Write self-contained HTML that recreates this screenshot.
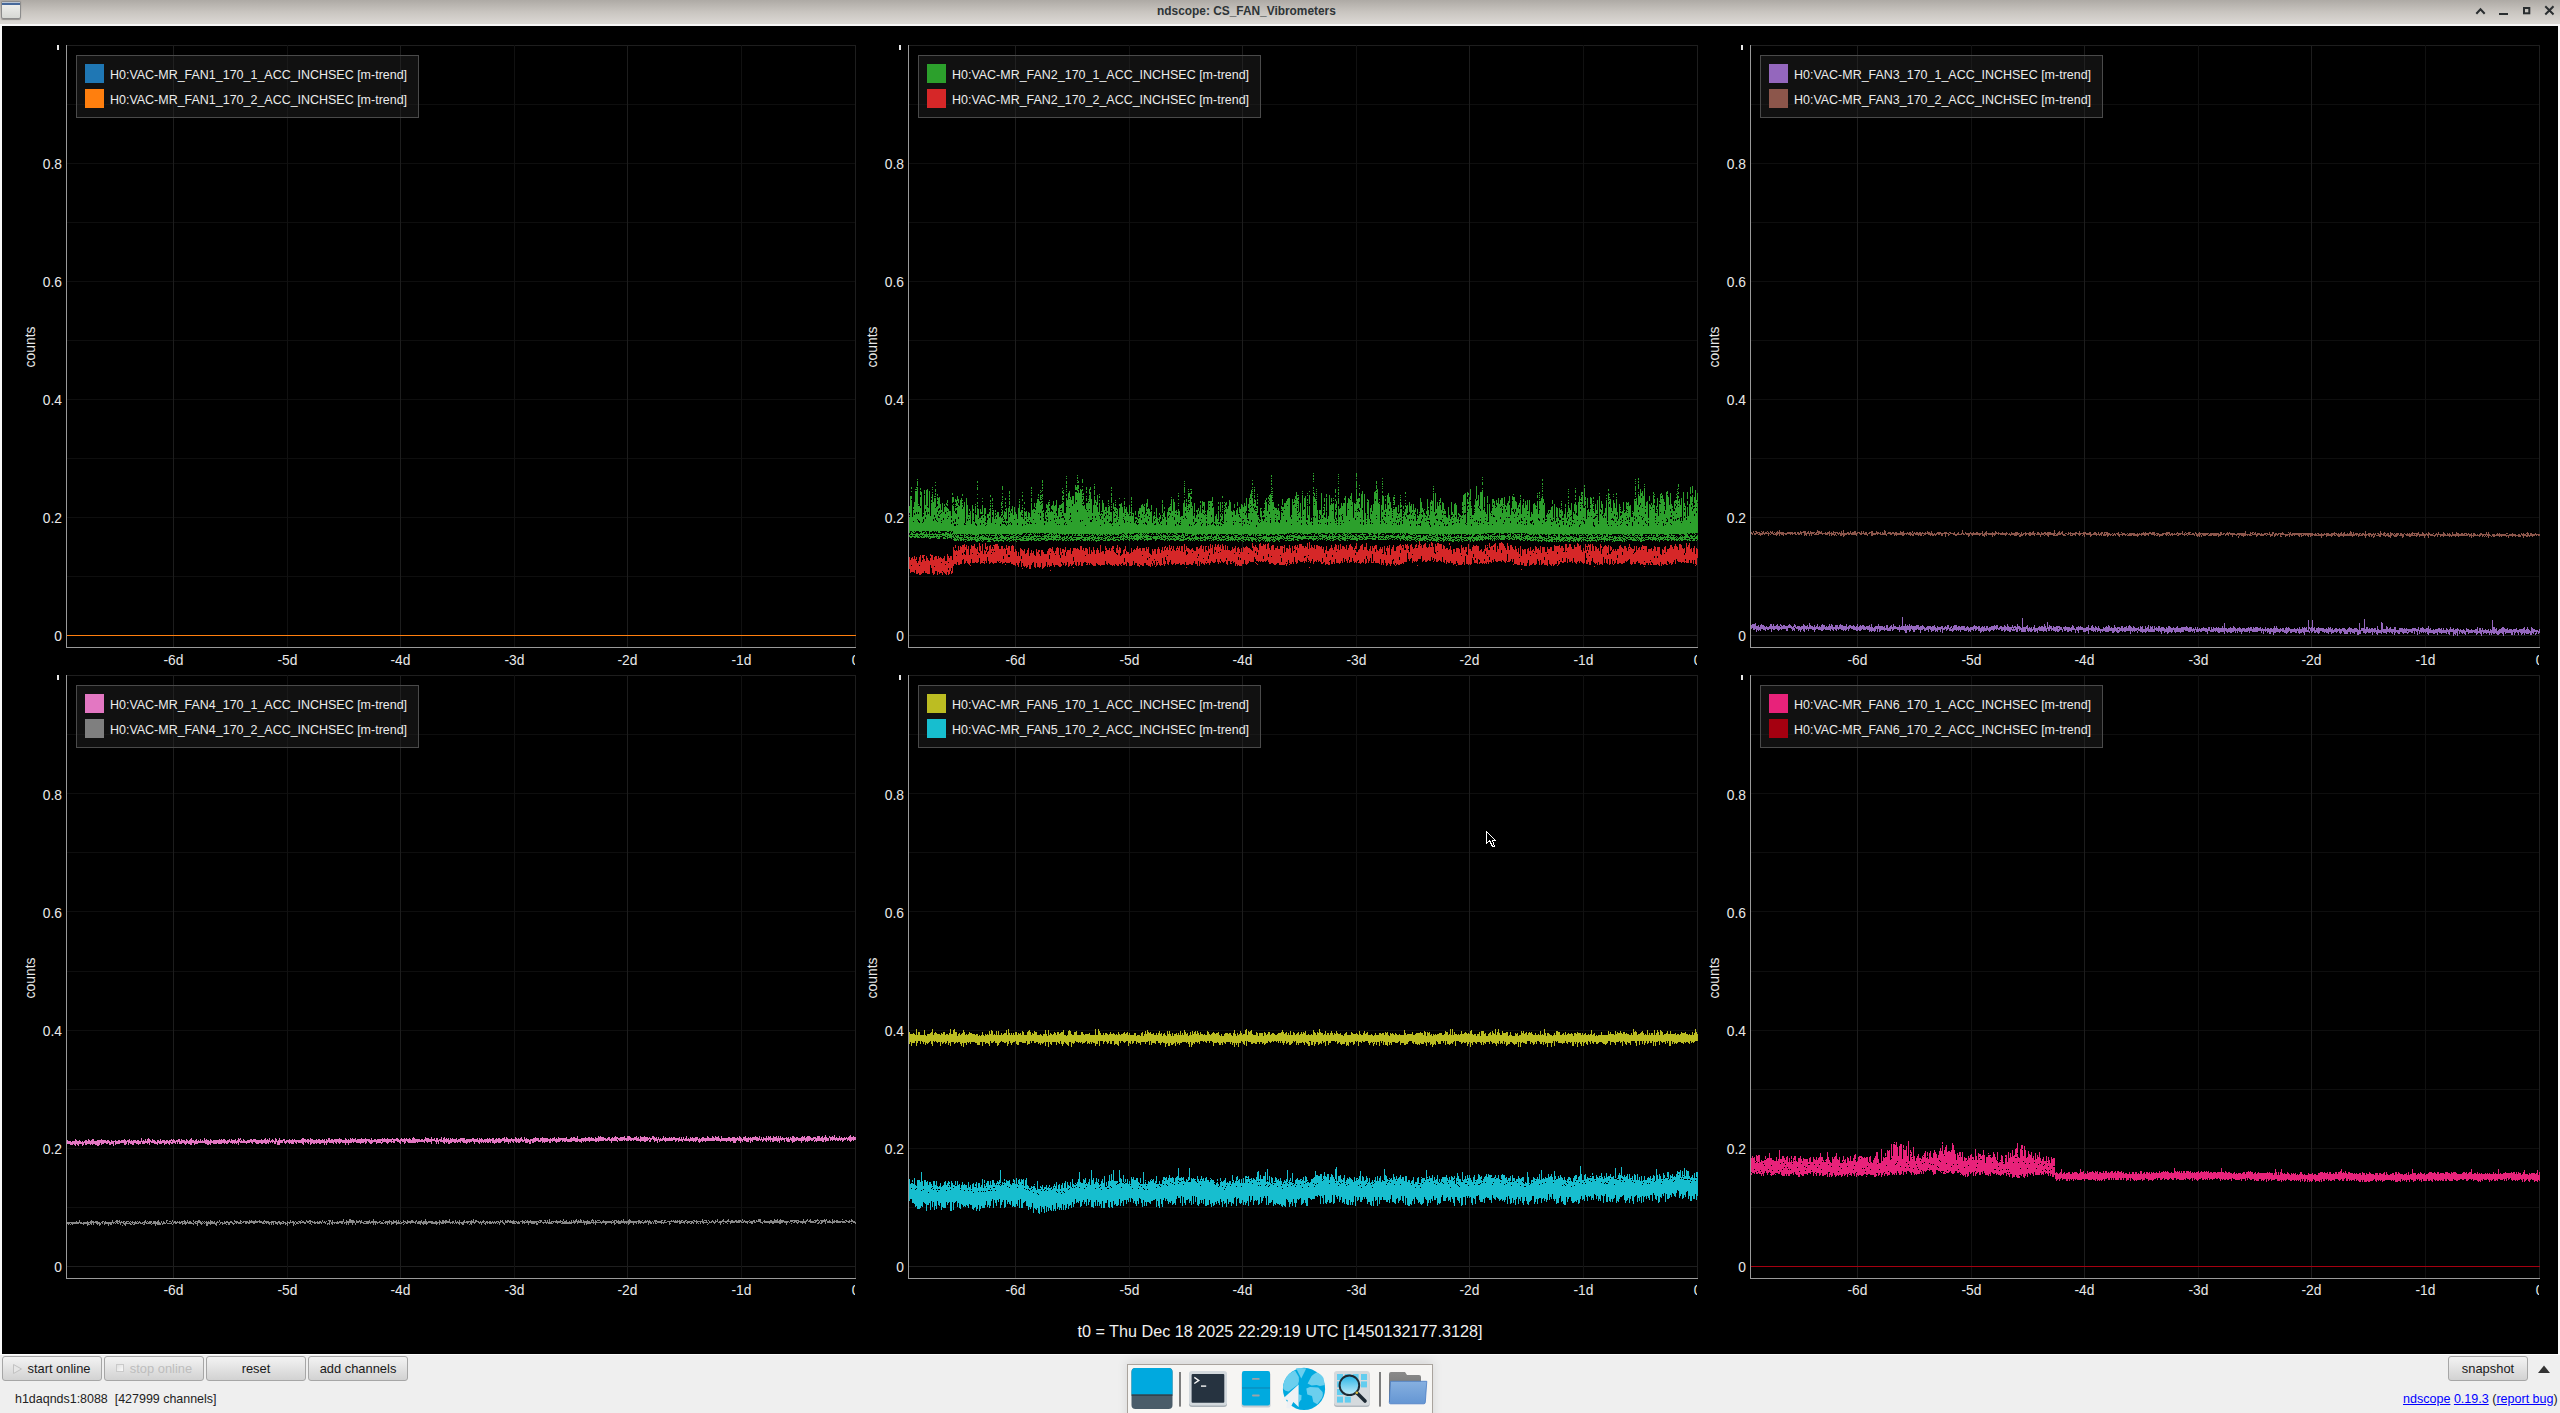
<!DOCTYPE html><html><head><meta charset="utf-8"><title>ndscope</title><style>
*{box-sizing:border-box}
html,body{margin:0;padding:0;width:2560px;height:1413px;overflow:hidden;background:#efefef;font-family:"Liberation Sans", sans-serif}
.abs{position:absolute}
#title{position:absolute;left:0;top:0;width:2560px;height:24px;background:linear-gradient(#aeaaa5,#c9c5c0 50%,#dcd9d5)}
#title .t{position:absolute;left:1157px;top:4px;font-weight:bold;font-size:11.9px;color:#2e3436;line-height:14px}
#wline{position:absolute;left:0;top:24px;width:2560px;height:2px;background:#f7f7f7}
#main{position:absolute;left:2px;top:26px;width:2556px;height:1328px;background:#000}
.lbl{position:absolute;color:#e8e8e8;font-size:13.8px;line-height:14px;white-space:nowrap}
.legend{position:absolute;background:rgba(39,39,39,0.43);border:1px solid #4a4a4a}
.sw{position:absolute;width:19px;height:19px}
.lt{position:absolute;color:#ececec;font-size:12.47px;line-height:14px;white-space:nowrap}
.btn{position:absolute;height:25px;border:1px solid #a6a6a6;border-radius:3px;background:linear-gradient(#f3f3f3,#d2d2d2);font-size:12.9px;color:#1a1a1a;text-align:center;line-height:23px;white-space:nowrap}
</style></head><body><div id="title"><div class="t">ndscope: CS_FAN_Vibrometers</div></div><div id="wline"></div><div class="abs" style="left:1px;top:1px;width:20px;height:18px;border:1px solid #8c8c8c;border-radius:2px;background:linear-gradient(#f2f2f0,#d6d8d4);box-shadow:0 0.5px 1px rgba(0,0,0,0.3)"><div style="position:absolute;left:0;top:0;right:0;height:1px;background:#b8c4d4"></div><div style="position:absolute;left:0;top:1px;right:0;height:2px;background:#46689a"></div></div><svg class="abs" style="left:2460px;top:0" width="100" height="24" viewBox="0 0 100 24">
<g stroke="#2a2e30" stroke-width="2" fill="none" stroke-linecap="square">
<path d="M17 13 L20.5 9.3 L24 13"/>
<path d="M40 14 H47"/>
<rect x="64" y="8" width="5.3" height="5.3"/>
<path d="M86 7 L92.8 13.8 M92.8 7 L86 13.8"/>
</g></svg><div class="abs" style="left:0;top:24px;width:2px;height:1331px;background:#f8f8f8"></div><div class="abs" style="left:2558px;top:24px;width:2px;height:1331px;background:#f8f8f8"></div><div id="main"></div><div class="abs" style="left:0;top:1354px;width:2560px;height:1px;background:#fdfdfd"></div><svg class="abs" style="left:0;top:0;overflow:visible" width="2560" height="1413" shape-rendering="crispEdges"><path d="M67 576.5H855M67 517.5H855M67 458.5H855M67 399.5H855M67 340.5H855M67 281.5H855M67 222.5H855M67 163.5H855M67 104.5H855" stroke="#0e0e0e" stroke-width="1"/><path d="M67 635.5H855 M66 45.5H855 M855.5 45V647" stroke="#1e1e1e" stroke-width="1"/><path d="M173.5 45V647M400.5 45V647M627.5 45V647" stroke="#1d1d1d" stroke-width="1"/><path d="M287.5 45V647M514.5 45V647M741.5 45V647" stroke="#111111" stroke-width="1"/><path d="M67.5 635v1m1 -1v1m1 -1v1m1 -1v1m1 -1v1m1 -1v1m1 -1v1m1 -1v1m1 -1v1m1 -1v1m1 -1v1m1 -1v1m1 -1v1m1 -1v1m1 -1v1m1 -1v1m1 -1v1m1 -1v1m1 -1v1m1 -1v1m1 -1v1m1 -1v1m1 -1v1m1 -1v1m1 -1v1m1 -1v1m1 -1v1m1 -1v1m1 -1v1m1 -1v1m1 -1v1m1 -1v1m1 -1v1m1 -1v1m1 -1v1m1 -1v1m1 -1v1m1 -1v1m1 -1v1m1 -1v1m1 -1v1m1 -1v1m1 -1v1m1 -1v1m1 -1v1m1 -1v1m1 -1v1m1 -1v1m1 -1v1m1 -1v1m1 -1v1m1 -1v1m1 -1v1m1 -1v1m1 -1v1m1 -1v1m1 -1v1m1 -1v1m1 -1v1m1 -1v1m1 -1v1m1 -1v1m1 -1v1m1 -1v1m1 -1v1m1 -1v1m1 -1v1m1 -1v1m1 -1v1m1 -1v1m1 -1v1m1 -1v1m1 -1v1m1 -1v1m1 -1v1m1 -1v1m1 -1v1m1 -1v1m1 -1v1m1 -1v1m1 -1v1m1 -1v1m1 -1v1m1 -1v1m1 -1v1m1 -1v1m1 -1v1m1 -1v1m1 -1v1m1 -1v1m1 -1v1m1 -1v1m1 -1v1m1 -1v1m1 -1v1m1 -1v1m1 -1v1m1 -1v1m1 -1v1m1 -1v1m1 -1v1m1 -1v1m1 -1v1m1 -1v1m1 -1v1m1 -1v1m1 -1v1m1 -1v1m1 -1v1m1 -1v1m1 -1v1m1 -1v1m1 -1v1m1 -1v1m1 -1v1m1 -1v1m1 -1v1m1 -1v1m1 -1v1m1 -1v1m1 -1v1m1 -1v1m1 -1v1m1 -1v1m1 -1v1m1 -1v1m1 -1v1m1 -1v1m1 -1v1m1 -1v1m1 -1v1m1 -1v1m1 -1v1m1 -1v1m1 -1v1m1 -1v1m1 -1v1m1 -1v1m1 -1v1m1 -1v1m1 -1v1m1 -1v1m1 -1v1m1 -1v1m1 -1v1m1 -1v1m1 -1v1m1 -1v1m1 -1v1m1 -1v1m1 -1v1m1 -1v1m1 -1v1m1 -1v1m1 -1v1m1 -1v1m1 -1v1m1 -1v1m1 -1v1m1 -1v1m1 -1v1m1 -1v1m1 -1v1m1 -1v1m1 -1v1m1 -1v1m1 -1v1m1 -1v1m1 -1v1m1 -1v1m1 -1v1m1 -1v1m1 -1v1m1 -1v1m1 -1v1m1 -1v1m1 -1v1m1 -1v1m1 -1v1m1 -1v1m1 -1v1m1 -1v1m1 -1v1m1 -1v1m1 -1v1m1 -1v1m1 -1v1m1 -1v1m1 -1v1m1 -1v1m1 -1v1m1 -1v1m1 -1v1m1 -1v1m1 -1v1m1 -1v1m1 -1v1m1 -1v1m1 -1v1m1 -1v1m1 -1v1m1 -1v1m1 -1v1m1 -1v1m1 -1v1m1 -1v1m1 -1v1m1 -1v1m1 -1v1m1 -1v1m1 -1v1m1 -1v1m1 -1v1m1 -1v1m1 -1v1m1 -1v1m1 -1v1m1 -1v1m1 -1v1m1 -1v1m1 -1v1m1 -1v1m1 -1v1m1 -1v1m1 -1v1m1 -1v1m1 -1v1m1 -1v1m1 -1v1m1 -1v1m1 -1v1m1 -1v1m1 -1v1m1 -1v1m1 -1v1m1 -1v1m1 -1v1m1 -1v1m1 -1v1m1 -1v1m1 -1v1m1 -1v1m1 -1v1m1 -1v1m1 -1v1m1 -1v1m1 -1v1m1 -1v1m1 -1v1m1 -1v1m1 -1v1m1 -1v1m1 -1v1m1 -1v1m1 -1v1m1 -1v1m1 -1v1m1 -1v1m1 -1v1m1 -1v1m1 -1v1m1 -1v1m1 -1v1m1 -1v1m1 -1v1m1 -1v1m1 -1v1m1 -1v1m1 -1v1m1 -1v1m1 -1v1m1 -1v1m1 -1v1m1 -1v1m1 -1v1m1 -1v1m1 -1v1m1 -1v1m1 -1v1m1 -1v1m1 -1v1m1 -1v1m1 -1v1m1 -1v1m1 -1v1m1 -1v1m1 -1v1m1 -1v1m1 -1v1m1 -1v1m1 -1v1m1 -1v1m1 -1v1m1 -1v1m1 -1v1m1 -1v1m1 -1v1m1 -1v1m1 -1v1m1 -1v1m1 -1v1m1 -1v1m1 -1v1m1 -1v1m1 -1v1m1 -1v1m1 -1v1m1 -1v1m1 -1v1m1 -1v1m1 -1v1m1 -1v1m1 -1v1m1 -1v1m1 -1v1m1 -1v1m1 -1v1m1 -1v1m1 -1v1m1 -1v1m1 -1v1m1 -1v1m1 -1v1m1 -1v1m1 -1v1m1 -1v1m1 -1v1m1 -1v1m1 -1v1m1 -1v1m1 -1v1m1 -1v1m1 -1v1m1 -1v1m1 -1v1m1 -1v1m1 -1v1m1 -1v1m1 -1v1m1 -1v1m1 -1v1m1 -1v1m1 -1v1m1 -1v1m1 -1v1m1 -1v1m1 -1v1m1 -1v1m1 -1v1m1 -1v1m1 -1v1m1 -1v1m1 -1v1m1 -1v1m1 -1v1m1 -1v1m1 -1v1m1 -1v1m1 -1v1m1 -1v1m1 -1v1m1 -1v1m1 -1v1m1 -1v1m1 -1v1m1 -1v1m1 -1v1m1 -1v1m1 -1v1m1 -1v1m1 -1v1m1 -1v1m1 -1v1m1 -1v1m1 -1v1m1 -1v1m1 -1v1m1 -1v1m1 -1v1m1 -1v1m1 -1v1m1 -1v1m1 -1v1m1 -1v1m1 -1v1m1 -1v1m1 -1v1m1 -1v1m1 -1v1m1 -1v1m1 -1v1m1 -1v1m1 -1v1m1 -1v1m1 -1v1m1 -1v1m1 -1v1m1 -1v1m1 -1v1m1 -1v1m1 -1v1m1 -1v1m1 -1v1m1 -1v1m1 -1v1m1 -1v1m1 -1v1m1 -1v1m1 -1v1m1 -1v1m1 -1v1m1 -1v1m1 -1v1m1 -1v1m1 -1v1m1 -1v1m1 -1v1m1 -1v1m1 -1v1m1 -1v1m1 -1v1m1 -1v1m1 -1v1m1 -1v1m1 -1v1m1 -1v1m1 -1v1m1 -1v1m1 -1v1m1 -1v1m1 -1v1m1 -1v1m1 -1v1m1 -1v1m1 -1v1m1 -1v1m1 -1v1m1 -1v1m1 -1v1m1 -1v1m1 -1v1m1 -1v1m1 -1v1m1 -1v1m1 -1v1m1 -1v1m1 -1v1m1 -1v1m1 -1v1m1 -1v1m1 -1v1m1 -1v1m1 -1v1m1 -1v1m1 -1v1m1 -1v1m1 -1v1m1 -1v1m1 -1v1m1 -1v1m1 -1v1m1 -1v1m1 -1v1m1 -1v1m1 -1v1m1 -1v1m1 -1v1m1 -1v1m1 -1v1m1 -1v1m1 -1v1m1 -1v1m1 -1v1m1 -1v1m1 -1v1m1 -1v1m1 -1v1m1 -1v1m1 -1v1m1 -1v1m1 -1v1m1 -1v1m1 -1v1m1 -1v1m1 -1v1m1 -1v1m1 -1v1m1 -1v1m1 -1v1m1 -1v1m1 -1v1m1 -1v1m1 -1v1m1 -1v1m1 -1v1m1 -1v1m1 -1v1m1 -1v1m1 -1v1m1 -1v1m1 -1v1m1 -1v1m1 -1v1m1 -1v1m1 -1v1m1 -1v1m1 -1v1m1 -1v1m1 -1v1m1 -1v1m1 -1v1m1 -1v1m1 -1v1m1 -1v1m1 -1v1m1 -1v1m1 -1v1m1 -1v1m1 -1v1m1 -1v1m1 -1v1m1 -1v1m1 -1v1m1 -1v1m1 -1v1m1 -1v1m1 -1v1m1 -1v1m1 -1v1m1 -1v1m1 -1v1m1 -1v1m1 -1v1m1 -1v1m1 -1v1m1 -1v1m1 -1v1m1 -1v1m1 -1v1m1 -1v1m1 -1v1m1 -1v1m1 -1v1m1 -1v1m1 -1v1m1 -1v1m1 -1v1m1 -1v1m1 -1v1m1 -1v1m1 -1v1m1 -1v1m1 -1v1m1 -1v1m1 -1v1m1 -1v1m1 -1v1m1 -1v1m1 -1v1m1 -1v1m1 -1v1m1 -1v1m1 -1v1m1 -1v1m1 -1v1m1 -1v1m1 -1v1m1 -1v1m1 -1v1m1 -1v1m1 -1v1m1 -1v1m1 -1v1m1 -1v1m1 -1v1m1 -1v1m1 -1v1m1 -1v1m1 -1v1m1 -1v1m1 -1v1m1 -1v1m1 -1v1m1 -1v1m1 -1v1m1 -1v1m1 -1v1m1 -1v1m1 -1v1m1 -1v1m1 -1v1m1 -1v1m1 -1v1m1 -1v1m1 -1v1m1 -1v1m1 -1v1m1 -1v1m1 -1v1m1 -1v1m1 -1v1m1 -1v1m1 -1v1m1 -1v1m1 -1v1m1 -1v1m1 -1v1m1 -1v1m1 -1v1m1 -1v1m1 -1v1m1 -1v1m1 -1v1m1 -1v1m1 -1v1m1 -1v1m1 -1v1m1 -1v1m1 -1v1m1 -1v1m1 -1v1m1 -1v1m1 -1v1m1 -1v1m1 -1v1m1 -1v1m1 -1v1m1 -1v1m1 -1v1m1 -1v1m1 -1v1m1 -1v1m1 -1v1m1 -1v1m1 -1v1m1 -1v1m1 -1v1m1 -1v1m1 -1v1m1 -1v1m1 -1v1m1 -1v1m1 -1v1m1 -1v1m1 -1v1m1 -1v1m1 -1v1m1 -1v1m1 -1v1m1 -1v1m1 -1v1m1 -1v1m1 -1v1m1 -1v1m1 -1v1m1 -1v1m1 -1v1m1 -1v1m1 -1v1m1 -1v1m1 -1v1m1 -1v1m1 -1v1m1 -1v1m1 -1v1m1 -1v1m1 -1v1m1 -1v1m1 -1v1m1 -1v1m1 -1v1m1 -1v1m1 -1v1m1 -1v1m1 -1v1m1 -1v1m1 -1v1m1 -1v1m1 -1v1m1 -1v1m1 -1v1m1 -1v1m1 -1v1m1 -1v1m1 -1v1m1 -1v1m1 -1v1m1 -1v1m1 -1v1m1 -1v1m1 -1v1m1 -1v1m1 -1v1m1 -1v1m1 -1v1m1 -1v1m1 -1v1m1 -1v1m1 -1v1m1 -1v1m1 -1v1m1 -1v1m1 -1v1m1 -1v1m1 -1v1m1 -1v1m1 -1v1m1 -1v1m1 -1v1m1 -1v1m1 -1v1m1 -1v1m1 -1v1m1 -1v1m1 -1v1m1 -1v1m1 -1v1m1 -1v1m1 -1v1m1 -1v1m1 -1v1m1 -1v1m1 -1v1m1 -1v1m1 -1v1m1 -1v1m1 -1v1m1 -1v1m1 -1v1m1 -1v1m1 -1v1m1 -1v1m1 -1v1m1 -1v1m1 -1v1m1 -1v1m1 -1v1m1 -1v1m1 -1v1m1 -1v1m1 -1v1m1 -1v1m1 -1v1m1 -1v1m1 -1v1m1 -1v1m1 -1v1m1 -1v1m1 -1v1m1 -1v1m1 -1v1m1 -1v1m1 -1v1m1 -1v1m1 -1v1m1 -1v1m1 -1v1m1 -1v1m1 -1v1m1 -1v1m1 -1v1m1 -1v1m1 -1v1m1 -1v1m1 -1v1m1 -1v1m1 -1v1m1 -1v1m1 -1v1m1 -1v1m1 -1v1m1 -1v1m1 -1v1m1 -1v1m1 -1v1m1 -1v1m1 -1v1m1 -1v1m1 -1v1m1 -1v1m1 -1v1m1 -1v1m1 -1v1m1 -1v1m1 -1v1m1 -1v1m1 -1v1m1 -1v1m1 -1v1" stroke="#ff7f0e" stroke-width="1" fill="none"/><path d="M66.5 45V648 M66 647.5H856" stroke="#9a9a9a" stroke-width="1"/><rect x="57" y="45" width="2" height="5" fill="#e8e8e8"/></svg><div class="lbl" style="left:-38px;width:100px;text-align:right;top:629.5px">0</div><div class="lbl" style="left:-38px;width:100px;text-align:right;top:511.5px">0.2</div><div class="lbl" style="left:-38px;width:100px;text-align:right;top:393.5px">0.4</div><div class="lbl" style="left:-38px;width:100px;text-align:right;top:275.5px">0.6</div><div class="lbl" style="left:-38px;width:100px;text-align:right;top:157.5px">0.8</div><div class="lbl" style="left:-20px;width:100px;top:340.0px;text-align:center;font-size:13.9px;transform:rotate(-90deg)">counts</div><div class="abs" style="left:66px;top:648px;width:789px;height:24px;overflow:hidden"><div class="lbl" style="left:77.5px;width:60px;text-align:center;top:6px">-6d</div><div class="lbl" style="left:191.5px;width:60px;text-align:center;top:6px">-5d</div><div class="lbl" style="left:304.5px;width:60px;text-align:center;top:6px">-4d</div><div class="lbl" style="left:418.5px;width:60px;text-align:center;top:6px">-3d</div><div class="lbl" style="left:531.5px;width:60px;text-align:center;top:6px">-2d</div><div class="lbl" style="left:645.5px;width:60px;text-align:center;top:6px">-1d</div><div class="lbl" style="left:759.5px;width:60px;text-align:center;top:6px">0</div></div><div class="legend" style="left:76px;top:55px;width:343px;height:63px"></div><div class="sw" style="left:85px;top:64px;background:#1f77b4"></div><div class="lt" style="left:110px;top:67.8px">H0:VAC-MR_FAN1_170_1_ACC_INCHSEC [m-trend]</div><div class="sw" style="left:85px;top:89px;background:#ff7f0e"></div><div class="lt" style="left:110px;top:92.8px">H0:VAC-MR_FAN1_170_2_ACC_INCHSEC [m-trend]</div><svg class="abs" style="left:0;top:0;overflow:visible" width="2560" height="1413" shape-rendering="crispEdges"><path d="M909 576.5H1697M909 517.5H1697M909 458.5H1697M909 399.5H1697M909 340.5H1697M909 281.5H1697M909 222.5H1697M909 163.5H1697M909 104.5H1697" stroke="#0e0e0e" stroke-width="1"/><path d="M909 635.5H1697 M908 45.5H1697 M1697.5 45V647" stroke="#1e1e1e" stroke-width="1"/><path d="M1015.5 45V647M1242.5 45V647M1469.5 45V647" stroke="#1d1d1d" stroke-width="1"/><path d="M1129.5 45V647M1356.5 45V647M1583.5 45V647" stroke="#111111" stroke-width="1"/><path d="M909.5 506v7m0 2v1m0 1v16m0 2v2m1 -41v35m0 3v1m0 1v2m1 -51v2m0 2v1m0 4v3m0 1v31m0 1v3m0 1v2m1 -21v15m0 1v4m1 -30v2m0 1v11m0 1v11m0 1v1m0 1v1m1 -35v11m0 2v16m0 1v1m0 1v1m0 1v2m1 -49v1m0 1v41m0 2v4m1 -51v1m0 1v1m0 1v21m0 2v17m0 2v4m1 -58v1m0 1v5m0 1v32m0 1v11m0 2v5m1 -34v1m0 1v6m0 2v6m0 2v9m0 3v1m0 1v2m1 -32v15m0 2v9m0 2v2m0 1v1m1 -50v2m0 1v4m0 2v9m0 2v24m0 1v2m0 1v1m1 -45v43m0 1v2m1 -21v5m0 1v8m0 2v3m0 1v1m1 -25v1m0 2v3m0 3v9m0 1v3m0 1v2m1 -48v4m0 1v36m0 1v1m0 1v4m1 -33v4m0 2v6m0 2v13m0 2v3m1 -47v22m0 3v16m0 1v6m1 -49v17m0 1v24m0 3v3m1 -29v4m0 2v17m0 3v1m0 1v2m1 -47v46m0 1v1m1 -23v16m0 2v1m0 1v3m1 -42v1m0 2v2m0 1v29m0 2v1m0 1v2m1 -51v1m0 1v1m0 2v1m0 1v37m0 2v2m0 1v2m1 -36v17m0 2v10m0 3v4m1 -42v1m0 1v17m0 2v15m0 2v1m0 1v2m1 -56v1m0 2v1m0 3v3m0 1v2m0 1v1m0 1v9m0 1v10m0 2v11m0 2v2m0 1v1m1 -30v13m0 1v11m0 2v4m1 -44v2m0 1v3m0 1v3m0 2v6m0 2v7m0 1v9m0 3v3m0 1v1m1 -41v11m0 2v5m0 2v15m0 1v1m0 1v3m1 -42v11m0 2v4m0 1v2m0 1v15m0 1v5m1 -35v9m0 1v17m0 1v1m0 1v1m0 1v1m1 -27v2m0 1v7m0 1v1m0 1v8m0 3v1m0 1v1m1 -34v28m0 2v3m1 -24v6m0 2v11m0 2v3m0 1v2m1 -35v2m0 1v24m0 3v2m0 1v2m1 -33v6m0 2v17m0 1v5m0 1v1m1 -36v2m0 2v24m0 1v3m0 1v1m1 -37v3m0 1v2m0 2v3m0 1v6m0 1v13m0 1v6m1 -30v7m0 1v15m0 1v3m0 1v1m1 -27v20m0 3v4m1 -27v20m0 1v6m1 -22v2m0 2v2m0 2v8m0 2v5m1 -46v2m0 2v6m0 2v26m0 2v2m0 1v1m1 -40v5m0 2v1m0 1v15m0 2v11m0 1v3m0 1v1m1 -29v13m0 2v9m0 2v4m1 -42v3m0 2v1m0 1v1m0 1v3m0 2v6m0 3v2m0 2v8m0 1v2m0 1v3m1 -41v6m0 2v2m0 4v21m0 1v2m0 1v2m1 -45v5m0 2v3m0 1v17m0 1v9m0 1v5m1 -41v4m0 2v12m0 2v15m0 1v3m0 1v2m1 -35v28m0 3v2m1 -39v36m0 1v4m1 -43v36m0 1v1m0 1v4m1 -47v2m0 4v1m0 2v1m0 1v2m0 2v25m0 1v1m0 1v1m0 1v1m1 -33v27m0 4v3m1 -39v21m0 2v13m0 1v1m1 -17v1m0 1v9m0 1v1m0 1v1m0 1v1m0 1v1m1 -44v37m0 1v2m0 1v1m1 -35v14m0 2v14m0 1v3m0 1v1m1 -26v2m0 1v16m0 1v1m0 1v4m1 -32v2m0 2v1m0 1v4m0 1v14m0 3v1m0 1v2m1 -30v24m0 1v4m1 -16v10m0 1v1m0 1v4m1 -36v30m0 2v3m1 -31v2m0 2v7m0 1v14m0 2v1m0 1v1m1 -18v13m0 2v3m1 -36v1m0 1v7m0 1v9m0 2v16m1 -26v9m0 2v10m0 1v1m0 1v3m1 -61v2m0 2v1m0 1v3m0 4v1m0 3v1m0 3v2m0 1v2m0 1v27m0 1v6m1 -33v9m0 1v18m0 1v3m1 -23v16m0 3v2m0 1v1m1 -32v5m0 4v5m0 2v9m0 2v4m1 -28v2m0 2v3m0 1v15m0 1v3m0 1v1m1 -43v1m0 2v1m0 3v9m0 1v19m0 1v5m0 1v1m1 -27v1m0 2v5m0 1v10m0 1v1m0 1v4m1 -33v26m0 2v4m1 -32v6m0 2v5m0 1v3m0 1v9m0 2v3m1 -17v1m0 1v9m0 1v1m0 1v3m1 -26v4m0 2v14m0 1v1m0 2v2m0 1v1m1 -28v20m0 2v6m1 -33v1m0 2v4m0 2v18m0 2v4m1 -47v2m0 3v2m0 1v1m0 1v2m0 1v26m0 3v3m0 1v1m1 -19v11m0 1v1m0 1v1m0 1v1m1 -42v3m0 2v1m0 1v2m0 1v1m0 1v1m0 1v3m0 2v17m0 1v1m0 2v2m1 -30v24m0 1v1m0 2v3m1 -22v15m0 1v1m0 1v2m0 1v2m1 -32v2m0 1v2m0 1v7m0 1v15m0 1v1m1 -26v2m0 2v17m0 1v4m1 -29v22m0 2v5m1 -29v23m0 3v1m0 1v2m1 -25v17m0 1v1m0 1v2m0 1v1m1 -25v8m0 2v9m0 1v2m0 1v2m1 -39v4m0 1v1m0 1v1m0 2v1m0 1v2m0 2v23m1 -55v4m0 3v1m0 2v2m0 1v1m0 1v1m0 1v1m0 2v2m0 2v5m0 2v5m0 2v10m0 1v4m0 1v1m1 -26v2m0 2v1m0 1v2m0 1v10m0 2v3m0 1v2m1 -31v8m0 2v1m0 2v10m0 3v3m1 -42v2m0 2v2m0 1v2m0 2v1m0 2v11m0 2v9m0 2v4m1 -32v11m0 2v4m0 1v8m0 1v1m0 1v2m0 1v1m1 -20v2m0 2v9m0 1v1m0 1v1m0 1v2m1 -33v26m0 1v1m0 1v3m1 -49v3m0 1v2m0 1v2m0 1v4m0 1v6m0 2v1m0 2v6m0 1v11m0 3v2m0 1v1m1 -31v11m0 1v11m0 2v3m0 1v1m1 -32v2m0 2v10m0 2v10m0 1v3m0 1v1m1 -35v29m0 1v2m0 1v1m1 -25v19m0 1v6m1 -34v12m0 1v14m0 1v1m0 1v1m0 1v1m1 -28v24m0 1v1m0 1v2m1 -27v21m0 1v4m0 1v1m1 -23v4m0 2v9m0 2v2m0 1v1m1 -32v26m0 1v1m0 1v1m0 1v1m1 -41v1m0 1v2m0 1v31m0 1v1m0 1v2m1 -28v23m0 1v1m0 1v3m1 -31v5m0 2v18m0 2v1m0 1v2m1 -49v1m0 2v2m0 2v2m0 4v1m0 1v2m0 1v3m0 1v2m0 1v7m0 2v8m0 3v4m1 -22v14m0 3v5m1 -39v2m0 4v2m0 1v22m0 2v2m0 1v1m0 1v1m1 -29v4m0 1v2m0 2v3m0 1v8m0 1v1m0 1v1m0 1v1m0 1v1m1 -30v23m0 2v5m1 -24v1m0 1v3m0 1v10m0 3v1m0 1v3m1 -29v10m0 2v9m0 1v1m0 1v5m1 -28v7m0 1v12m0 1v3m0 1v2m1 -23v5m0 2v11m0 2v3m1 -53v2m0 1v1m0 1v2m0 1v1m0 2v4m0 1v20m0 1v9m0 1v1m0 1v5m1 -31v23m0 3v2m0 1v1m1 -31v10m0 1v14m0 2v4m1 -37v4m0 2v3m0 1v20m0 1v3m0 1v3m1 -34v1m0 2v13m0 1v10m0 1v2m0 1v1m0 1v1m1 -38v30m0 3v2m0 1v2m1 -42v35m0 1v2m0 1v2m1 -46v2m0 1v1m0 1v14m0 1v19m0 3v1m0 1v3m1 -40v33m0 1v2m0 1v1m0 1v1m1 -51v1m0 1v1m0 2v5m0 2v2m0 1v8m0 3v2m0 2v13m0 3v1m0 1v1m0 1v1m1 -50v1m0 3v1m0 1v1m0 1v1m0 1v2m0 1v29m0 4v3m1 -60v3m0 1v2m0 1v2m0 1v1m0 3v3m0 1v1m0 2v1m0 1v6m0 2v22m0 1v1m0 1v1m0 1v2m1 -30v2m0 1v4m0 1v15m0 3v1m0 1v2m1 -19v2m0 2v9m0 1v5m1 -28v7m0 2v13m0 1v4m0 1v1m1 -37v4m0 2v3m0 2v2m0 1v15m0 2v2m0 1v3m1 -36v12m0 2v1m0 2v11m0 1v1m0 1v2m0 1v2m1 -39v9m0 1v21m0 1v6m1 -40v1m0 1v1m0 1v2m0 2v27m0 1v1m0 1v2m1 -28v8m0 1v13m0 2v1m0 1v2m1 -34v3m0 2v29m1 -35v5m0 2v21m0 1v1m0 1v2m0 1v1m1 -39v33m0 1v6m1 -35v8m0 1v3m0 2v15m0 1v4m1 -35v17m0 1v11m0 1v5m1 -40v11m0 2v5m0 1v19m0 1v2m1 -25v8m0 1v8m0 2v3m0 1v1m1 -32v26m0 1v1m0 1v1m0 1v2m1 -36v12m0 2v5m0 1v15m1 -35v4m0 1v1m0 1v22m0 2v2m0 1v1m1 -36v4m0 2v1m0 1v5m0 1v16m0 4v1m1 -51v1m0 2v2m0 3v4m0 1v1m0 1v10m0 2v1m0 2v17m0 2v4m1 -51v1m0 1v2m0 1v2m0 1v2m0 2v14m0 2v16m0 3v1m0 1v2m1 -28v5m0 2v3m0 2v10m0 1v4m1 -27v9m0 1v12m0 3v1m0 1v1m1 -65v1m0 1v1m0 2v3m0 1v3m0 1v1m0 1v1m0 2v2m0 2v8m0 1v17m0 1v9m0 2v3m0 1v1m1 -41v34m0 2v2m0 1v1m1 -47v43m0 2v1m0 1v1m1 -50v7m0 1v8m0 1v11m0 1v14m0 3v2m1 -42v16m0 2v2m0 2v15m0 2v2m0 1v2m1 -41v21m0 1v12m0 2v4m1 -44v8m0 2v30m0 2v3m1 -45v38m0 3v1m0 1v2m1 -37v30m0 1v1m0 1v1m0 1v1m1 -55v5m0 2v44m0 1v1m0 1v1m1 -53v3m0 2v8m0 2v32m0 3v4m1 -66v1m0 1v2m0 1v1m0 1v1m0 2v6m0 2v17m0 2v22m0 1v1m0 1v3m1 -59v2m0 2v4m0 1v46m0 1v3m1 -47v43m0 1v3m1 -51v31m0 2v12m0 1v1m0 1v2m0 1v1m1 -51v49m1 -60v4m0 3v1m0 2v2m0 3v1m0 1v1m0 2v3m0 1v1m0 1v15m0 1v13m0 2v2m0 1v1m1 -47v2m0 1v4m0 2v2m0 2v30m0 1v1m0 1v2m1 -36v29m0 3v4m1 -32v16m0 1v8m0 3v4m1 -54v3m0 1v2m0 3v1m0 1v3m0 2v6m0 1v24m0 1v1m0 1v1m0 1v1m1 -37v8m0 1v22m0 1v1m0 1v4m1 -42v1m0 1v16m0 1v16m0 3v3m1 -51v5m0 1v7m0 1v6m0 1v25m0 1v5m1 -54v3m0 2v28m0 2v12m0 2v1m0 1v1m1 -40v21m0 2v12m0 1v1m0 1v2m0 1v1m1 -28v3m0 2v1m0 1v16m0 1v3m1 -35v29m0 1v3m0 1v2m1 -57v1m0 1v3m0 1v5m0 1v39m0 2v3m1 -40v3m0 2v11m0 2v16m0 2v3m0 1v1m1 -39v18m0 1v14m0 3v1m0 1v2m1 -47v10m0 2v29m0 1v2m0 1v1m1 -29v23m0 1v5m1 -47v1m0 1v2m0 2v1m0 2v12m0 1v18m0 1v1m0 1v2m0 1v1m1 -27v2m0 3v6m0 1v10m0 1v1m0 1v1m1 -29v1m0 1v2m0 1v19m0 2v3m1 -40v12m0 2v5m0 1v16m0 1v1m0 1v1m1 -37v31m0 4v1m0 1v1m1 -31v6m0 2v4m0 2v11m0 1v1m0 1v1m0 1v1m1 -34v4m0 1v2m0 2v20m0 1v4m1 -34v27m0 1v1m0 1v2m1 -28v2m0 2v4m0 2v14m0 1v2m0 1v2m1 -41v2m0 1v1m0 1v1m0 1v27m0 2v1m0 1v3m1 -35v9m0 1v6m0 1v12m0 1v2m0 1v2m1 -29v9m0 2v13m0 2v2m1 -53v2m0 1v1m0 2v3m0 1v6m0 1v1m0 1v2m0 1v1m0 2v10m0 2v10m0 1v1m0 1v1m0 1v1m1 -17v2m0 1v9m0 3v2m1 -37v6m0 2v24m0 1v5m1 -34v4m0 1v5m0 1v16m0 3v2m0 1v1m1 -41v1m0 1v1m0 1v2m0 1v6m0 1v2m0 2v4m0 1v12m0 2v1m0 1v2m1 -33v2m0 1v3m0 1v20m0 2v1m0 1v1m1 -31v11m0 2v13m0 1v2m0 1v1m1 -23v1m0 1v17m0 1v1m0 1v2m1 -43v1m0 5v2m0 2v17m0 1v8m0 3v1m0 2v1m1 -37v30m0 2v4m1 -37v31m0 1v3m0 1v1m1 -33v26m0 1v1m0 1v1m0 1v2m1 -27v4m0 1v1m0 1v13m0 1v7m1 -43v1m0 2v4m0 1v14m0 3v11m0 1v2m0 1v1m1 -30v4m0 1v1m0 1v19m0 1v2m0 1v1m1 -33v31m0 1v1m1 -28v9m0 1v12m0 1v4m1 -25v19m0 4v1m0 1v1m1 -35v10m0 1v18m0 1v6m1 -29v1m0 3v6m0 1v12m0 1v1m0 1v1m1 -42v3m0 1v2m0 1v2m0 1v27m0 1v4m1 -26v1m0 2v18m0 2v1m0 1v2m1 -27v21m0 2v3m0 1v1m1 -18v10m0 2v5m1 -29v4m0 2v2m0 2v12m0 2v2m0 1v2m1 -23v2m0 1v2m0 2v9m0 1v6m1 -22v2m0 2v1m0 2v8m0 1v7m1 -30v6m0 2v4m0 1v10m0 1v5m1 -32v6m0 2v1m0 1v15m0 1v1m0 1v3m1 -31v32m1 -35v13m0 2v18m0 1v1m1 -36v8m0 2v19m0 1v1m0 1v3m1 -33v17m0 1v10m0 1v2m0 1v1m1 -35v2m0 1v7m0 1v2m0 1v15m0 1v1m0 1v2m0 1v2m1 -27v8m0 2v10m0 1v3m0 1v1m1 -37v8m0 1v11m0 2v8m0 1v6m1 -41v8m0 2v5m0 2v18m0 1v6m1 -33v11m0 2v13m0 1v2m0 1v2m1 -31v7m0 1v16m0 3v1m0 1v2m1 -28v21m0 3v4m1 -35v5m0 1v22m0 1v1m0 1v1m0 1v2m1 -17v11m0 3v1m1 -22v17m0 1v1m0 1v3m1 -27v2m0 1v4m0 2v3m0 1v8m0 3v3m1 -22v1m0 1v4m0 2v8m0 3v5m1 -33v27m0 1v4m1 -22v15m0 1v1m0 1v3m1 -20v1m0 2v12m0 1v2m0 1v1m1 -26v2m0 2v5m0 2v10m0 2v3m1 -24v4m0 3v11m0 1v2m0 1v1m0 1v1m1 -19v3m0 1v9m0 1v5m1 -40v3m0 1v9m0 2v1m0 1v16m0 3v1m0 1v2m1 -27v4m0 2v14m0 1v4m0 1v1m1 -33v2m0 2v22m0 2v3m0 1v2m1 -24v16m0 2v5m1 -20v2m0 3v9m0 2v1m0 1v1m1 -27v23m0 1v3m0 1v1m1 -33v8m0 2v15m0 2v2m0 1v2m1 -33v4m0 1v3m0 1v17m0 1v1m0 1v2m0 1v2m1 -37v1m0 1v5m0 2v21m0 2v1m0 1v2m1 -43v1m0 1v34m0 3v1m0 1v2m1 -29v5m0 1v16m0 1v1m0 1v2m0 1v1m1 -41v34m0 2v2m0 1v2m1 -38v15m0 3v14m0 1v2m0 1v3m1 -30v2m0 1v10m0 2v8m0 1v3m0 1v2m1 -31v25m0 1v4m1 -28v1m0 2v7m0 2v9m0 1v1m0 1v4m1 -47v1m0 1v2m0 2v1m0 3v1m0 1v1m0 3v24m0 2v5m1 -29v12m0 2v8m0 2v2m0 1v1m0 1v1m1 -24v3m0 1v1m0 1v1m0 1v8m0 3v1m0 1v3m1 -25v17m0 2v3m0 1v2m1 -25v20m0 1v1m0 1v2m1 -38v15m0 1v14m0 1v7m1 -60v1m0 1v1m0 1v1m0 1v6m0 1v1m0 2v1m0 2v33m0 3v2m0 1v1m1 -33v4m0 2v3m0 2v18m0 2v2m1 -41v3m0 1v15m0 1v15m0 1v1m0 2v2m1 -34v1m0 1v1m0 1v26m0 1v2m1 -50v1m0 1v1m0 1v6m0 1v2m0 2v7m0 1v22m0 3v2m0 1v1m1 -48v4m0 3v1m0 1v1m0 1v4m0 2v14m0 2v8m0 2v4m1 -51v1m0 3v1m0 2v38m0 4v3m1 -52v1m0 1v3m0 3v2m0 3v5m0 1v17m0 1v8m0 1v2m0 1v2m1 -34v30m0 1v2m0 1v1m1 -25v3m0 3v14m0 2v2m1 -37v9m0 1v11m0 1v10m0 2v2m0 1v1m1 -23v4m0 2v16m1 -30v2m0 3v7m0 1v12m0 1v4m1 -30v24m0 3v3m1 -32v3m0 3v3m0 2v16m0 2v2m0 1v1m1 -30v23m0 4v1m1 -38v2m0 2v16m0 1v12m0 2v5m1 -28v5m0 1v5m0 2v9m0 2v2m0 1v1m1 -40v7m0 1v14m0 1v12m0 1v2m0 1v1m1 -39v4m0 4v3m0 1v20m0 3v1m0 1v1m1 -38v12m0 1v19m0 1v3m0 1v2m1 -30v1m0 2v21m0 1v5m1 -26v1m0 1v2m0 2v2m0 3v10m0 1v2m1 -29v25m0 1v4m1 -39v23m0 1v9m0 2v3m1 -38v2m0 1v2m0 1v3m0 1v23m0 2v1m0 1v1m0 1v1m1 -40v33m0 2v3m1 -38v14m0 2v6m0 2v12m0 1v1m0 1v1m1 -44v5m0 1v3m0 2v14m0 2v10m0 3v1m0 1v1m1 -33v28m0 2v4m1 -19v1m0 2v9m0 2v2m0 1v1m1 -24v8m0 2v8m0 2v4m1 -26v26m1 -21v5m0 1v11m0 2v1m0 1v1m1 -39v2m0 2v4m0 1v10m0 1v12m0 1v4m0 1v1m1 -19v2m0 2v9m0 2v3m1 -38v10m0 2v3m0 2v15m0 3v1m0 1v2m1 -28v1m0 2v5m0 2v2m0 1v8m0 1v1m0 2v3m1 -45v2m0 4v2m0 1v3m0 1v1m0 1v1m0 2v6m0 1v1m0 2v10m0 2v2m0 1v1m1 -18v1m0 1v10m0 2v2m0 1v2m1 -39v1m0 2v1m0 2v1m0 1v24m0 2v2m0 1v1m1 -37v5m0 1v3m0 2v20m0 1v1m0 2v2m1 -38v3m0 2v14m0 1v13m0 1v1m0 1v1m0 1v1m1 -32v26m0 1v3m0 1v1m1 -35v28m0 1v6m1 -41v34m0 3v1m0 1v1m1 -38v32m0 3v4m1 -30v24m0 1v4m1 -28v3m0 2v17m0 2v5m1 -31v11m0 1v1m0 2v10m0 3v2m1 -36v4m0 3v23m0 1v1m0 1v1m0 1v2m1 -26v6m0 1v12m0 1v5m1 -30v24m0 1v3m0 1v1m1 -38v4m0 2v26m0 1v1m0 1v1m0 1v2m1 -27v21m0 2v3m0 1v1m1 -35v6m0 1v1m0 2v5m0 1v12m0 2v3m1 -31v8m0 1v4m0 1v12m0 1v1m0 1v2m1 -36v32m0 1v2m0 1v1m1 -36v14m0 2v1m0 1v1m0 2v8m0 2v3m0 1v1m1 -34v5m0 1v6m0 1v15m0 1v4m0 1v1m1 -39v19m0 2v10m0 3v1m0 1v1m1 -34v7m0 2v19m0 1v1m0 1v1m0 1v2m1 -43v13m0 2v21m0 3v3m1 -22v1m0 1v3m0 1v10m0 1v3m0 1v1m1 -36v4m0 2v1m0 2v6m0 2v14m0 2v4m1 -43v14m0 1v11m0 1v11m0 1v1m0 1v2m1 -47v5m0 1v4m0 1v2m0 1v28m0 1v2m1 -49v16m0 1v13m0 2v13m0 2v4m1 -61v1m0 2v2m0 2v1m0 1v1m0 1v1m0 1v1m0 1v1m0 2v14m0 1v21m0 3v5m1 -38v2m0 2v28m0 1v3m1 -53v1m0 1v3m0 1v1m0 1v3m0 1v3m0 1v5m0 2v24m0 4v2m1 -40v7m0 2v1m0 1v26m0 1v3m1 -35v2m0 1v1m0 1v14m0 2v8m0 2v1m0 1v1m0 1v1m1 -48v1m0 1v1m0 2v2m0 1v2m0 2v7m0 2v19m0 1v1m0 2v1m1 -24v1m0 1v3m0 2v12m0 1v1m0 1v1m0 1v2m1 -22v3m0 1v13m0 1v2m0 1v2m1 -34v9m0 3v1m0 1v14m0 1v2m0 1v1m1 -33v1m0 2v23m0 1v1m0 1v1m0 1v1m1 -24v1m0 2v15m0 3v3m1 -29v2m0 2v2m0 4v14m0 1v3m0 1v1m1 -38v1m0 4v1m0 1v7m0 2v15m0 2v4m1 -40v34m0 2v3m0 1v2m1 -44v2m0 2v14m0 1v4m0 1v19m1 -30v24m0 2v5m1 -45v2m0 2v1m0 2v32m0 1v4m1 -46v2m0 1v3m0 1v2m0 1v7m0 2v21m0 2v5m1 -48v24m0 1v1m0 3v11m0 3v2m0 1v1m1 -66v2m0 1v1m0 1v2m0 1v2m0 2v1m0 1v1m0 1v1m0 1v1m0 1v39m0 2v2m0 1v1m1 -52v1m0 2v1m0 1v1m0 1v1m0 1v1m0 2v1m0 1v33m0 2v1m0 1v2m1 -39v7m0 1v25m0 1v4m0 1v1m1 -35v28m0 2v1m0 1v3m1 -34v6m0 1v3m0 1v1m0 2v12m0 2v3m0 1v1m1 -33v26m0 2v1m0 1v2m1 -30v5m0 1v19m0 1v4m1 -36v2m0 2v12m0 2v14m0 1v4m1 -30v9m0 3v11m0 1v1m0 1v3m0 1v1m1 -22v14m0 1v4m1 -33v3m0 1v1m0 1v22m0 2v3m1 -40v6m0 2v4m0 2v21m0 1v2m0 1v1m1 -32v8m0 1v18m0 2v2m0 1v1m1 -37v6m0 1v25m0 2v2m1 -36v31m0 4v1m0 1v1m1 -40v19m0 2v12m0 2v3m0 1v1m1 -42v6m0 1v27m0 2v5m1 -42v36m0 2v1m0 1v1m0 1v1m1 -43v35m0 2v4m0 1v1m1 -24v16m0 1v1m0 1v1m0 1v1m0 1v1m1 -26v2m0 2v5m0 1v8m0 2v2m0 1v3m1 -42v35m0 1v2m0 1v2m1 -38v1m0 2v29m0 1v6m1 -42v4m0 1v29m0 2v3m1 -42v3m0 1v7m0 1v25m0 1v1m0 1v2m0 1v1m1 -48v41m0 1v1m0 1v2m0 1v1m1 -45v1m0 2v6m0 1v1m0 1v1m0 3v2m0 1v1m0 1v5m0 1v12m0 2v5m1 -46v1m0 1v3m0 1v11m0 1v20m0 2v4m0 1v1m1 -29v6m0 2v13m0 2v4m1 -36v31m0 2v3m1 -22v1m0 2v3m0 2v8m0 1v1m0 2v3m1 -49v1m0 1v1m0 1v39m0 2v4m1 -30v5m0 1v19m0 1v3m1 -41v9m0 2v25m0 1v4m1 -43v38m0 2v3m1 -19v2m0 2v10m0 2v1m0 1v1m1 -46v1m0 1v1m0 3v2m0 1v1m0 1v1m0 1v12m0 2v4m0 1v10m0 1v1m0 1v1m1 -24v19m0 2v1m0 1v2m1 -49v1m0 3v9m0 2v28m0 2v3m1 -17v12m0 2v3m1 -21v2m0 1v12m0 1v1m0 1v3m1 -17v1m0 2v8m0 3v1m0 1v2m1 -67v1m0 1v2m0 1v2m0 1v1m0 5v2m0 1v1m0 1v2m0 2v20m0 1v16m0 3v5m1 -48v3m0 1v5m0 1v1m0 1v28m0 1v3m0 1v2m1 -41v17m0 2v16m0 2v1m0 1v2m1 -51v1m0 1v1m0 1v1m0 1v1m0 1v1m0 1v1m0 1v33m0 2v3m1 -29v23m0 3v1m0 1v1m0 1v1m1 -21v2m0 2v11m0 2v1m0 1v1m1 -30v4m0 1v4m0 1v14m0 1v2m0 1v1m1 -29v5m0 4v4m0 1v10m0 1v2m0 1v2m1 -47v40m0 1v1m0 1v1m0 1v1m1 -24v3m0 1v14m0 1v6m1 -33v1m0 2v1m0 2v20m0 2v3m1 -40v4m0 2v2m0 1v8m0 2v16m0 2v3m0 1v1m1 -22v5m0 1v10m0 1v2m0 1v1m1 -45v3m0 1v13m0 1v22m0 1v4m0 1v1m1 -22v3m0 3v9m0 3v3m1 -24v17m0 3v2m0 1v1m1 -45v38m0 1v6m1 -35v17m0 1v11m0 2v3m0 1v1m1 -43v4m0 1v31m0 2v1m0 1v1m1 -35v6m0 1v28m0 1v1m1 -43v1m0 1v1m0 2v30m0 1v1m0 1v5m1 -22v14m0 2v3m0 1v1m1 -51v4m0 2v2m0 2v2m0 3v6m0 2v7m0 2v1m0 1v12m0 1v2m0 1v1m1 -39v7m0 1v6m0 3v16m0 2v1m0 1v1m1 -19v1m0 2v1m0 1v8m0 3v1m0 1v1m1 -65v1m0 1v1m0 1v1m0 2v1m0 1v1m0 3v1m0 1v2m0 1v3m0 1v1m0 1v6m0 2v27m0 1v1m0 1v4m1 -31v6m0 2v16m0 1v4m0 1v2m1 -33v14m0 1v1m0 1v8m0 2v2m0 1v1m0 1v1m1 -38v12m0 1v17m0 3v1m0 1v1m1 -33v8m0 1v1m0 4v13m0 1v1m0 1v4m1 -37v19m0 1v11m0 1v1m0 1v3m1 -42v2m0 3v33m0 1v4m1 -45v37m0 1v7m1 -25v17m0 1v1m0 1v1m0 1v1m1 -36v31m0 1v4m0 1v1m1 -43v11m0 1v23m0 1v1m0 1v1m0 1v1m1 -40v21m0 1v13m0 2v3m1 -43v3m0 1v34m0 1v3m0 1v1m1 -47v12m0 1v27m0 1v1m0 1v1m0 1v2m1 -38v31m0 2v5m1 -22v15m0 2v2m0 1v2m1 -37v30m0 3v4m1 -36v7m0 1v6m0 2v13m0 1v1m0 1v4m1 -67v4m0 1v1m0 2v7m0 1v12m0 1v31m0 1v2m0 1v4m1 -42v10m0 1v1m0 1v4m0 1v16m0 3v1m0 1v3m1 -43v10m0 3v22m0 2v2m0 1v1m1 -54v1m0 2v1m0 4v3m0 2v4m0 2v6m0 2v21m0 2v5m1 -32v10m0 1v3m0 2v9m0 1v1m0 1v2m0 1v1m1 -46v39m0 1v1m0 1v2m0 1v1m1 -49v17m0 2v25m0 2v3m1 -20v2m0 3v8m0 1v3m0 1v1m1 -45v39m0 1v1m0 1v2m0 1v1m1 -27v20m0 1v1m0 2v3m1 -21v1m0 2v1m0 1v9m0 3v4m1 -41v2m0 1v12m0 1v18m0 3v3m1 -39v34m0 2v1m0 1v1m1 -20v18m0 1v1m1 -31v11m0 2v1m0 2v11m0 1v1m0 1v1m1 -34v7m0 2v19m0 1v1m0 1v1m0 1v1m1 -28v12m0 1v9m0 3v4m1 -36v30m0 1v2m0 1v2m1 -48v45m0 1v2m1 -49v8m0 2v33m0 1v5m1 -59v3m0 1v4m0 1v2m0 1v22m0 1v2m0 1v15m0 2v2m1 -49v44m0 4v1m1 -35v37m1 -41v1m0 2v1m0 1v31m0 1v2m0 1v1m1 -19v1m0 2v10m0 2v1m0 1v2m1 -35v28m0 3v2m0 1v1m1 -62v1m0 2v1m0 1v2m0 1v1m0 1v1m0 2v2m0 2v15m0 2v5m0 2v14m0 1v1m0 1v2m0 1v1m1 -44v24m0 1v12m0 1v1m0 1v1m0 1v2m1 -30v5m0 1v5m0 2v10m0 4v1m0 1v1m1 -44v1m0 2v2m0 3v8m0 2v1m0 2v17m0 2v4m1 -31v14m0 1v9m0 2v3m0 1v1m1 -45v38m0 2v1m0 1v2m1 -46v10m0 2v10m0 1v17m0 2v3m0 1v1m1 -43v12m0 2v22m0 3v1m0 1v1m1 -37v18m0 1v12m0 2v2m0 1v1m1 -31v25m0 2v3m1 -27v1m0 1v1m0 1v1m0 2v6m0 1v9m0 1v3m0 1v1m1 -43v4m0 1v1m0 1v1m0 2v1m0 1v13m0 1v10m0 1v1m0 1v2m1 -43v1m0 1v2m0 1v5m0 4v25m0 2v2m0 1v1m1 -33v15m0 1v10m0 3v1m0 1v1m1 -32v11m0 2v13m0 3v3m1 -26v2m0 1v7m0 2v8m0 2v3m0 1v1m1 -35v7m0 2v4m0 1v14m0 1v4m1 -25v9m0 3v8m0 3v3m1 -44v1m0 1v1m0 1v2m0 1v6m0 1v8m0 1v2m0 1v14m0 1v1m0 1v3m1 -36v2m0 2v24m0 3v3m1 -22v1m0 2v1m0 3v10m0 1v4m1 -33v3m0 2v1m0 2v1m0 1v17m0 1v6m1 -28v22m0 1v3m0 1v1m1 -48v2m0 2v1m0 3v1m0 2v1m0 1v2m0 2v6m0 2v18m0 2v2m0 1v1m1 -35v11m0 2v14m0 3v4m1 -35v8m0 2v18m0 3v5m1 -26v19m0 1v3m0 1v1m1 -38v10m0 2v5m0 2v13m0 1v4m0 1v1m1 -35v18m0 2v9m0 1v3m0 1v1m1 -37v9m0 2v4m0 1v15m0 1v4m1 -30v2m0 1v22m0 2v1m0 1v1m1 -36v15m0 2v13m0 1v1m0 1v1m0 1v1m1 -30v5m0 1v18m0 1v1m0 1v3m1 -32v4m0 2v21m0 2v2m0 1v1m1 -20v3m0 2v8m0 1v3m0 1v1m0 1v1m1 -33v5m0 1v3m0 1v15m0 2v1m0 1v2m1 -24v8m0 1v9m0 1v2m0 1v1m0 1v1m1 -29v1m0 1v10m0 1v9m0 1v2m0 1v3m1 -43v25m0 3v8m0 1v6m1 -39v11m0 1v5m0 2v13m0 4v3m1 -33v4m0 3v2m0 2v15m0 3v4m1 -31v24m0 1v5m1 -31v1m0 3v21m0 2v5m1 -26v2m0 1v3m0 1v12m0 2v3m0 1v1m1 -30v3m0 2v18m0 1v5m1 -41v21m0 1v13m0 1v1m0 2v2m0 1v1m1 -35v1m0 2v6m0 2v2m0 1v13m0 2v2m0 1v1m1 -25v5m0 2v1m0 2v11m0 1v1m0 1v2m1 -39v23m0 2v9m0 1v1m0 1v2m1 -41v4m0 2v4m0 1v23m0 1v1m0 1v3m1 -39v34m0 1v3m0 1v1m1 -55v1m0 1v2m0 1v1m0 1v42m0 1v1m0 1v3m1 -29v11m0 2v10m0 1v1m0 1v3m1 -48v21m0 2v18m0 1v3m0 1v2m1 -32v4m0 2v4m0 1v16m0 1v5m1 -40v17m0 2v20m1 -35v28m0 3v3m0 1v1m1 -42v1m0 1v23m0 1v9m0 2v1m0 1v1m1 -42v5m0 2v15m0 1v15m0 1v2m0 1v1m1 -31v10m0 2v12m0 4v1m0 1v1m1 -39v11m0 2v3m0 1v17m0 2v2m1 -37v7m0 1v11m0 1v19m1 -33v5m0 1v9m0 2v8m0 1v1m0 1v1m0 1v2m1 -30v3m0 1v19m0 2v4m1 -23v8m0 1v9m0 2v2m0 1v1m1 -23v6m0 2v8m0 2v1m0 1v2m1 -33v32m0 1v1m1 -26v6m0 1v13m0 1v1m0 1v3m1 -22v15m0 1v6m1 -39v13m0 2v18m0 2v2m0 1v1m1 -29v3m0 1v4m0 1v2m0 2v9m0 3v1m0 1v3m1 -28v3m0 1v5m0 1v10m0 3v1m0 1v3m1 -38v31m0 1v2m0 1v1m1 -37v12m0 2v17m0 3v2m0 1v1m1 -36v17m0 1v11m0 2v3m0 1v1m1 -22v15m0 1v1m0 1v1m0 1v2m1 -28v2m0 2v17m0 1v3m0 1v1m0 1v1m1 -28v3m0 3v1m0 2v11m0 3v1m0 1v2m1 -26v2m0 1v16m0 2v3m1 -23v25m1 -39v4m0 1v3m0 1v2m0 2v3m0 1v15m0 3v1m0 1v1m0 1v1m1 -47v39m0 3v1m0 1v1m1 -46v11m0 1v7m0 2v19m0 1v1m0 1v2m0 1v1m1 -48v20m0 1v9m0 1v10m0 1v1m0 1v2m0 1v1m1 -18v1m0 1v10m0 2v1m0 1v2m1 -49v5m0 2v5m0 2v5m0 1v23m0 2v2m0 1v1m1 -48v2m0 7v2m0 1v2m0 2v25m0 3v3m1 -43v38m0 1v4m1 -51v11m0 1v15m0 1v1m0 1v16m0 2v5m1 -36v1m0 1v16m0 2v8m0 2v3m1 -24v3m0 1v19m0 1v2m1 -26v21m0 1v2m0 1v2m1 -37v2m0 2v1m0 1v1m0 1v8m0 1v13m0 2v4m1 -42v35m0 3v3m1 -54v13m0 2v19m0 2v12m0 2v5m1 -41v34m0 1v1m0 1v4m1 -46v11m0 2v13m0 2v1m0 1v9m0 1v5m1 -34v2m0 1v26m0 1v2m0 1v2m1 -49v17m0 2v7m0 1v2m0 2v17m1 -48v42m0 2v4m1 -63v1m0 1v1m0 2v3m0 3v1m0 1v44m0 1v6m1 -31v13m0 1v10m0 2v2m0 1v1m1 -43v10m0 1v25m0 2v1m0 1v2m1 -27v5m0 1v2m0 1v13m0 2v4m1 -26v20m0 2v3m1 -43v7m0 1v17m0 1v11m0 1v1m0 2v2m1 -17v2m0 1v8m0 1v6m1 -36v29m0 3v1m0 1v1m1 -26v20m0 2v5m1 -29v2m0 1v1m0 1v17m0 2v2m0 1v1m1 -40v8m0 1v16m0 1v8m0 1v1m0 1v2m0 1v2m1 -42v4m0 2v10m0 2v16m0 1v1m0 1v1m0 1v1m1 -38v15m0 1v18m0 1v5m1 -35v1m0 1v26m0 2v1m0 1v1m1 -39v5m0 2v13m0 2v11m0 3v2m0 1v1m1 -37v30m0 2v2m0 1v1m1 -41v35m0 3v2m0 1v1m1 -36v35m1 -39v7m0 1v9m0 2v14m0 3v1m0 1v2m1 -42v8m0 1v27m0 1v5m1 -42v9m0 2v1m0 3v21m0 1v5m1 -36v1m0 1v17m0 1v10m0 1v5m1 -43v23m0 2v11m0 2v5m1 -35v2m0 2v24m0 3v2m1 -32v4m0 2v5m0 1v15m0 3v1m0 1v1m1 -36v31m0 1v2m0 1v1m1 -38v16m0 1v15m0 1v4m0 1v1m1 -44v7m0 2v12m0 1v15m0 1v1m0 1v4m1 -25v6m0 2v14m0 1v1m1 -31v25m0 4v2m1 -43v4m0 1v9m0 1v23m0 2v1m0 1v2m1 -46v1m0 2v12m0 3v22m0 1v3m0 1v1m1 -43v15m0 2v3m0 1v15m0 1v1m0 2v3m1 -39v8m0 3v21m0 1v4m1 -36v31m0 2v5m1 -32v8m0 1v5m0 2v9m0 1v1m0 1v3m1 -34v8m0 2v18m0 1v1m0 1v3m1 -36v4m0 2v11m0 2v11m0 1v6m1 -45v2m0 1v1m0 1v33m0 3v1m0 1v3m1 -27v4m0 3v2m0 1v16m1 -35v15m0 1v12m0 1v1m0 2v1m0 1v1m1 -41v3m0 1v30m0 4v2m0 1v1m1 -33v9m0 1v6m0 1v8m0 1v1m0 1v1m0 1v1m0 1v1m1 -40v33m0 2v4m1 -35v15m0 2v1m0 2v8m0 2v4m1 -39v10m0 1v3m0 1v19m0 1v6m1 -30v23m0 1v2m0 1v2m1 -40v35m0 1v4m1 -23v4m0 2v12m0 2v4m1 -29v9m0 3v11m0 2v2m0 1v1m1 -27v6m0 2v12m0 2v2m0 1v2m1 -37v19m0 2v11m0 1v4m1 -38v32m0 2v1m0 1v1m1 -35v29m0 2v5m1 -35v1m0 2v26m0 2v1m0 1v1m1 -47v1m0 1v3m0 3v33m0 3v2m0 1v1m1 -27v4m0 2v15m0 2v1m0 1v3m1 -50v2m0 1v1m0 1v1m0 1v1m0 1v8m0 1v9m0 2v18m0 1v1m1 -40v33m0 1v4m0 1v1m1 -43v36m0 2v3m0 1v2m1 -63v2m0 2v2m0 1v1m0 1v1m0 1v2m0 2v1m0 1v27m0 1v11m0 2v4m1 -42v4m0 2v13m0 2v14m0 3v1m0 1v1m1 -37v31m0 3v4m1 -22v1m0 2v13m0 3v1m0 1v1m1 -26v2m0 2v1m0 1v14m0 1v1m0 1v4m1 -29v21m0 4v1m0 1v1m1 -31v3m0 1v25m0 1v2m1 -32v1m0 2v22m0 1v2m0 1v3m1 -32v8m0 1v16m0 2v1m0 1v2m1 -34v13m0 2v3m0 1v8m0 2v6m1 -42v4m0 2v15m0 1v12m0 3v5m1 -24v1m0 2v13m0 1v1m0 1v1m0 1v1m1 -36v32m0 1v3m0 1v1m1 -21v13m0 1v1m0 2v2m1 -33v10m0 1v4m0 2v10m0 2v6m1 -34v26m0 3v3m1 -22v3m0 2v17m0 1v1m1 -34v9m0 3v5m0 2v14m1 -31v3m0 1v4m0 2v14m0 3v1m0 1v3m1 -41v1m0 1v3m0 1v1m0 1v25m0 2v1m0 1v3m1 -30v5m0 2v2m0 1v14m0 2v4m1 -23v2m0 1v1m0 3v11m0 1v3m0 1v1m1 -28v21m0 2v2m0 1v1m1 -37v3m0 1v26m0 1v1m0 1v1m0 1v2m1 -23v5m0 2v10m0 1v3m0 1v1m1 -29v7m0 2v14m0 2v4m1 -52v1m0 1v1m0 1v1m0 2v2m0 2v1m0 1v2m0 1v8m0 1v3m0 2v16m0 2v3m0 1v1m1 -34v17m0 2v9m0 1v5m1 -32v6m0 1v4m0 1v12m0 2v4m1 -37v12m0 1v9m0 1v8m0 2v3m0 1v1m1 -21v2m0 2v10m0 3v2m0 1v1m1 -29v7m0 1v15m0 1v1m0 1v4m1 -38v7m0 3v9m0 1v10m0 3v4m1 -53v1m0 1v3m0 2v2m0 1v2m0 2v32m0 3v1m0 1v3m1 -37v8m0 2v21m0 1v3m1 -24v4m0 1v13m0 4v3m1 -39v33m0 3v4m1 -46v29m0 2v7m0 1v6m1 -42v1m0 2v2m0 1v1m0 1v2m0 2v13m0 1v9m0 1v1m0 1v3m1 -48v4m0 1v4m0 1v18m0 1v13m0 1v1m0 1v2m0 1v2m1 -50v2m0 1v9m0 1v30m0 2v1m0 1v1m1 -32v9m0 1v2m0 2v12m0 1v1m0 1v4m1 -56v2m0 1v18m0 2v13m0 3v10m0 3v1m0 1v1m1 -43v3m0 1v4m0 1v29m0 2v1m0 1v2m1 -22v15m0 1v1m0 2v1m0 1v1m1 -43v10m0 2v24m0 1v4m0 1v2m1 -33v7m0 1v19m0 2v1m0 1v1m1 -29v23m0 2v4m1 -44v7m0 1v3m0 1v26m0 1v3m0 1v2m1 -44v18m0 1v19m0 1v4m1 -37v30m0 1v6m1 -44v2m0 2v1m0 1v1m0 1v1m0 3v1m0 1v7m0 1v3m0 4v8m0 3v2m0 1v1m1 -28v4m0 2v6m0 2v7m0 1v1m0 1v2m0 1v1m1 -37v12m0 2v17m0 2v1m0 1v2m1 -31v4m0 1v1m0 1v18m0 1v2m0 2v2m1 -42v14m0 1v19m0 1v5m1 -19v1m0 2v10m0 3v1m0 1v2m1 -48v1m0 2v38m0 1v1m0 1v3m1 -31v3m0 2v21m0 2v1m0 1v1m1 -39v7m0 2v25m0 1v4m0 1v1m1 -38v10m0 2v21m0 1v2m1 -25v1m0 2v16m0 3v3m1 -27v21m0 1v7m1 -34v8m0 2v16m0 2v4m1 -45v1m0 2v1m0 1v37m0 1v3m1 -20v1m0 2v13m0 1v3m1 -52v2m0 2v8m0 1v23m0 1v8m0 3v1m0 1v1m1 -46v1m0 2v1m0 1v1m0 1v3m0 3v28m0 1v5m1 -42v36m0 1v2m0 1v1m1 -32v4m0 1v6m0 1v5m0 1v9m0 2v1m0 1v1m1 -29v7m0 2v14m0 2v2m0 1v1m0 1v1m1 -48v1m0 1v1m0 3v19m0 2v13m0 4v3m1 -38v11m0 2v18m0 2v3m0 1v2m1 -34v14m0 1v11m0 2v5m1 -48v2m0 2v1m0 1v16m0 2v17m0 3v2m0 1v1m1 -29v7m0 2v4m0 1v8m0 3v1m0 1v2m1 -22v15m0 1v1m0 1v2m0 1v1m1 -37v30m0 2v5m1 -34v1m0 1v1m0 1v2m0 3v4m0 1v3m0 1v9m0 1v1m0 1v4m1 -29v1m0 2v8m0 1v10m0 3v1m0 1v2m1 -30v7m0 2v1m0 1v13m0 2v2m0 1v2m1 -40v32m0 1v2m0 1v2m1 -30v1m0 2v22m0 1v1m0 1v4m1 -30v8m0 1v14m0 1v2m0 1v1m1 -38v7m0 1v6m0 1v7m0 1v10m0 2v2m0 1v1m1 -38v2m0 1v4m0 1v1m0 1v5m0 2v4m0 2v8m0 1v1m0 1v2m1 -37v34m0 1v1m0 1v1m1 -34v11m0 3v1m0 1v13m0 1v2m0 1v1m1 -35v29m0 1v1m0 1v3m1 -23v17m0 3v3m1 -29v1m0 1v1m0 3v5m0 4v10m0 1v1m0 1v2m1 -29v24m0 1v4m1 -42v17m0 2v1m0 2v14m0 1v1m0 1v3m1 -62v1m0 1v1m0 1v1m0 2v5m0 1v3m0 1v1m0 2v1m0 1v33m0 1v1m0 1v1m0 1v2m1 -43v19m0 2v15m0 1v1m0 1v2m0 1v1m1 -36v29m0 1v3m0 1v1m1 -62v2m0 1v2m0 1v5m0 3v1m0 1v16m0 2v10m0 2v11m0 2v2m0 1v1m1 -45v9m0 2v8m0 1v18m0 1v1m0 1v3m1 -51v14m0 2v31m0 2v4m1 -49v3m0 2v18m0 1v25m1 -51v16m0 1v10m0 2v16m0 1v2m0 1v1m1 -45v21m0 1v7m0 1v8m0 3v1m0 1v2m1 -57v1m0 1v1m0 1v46m0 4v1m0 1v1m1 -35v2m0 1v3m0 2v7m0 2v11m0 1v1m0 1v1m0 1v1m1 -38v21m0 1v10m0 1v1m0 1v1m0 1v1m1 -39v33m0 3v1m0 1v1m1 -22v2m0 1v2m0 3v8m0 2v4m1 -44v5m0 3v30m0 1v1m0 1v2m1 -34v4m0 1v24m0 3v3m1 -37v2m0 2v29m0 1v1m0 1v1m1 -35v29m0 3v4m1 -49v2m0 1v13m0 1v25m0 1v5m1 -46v1m0 1v1m0 2v4m0 2v29m0 1v1m0 1v3m1 -27v3m0 2v1m0 1v2m0 1v11m0 3v4m1 -35v4m0 1v1m0 1v24m0 1v2m1 -42v9m0 2v15m0 1v12m0 1v1m0 1v1m1 -25v6m0 1v11m0 1v1m0 1v3m1 -39v1m0 2v31m0 2v1m0 1v3m1 -48v9m0 1v8m0 1v21m0 2v4m1 -47v2m0 1v2m0 1v35m0 3v3m1 -45v25m0 1v13m0 1v1m0 1v3m1 -41v24m0 3v8m0 3v2m0 1v1m1 -39v3m0 1v5m0 3v21m0 1v2m0 1v1m1 -30v14m0 1v10m0 2v3m1 -48v26m0 1v2m0 1v13m0 1v2m0 1v1m1 -49v3m0 1v24m0 3v19m1 -44v41m0 1v2m1 -36v29m0 1v1m0 1v1m0 1v1m1 -47v16m0 2v6m0 2v4m0 1v10m0 2v3m1 -35v9m0 2v2m0 2v5m0 1v11m0 1v4m1 -35v2m0 1v25m0 1v1m0 1v3m1 -29v5m0 1v2m0 2v13m0 1v5m1 -39v8m0 2v23m0 1v1m0 1v4m1 -41v3m0 1v2m0 2v11m0 2v13m0 3v1m0 1v1m1 -46v1m0 2v1m0 2v4m0 2v7m0 1v20m0 2v1m0 1v3m1 -52v1m0 1v1m0 1v1m0 1v23m0 2v14m0 3v1m0 1v2m1 -57v3m0 1v1m0 3v2m0 2v2m0 3v2m0 1v2m0 1v11m0 1v15m0 4v2m1 -41v36m0 2v2m0 1v1m1 -36v12m0 4v14m0 1v4m1 -42v19m0 1v4m0 1v11m0 1v1m0 1v4m1 -20v13m0 2v5m1 -49v42m0 3v1m0 1v1m1 -37v4m0 1v2m0 2v4m0 2v17m0 1v4m1 -34v34m1 -23v1m0 2v18m0 1v1m1 -48v7m0 2v4m0 2v26m0 1v4m0 1v2m1 -25v18m0 2v2m0 1v1m1 -36v30m0 3v4m1 -54v7m0 2v26m0 1v10m0 2v2m0 1v1m0 1v1m1 -44v8m0 2v26m0 2v4m1 -53v7m0 2v7m0 1v6m0 2v23m0 2v3m0 1v1m1 -35v1m0 2v24m0 3v1m0 1v3m1 -44v6m0 2v2m0 1v6m0 2v18m0 1v2m0 1v3m1 -51v43m0 1v1m0 2v2m1 -39v7m0 1v3m0 2v20m0 3v3m0 1v1m1 -48v9m0 1v30m0 2v5" stroke="#2ca02c" stroke-width="1" fill="none"/><path d="M909.5 557v12m1 -9v13m1 -15v7m0 1v6m1 -15v15m1 -13v13m1 -16v17m1 -14v11m1 -13v3m0 1v13m1 -11v11m1 -13v12m1 -16v8m0 1v9m1 -20v20m1 -13v12m1 -19v3m0 2v13m1 -18v18m1 -18v1m0 3v12m1 -10v12m1 -17v17m1 -15v16m1 -14v14m1 -13v13m1 -20v2m0 2v7m1 -10v13m1 -13v18m1 -13v15m1 -18v9m0 1v7m1 -18v15m1 -15v15m1 -12v16m1 -19v16m1 -14v16m1 -17v16m1 -15v4m0 1v10m1 -14v12m0 1v3m1 -17v14m1 -16v17m1 -12v3m0 1v9m1 -13v14m1 -21v18m1 -16v6m0 1v5m0 2v5m1 -17v16m1 -18v15m1 -15v12m0 3v3m1 -14v13m1 -26v19m1 -16v14m1 -19v3m0 3v13m1 -14v5m0 1v9m1 -14v11m1 -16v19m1 -15v15m1 -19v18m1 -17v17m1 -19v8m0 2v5m1 -15v14m1 -15v8m0 2v10m1 -17v3m0 5v8m1 -18v16m1 -12v14m1 -17v18m1 -9v10m1 -16v14m0 2v1m1 -21v14m1 -13v7m0 1v9m1 -17v17m1 -19v19m1 -15v14m1 -13v14m1 -16v7m0 1v8m1 -11v10m1 -19v8m0 2v5m1 -12v18m1 -13v12m1 -19v19m1 -9v7m0 1v1m1 -13v14m1 -21v6m0 2v10m1 -14v5m0 2v9m1 -17v4m0 2v5m1 -6v10m1 -15v18m1 -19v18m1 -14v4m0 1v8m1 -15v4m0 1v11m1 -18v1m0 3v15m1 -19v6m0 1v11m1 -19v19m1 -19v19m1 -19v17m1 -15v16m1 -13v12m0 1v1m1 -14v14m1 -17v16m1 -16v18m1 -15v7m0 3v4m1 -15v15m1 -14v13m0 2v1m1 -20v5m0 4v9m1 -15v15m1 -17v9m0 2v6m1 -17v9m0 2v6m1 -12v11m1 -16v18m1 -19v19m1 -18v19m1 -13v13m1 -16v17m1 -15v12m1 -7v9m1 -13v15m1 -11v7m1 -15v13m1 -12v7m0 3v8m1 -17v13m0 5v1m1 -18v15m1 -17v18m1 -13v12m1 -13v15m1 -18v17m1 -19v17m1 -9v13m1 -16v16m1 -19v15m1 -12v10m1 -12v11m1 -7v12m1 -11v12m1 -19v14m1 -11v15m1 -17v17m1 -17v2m0 2v14m1 -12v11m1 -17v13m1 -13v19m1 -17v16m1 -14v13m1 -13v12m1 -12v8m1 -11v16m1 -18v16m1 -17v7m0 4v8m1 -19v4m0 1v13m0 4v1m1 -22v17m1 -19v16m1 -12v14m1 -12v14m1 -16v3m0 1v10m1 -17v17m1 -18v18m1 -17v18m1 -11v12m1 -19v7m0 3v9m1 -15v10m0 2v2m1 -17v4m0 2v8m1 -14v16m1 -15v13m1 -16v5m0 4v10m1 -14v13m1 -15v12m1 -12v17m1 -17v16m1 -18v16m1 -10v12m1 -15v14m1 -17v9m0 4v3m0 3v1m1 -20v14m1 -14v17m1 -16v17m1 -18v14m1 -13v17m1 -16v15m1 -19v16m1 -16v20m1 -16v16m1 -18v15m1 -12v11m1 -14v7m0 1v6m1 -14v15m0 1v1m1 -16v16m1 -11v9m1 -16v18m1 -11v9m1 -13v14m1 -12v13m1 -18v19m1 -16v16m1 -12v12m1 -16v13m1 -15v16m1 -14v15m1 -12v12m1 -20v21m1 -14v13m1 -14v14m1 -14v14m1 -11v11m1 -19v4m0 1v10m1 -13v16m1 -14v15m1 -15v13m1 -15v16m1 -13v14m1 -17v17m1 -19v20m1 -20v3m0 1v15m1 -13v14m1 -13v11m1 -16v5m0 1v11m1 -20v8m0 2v11m1 -16v16m1 -19v17m1 -16v5m0 3v9m1 -10v9m0 1v1m1 -12v9m1 -13v15m1 -16v9m0 4v3m1 -19v5m0 3v10m1 -13v15m1 -14v10m1 -10v11m1 -9v12m1 -13v13m1 -18v18m1 -14v13m1 -15v11m1 -12v16m1 -15v13m1 -15v15m1 -17v20m1 -17v17m1 -18v16m0 1v2m1 -19v17m1 -14v14m1 -17v7m0 1v10m1 -18v18m1 -18v15m1 -12v12m1 -16v18m1 -16v9m0 2v5m1 -18v19m1 -13v4m0 1v8m1 -12v13m1 -12v9m1 -15v12m0 2v3m1 -15v12m1 -14v10m0 1v5m1 -16v12m0 5v1m1 -13v12m1 -17v12m0 1v3m1 -18v16m1 -14v16m1 -12v13m1 -16v15m1 -18v11m0 6v1m1 -14v13m1 -17v19m1 -20v2m0 2v7m0 4v3m1 -16v12m1 -13v8m0 1v8m1 -14v15m1 -20v17m1 -14v12m1 -14v3m0 2v13m1 -15v16m1 -19v18m1 -14v13m1 -12v14m1 -17v16m1 -18v3m0 1v14m1 -16v16m1 -18v17m1 -12v14m1 -19v19m1 -19v18m1 -12v12m1 -20v21m1 -15v12m1 -16v5m0 4v10m0 2v1m1 -20v4m0 2v11m1 -17v17m1 -16v15m1 -14v14m1 -15v16m1 -17v4m0 1v12m1 -15v13m1 -12v10m1 -10v13m1 -17v17m1 -17v10m0 1v8m1 -17v5m0 2v5m1 -13v18m1 -20v16m1 -17v19m1 -15v14m1 -17v12m0 1v5m1 -12v13m1 -19v17m1 -17v1m0 3v11m0 1v2m1 -13v12m1 -17v10m0 3v4m1 -14v4m0 2v10m1 -21v19m1 -15v13m1 -16v17m1 -8v9m1 -16v16m1 -19v6m0 2v10m1 -15v12m1 -14v17m1 -18v8m0 1v11m1 -17v15m1 -17v6m0 1v7m0 2v2m1 -14v12m1 -17v18m1 -16v17m1 -13v12m1 -17v16m1 -11v8m0 2v4m1 -18v19m1 -15v11m1 -11v11m1 -10v13m1 -14v12m0 1v1m1 -17v14m1 -12v14m1 -15v5m0 1v8m1 -16v20m1 -14v12m1 -16v18m1 -19v10m0 3v5m1 -16v4m0 1v12m1 -14v6m0 2v6m1 -18v18m1 -14v12m1 -17v17m1 -16v12m1 -13v17m1 -18v19m1 -18v17m1 -16v5m0 1v9m1 -15v13m1 -12v13m1 -12v12m1 -19v5m0 3v11m1 -16v16m1 -15v10m1 -12v6m0 2v6m0 3v1m1 -16v14m0 2v1m1 -16v4m0 3v6m0 3v1m1 -15v12m1 -18v17m1 -18v19m1 -16v15m1 -15v16m1 -18v12m0 3v3m1 -17v16m1 -17v18m1 -13v12m1 -17v16m1 -17v11m0 3v5m1 -14v16m1 -14v14m1 -18v10m0 1v6m1 -18v18m1 -18v19m1 -14v15m1 -17v17m1 -17v16m1 -18v17m1 -14v14m1 -14v16m1 -19v9m0 1v9m1 -19v12m0 4v3m1 -19v19m1 -18v1m0 5v12m1 -20v20m1 -13v12m1 -16v14m0 1v3m1 -18v16m1 -15v11m1 -15v18m0 1v1m1 -17v16m1 -11v11m1 -18v16m1 -11v13m1 -18v3m0 1v7m1 -12v17m1 -15v3m0 3v11m1 -19v18m1 -15v12m1 -16v17m1 -17v18m1 -18v18m1 -16v16m1 -16v15m1 -13v8m0 2v5m1 -17v10m0 1v4m1 -14v15m1 -19v15m1 -9v6m0 1v4m0 1v1m1 -20v19m0 6v1m1 -20v15m1 -18v16m1 -14v12m1 -11v16m1 -19v17m1 -13v12m1 -16v17m1 -17v15m1 -14v16m1 -16v15m1 -14v15m1 -16v18m1 -15v9m0 4v2m1 -17v16m1 -10v9m1 -12v15m1 -19v8m0 3v7m1 -13v13m1 -13v14m1 -16v12m0 1v3m1 -17v12m1 -15v19m1 -16v7m0 2v7m1 -14v12m1 -15v17m1 -20v15m1 -14v6m0 1v11m1 -14v14m1 -18v18m1 -13v14m1 -20v19m1 -14v12m1 -15v17m1 -17v12m1 -11v15m1 -13v10m1 -14v16m1 -11v13m1 -15v12m1 -15v12m0 3v3m1 -19v18m1 -16v16m1 -15v11m1 -8v11m1 -13v15m1 -17v3m0 1v3m0 2v7m1 -19v6m0 3v11m1 -11v9m1 -11v10m0 2v1m1 -14v14m1 -17v18m1 -19v18m1 -19v18m1 -12v13m1 -16v12m1 -12v17m1 -21v13m0 3v4m1 -13v9m1 -8v12m1 -14v12m1 -15v12m1 -7v12m1 -17v8m0 8v1m1 -15v15m1 -17v15m1 -16v4m0 3v11m1 -18v18m1 -13v13m1 -12v12m1 -14v15m1 -17v12m1 -10v16m1 -18v6m0 1v9m1 -9v11m1 -19v14m1 -8v11m1 -15v3m0 4v11m1 -20v19m1 -17v15m1 -18v19m1 -9v11m1 -17v15m1 -17v13m1 -15v14m0 2v3m1 -13v14m1 -14v12m0 2v1m1 -19v18m1 -19v18m1 -18v19m1 -20v12m0 3v5m1 -21v6m0 3v11m1 -18v18m1 -19v1m0 2v15m1 -18v19m1 -14v12m1 -18v4m0 2v12m1 -17v17m1 -18v9m1 -7v3m0 1v9m1 -7v9m1 -16v14m1 -15v14m1 -11v7m0 1v8m1 -14v12m1 -13v14m1 -17v16m1 -17v3m0 1v14m1 -14v13m0 4v1m1 -21v14m1 -18v18m1 -15v1m0 1v13m1 -14v11m1 -8v14m1 -17v16m1 -17v16m1 -17v19m1 -15v15m1 -14v13m1 -14v13m1 -16v17m1 -14v14m1 -19v4m0 1v10m1 -14v17m1 -13v11m0 3v1m1 -9v8m1 -17v8m0 2v5m1 -13v16m1 -19v8m0 1v10m1 -19v18m1 -17v16m1 -16v17m1 -17v18m1 -13v8m1 -12v17m1 -16v17m1 -14v11m1 -12v16m1 -16v14m1 -12v13m1 -20v2m0 4v14m1 -17v15m1 -11v13m1 -9v9m1 -14v16m1 -16v15m1 -12v12m1 -16v13m0 4v1m1 -18v15m1 -15v17m1 -16v16m1 -12v12m1 -20v10m0 1v9m1 -17v16m1 -17v15m1 -12v15m1 -18v9m1 -9v5m0 2v10m1 -9v9m1 -20v21m1 -16v15m1 -15v16m1 -14v13m1 -17v11m1 -13v9m0 3v3m1 -14v17m1 -17v12m0 2v3m1 -18v18m1 -17v18m1 -18v13m1 -8v9m0 2v2m1 -14v13m1 -14v14m1 -11v12m1 -13v12m1 -14v10m0 2v3m1 -19v6m0 3v9m1 -15v16m1 -19v1m0 1v8m0 1v6m1 -12v14m1 -21v5m0 2v7m0 3v2m1 -15v15m1 -16v17m1 -17v14m1 -15v2m0 3v12m1 -18v15m1 -16v18m1 -9v10m1 -16v16m1 -13v12m1 -18v18m1 -18v18m1 -19v8m0 3v9m1 -19v17m1 -16v17m1 -15v16m1 -14v15m1 -13v11m1 -18v11m0 7v1m1 -16v16m1 -12v12m1 -17v16m1 -16v14m1 -12v15m1 -13v10m0 5v1m1 -15v14m1 -18v18m1 -15v15m1 -12v13m1 -17v17m1 -11v3m0 1v7m1 -19v16m1 -6v9m0 4v1m1 -21v16m1 -15v13m1 -14v17m1 -17v17m1 -12v12m1 -17v14m1 -15v12m1 -9v15m1 -19v8m0 1v9m1 -14v14m1 -15v14m1 -15v3m0 1v10m1 -12v14m1 -19v19m1 -18v6m0 1v10m1 -15v10m1 -11v13m1 -11v15m1 -19v14m1 -7v12m1 -18v17m1 -17v16m1 -16v10m0 3v5m1 -13v13m1 -13v13m1 -18v6m0 1v12m1 -17v11m1 -11v15m1 -17v18m1 -18v19m1 -15v13m1 -13v15m1 -21v20m1 -19v18m1 -18v18m1 -18v6m0 2v7m0 4v1m1 -20v19m1 -20v15m0 1v3m1 -16v14m1 -16v16m1 -16v12m0 3v2m1 -15v3m0 1v11m1 -11v10m1 -18v18m1 -18v7m0 1v6m1 -10v15m1 -16v12m1 -15v18m1 -18v18m1 -15v14m1 -12v14m1 -14v9m1 -13v17m1 -15v16m1 -16v17m1 -21v19m1 -18v17m1 -15v17m1 -18v16m1 -11v12m1 -10v11m1 -15v16m1 -13v12m1 -19v9m1 -7v1m0 3v8m0 2v4m1 -18v5m0 2v11m1 -20v3m0 3v12m1 -17v10m0 1v9m1 -21v21m1 -14v10m1 -17v14m1 -12v16m1 -11v12m0 3v1m1 -21v18m1 -17v16m1 -14v16m1 -17v14m1 -11v14m1 -21v20m1 -18v2m0 6v10m1 -15v16m1 -18v10m1 -11v17m1 -18v14m1 -13v17m1 -16v6m0 2v9m1 -19v14m1 -5v11m1 -19v5m0 3v10m1 -17v3m0 2v7m1 -9v14m1 -15v12m0 3v1m1 -14v13m1 -15v14m1 -12v9m1 -11v6m0 3v6m1 -15v15m1 -18v17m1 -18v18m1 -16v17m1 -16v4m0 3v9m1 -15v14m1 -17v17m1 -17v15m1 -13v14m1 -11v10m1 -14v13m1 -16v4m0 1v10m1 -12v17m1 -16v17m1 -16v15m1 -15v4m0 1v8m1 -16v5m0 2v11m1 -12v12m1 -18v16m1 -12v11m1 -13v15m1 -16v16m1 -13v15m1 -18v17m1 -19v19m1 -18v3m0 1v15m1 -19v15m0 1v3m0 1v1m1 -21v19m1 -19v17m1 -11v11m1 -14v16m1 -16v14m1 -14v11m0 1v4m1 -17v14m0 2v1m1 -14v12m1 -14v16m1 -19v10m0 2v7m1 -18v18m1 -14v14m1 -18v9m0 2v6m1 -17v18m1 -18v19m1 -12v8m1 -7v11m1 -17v15m1 -14v15m1 -18v6m0 1v10m1 -18v18m1 -12v13m1 -16v12m0 3v1m1 -16v13m1 -14v16m1 -19v18m1 -18v20m1 -18v17m1 -15v13m1 -16v14m1 -16v20m1 -18v13m1 -12v14m1 -11v12m1 -18v18m1 -18v18m1 -17v18m1 -15v14m1 -13v13m1 -14v5m0 2v8m1 -10v6m0 2v1m1 -19v20m1 -16v16m1 -18v18m1 -20v17m1 -11v14m1 -15v15m1 -11v8m1 -12v16m1 -18v14m1 -6v10m0 1v1m1 -18v17m1 -16v9" stroke="#d62728" stroke-width="1" fill="none"/><path d="M908.5 45V648 M908 647.5H1698" stroke="#9a9a9a" stroke-width="1"/><rect x="899" y="45" width="2" height="5" fill="#e8e8e8"/></svg><div class="lbl" style="left:804px;width:100px;text-align:right;top:629.5px">0</div><div class="lbl" style="left:804px;width:100px;text-align:right;top:511.5px">0.2</div><div class="lbl" style="left:804px;width:100px;text-align:right;top:393.5px">0.4</div><div class="lbl" style="left:804px;width:100px;text-align:right;top:275.5px">0.6</div><div class="lbl" style="left:804px;width:100px;text-align:right;top:157.5px">0.8</div><div class="lbl" style="left:822px;width:100px;top:340.0px;text-align:center;font-size:13.9px;transform:rotate(-90deg)">counts</div><div class="abs" style="left:908px;top:648px;width:789px;height:24px;overflow:hidden"><div class="lbl" style="left:77.5px;width:60px;text-align:center;top:6px">-6d</div><div class="lbl" style="left:191.5px;width:60px;text-align:center;top:6px">-5d</div><div class="lbl" style="left:304.5px;width:60px;text-align:center;top:6px">-4d</div><div class="lbl" style="left:418.5px;width:60px;text-align:center;top:6px">-3d</div><div class="lbl" style="left:531.5px;width:60px;text-align:center;top:6px">-2d</div><div class="lbl" style="left:645.5px;width:60px;text-align:center;top:6px">-1d</div><div class="lbl" style="left:759.5px;width:60px;text-align:center;top:6px">0</div></div><div class="legend" style="left:918px;top:55px;width:343px;height:63px"></div><div class="sw" style="left:927px;top:64px;background:#2ca02c"></div><div class="lt" style="left:952px;top:67.8px">H0:VAC-MR_FAN2_170_1_ACC_INCHSEC [m-trend]</div><div class="sw" style="left:927px;top:89px;background:#d62728"></div><div class="lt" style="left:952px;top:92.8px">H0:VAC-MR_FAN2_170_2_ACC_INCHSEC [m-trend]</div><svg class="abs" style="left:0;top:0;overflow:visible" width="2560" height="1413" shape-rendering="crispEdges"><path d="M1751 576.5H2539M1751 517.5H2539M1751 458.5H2539M1751 399.5H2539M1751 340.5H2539M1751 281.5H2539M1751 222.5H2539M1751 163.5H2539M1751 104.5H2539" stroke="#0e0e0e" stroke-width="1"/><path d="M1751 635.5H2539 M1750 45.5H2539 M2539.5 45V647" stroke="#1e1e1e" stroke-width="1"/><path d="M1857.5 45V647M2084.5 45V647M2311.5 45V647" stroke="#1d1d1d" stroke-width="1"/><path d="M1971.5 45V647M2198.5 45V647M2425.5 45V647" stroke="#111111" stroke-width="1"/><path d="M1751.5 532v2m1 -1v2m1 -4v2m1 0v2m1 -4v1m0 1v2m1 -4v3m1 -2v2m1 -2v1m0 1v1m1 -3v3m1 -2v3m1 -5v1m0 1v2m1 -3v3m1 -4v3m1 -1v2m1 -3v2m1 -2v2m1 -3v1m0 1v1m1 -2v4m1 -3v1m1 -3v2m0 1v1m1 -3v2m1 -3v3m1 -1v2m1 -3v1m0 1v1m1 -2v2m1 -3v4m1 -5v4m1 -3v2m1 -4v6m1 -4v2m1 -2v3m1 -3v3m1 -3v4m1 -3v1m1 -1v2m1 -2v2m1 -3v2m1 -2v2m1 -2v2m1 -2v3m1 -3v2m1 -2v3m1 -2v1m1 -2v2m1 -2v3m1 -1v1m1 -3v2m1 -2v3m1 -2v2m1 -4v3m1 -2v3m1 -3v1m1 -2v2m1 -2v5m1 -5v4m1 -2v3m1 -4v2m1 -3v3m1 -1v3m1 -5v3m1 -2v4m1 -4v2m1 -2v2m1 -2v1m0 1v1m1 -2v2m1 -3v3m1 -5v3m0 1v1m1 -4v4m1 -4v3m1 -2v2m1 -3v3m1 -1v2m1 -2v1m1 -1v1m1 -2v3m1 -2v2m1 -3v3m1 -3v2m1 -3v5m1 -3v1m1 -2v4m1 -3v2m1 -4v4m1 -3v1m0 1v2m1 -4v3m1 -3v1m0 2v1m1 -4v2m1 -1v2m1 -3v2m1 -1v3m1 -5v5m1 -3v2m1 -5v7m1 -4v3m1 -3v2m1 -2v2m1 -3v2m1 -2v3m1 -2v2m1 -4v3m1 -1v2m1 -3v3m1 -3v3m1 -4v4m1 -4v4m1 -2v3m1 -4v2m1 -2v1m1 -1v2m1 -1v2m1 -4v4m1 -2v1m1 -3v3m1 -1v2m1 -3v3m1 -3v3m1 -1v2m1 -3v1m1 -2v2m1 -2v1m1 -2v5m1 -5v5m1 -3v2m1 -2v2m1 -2v2m1 -4v3m1 -2v3m1 -3v2m1 -1v1m1 -2v3m1 -1v1m1 -3v3m1 -2v2m1 -5v5m1 -4v4m1 -1v2m1 -3v1m1 -2v2m1 -2v2m1 -2v3m1 -2v2m1 -3v2m1 -2v2m1 -1v3m1 -4v3m1 -3v4m1 -3v2m1 -2v2m1 -2v2m1 -4v4m1 -3v3m1 -3v4m1 -5v5m1 -3v2m1 -2v1m1 -1v2m1 -3v2m1 -1v2m1 -3v3m1 -3v4m1 -3v2m1 -4v2m0 1v2m1 -3v3m1 -4v2m1 -1v2m1 -3v3m1 -3v3m1 -2v3m1 -4v3m1 -3v4m1 -3v3m1 -4v2m1 -1v1m0 1v1m1 -3v2m1 -3v3m1 -2v1m1 -3v3m1 -2v3m1 -3v3m1 -2v3m1 -5v4m1 -2v3m1 -2v2m1 -3v2m1 -1v2m1 -3v2m1 -3v2m1 -2v3m1 -3v3m1 -3v2m1 -1v3m1 -3v3m1 -3v1m1 -2v2m1 -2v5m1 -5v2m1 -1v1m1 -1v3m1 -4v1m0 1v1m1 -3v2m1 -1v1m1 -1v1m1 -1v2m1 -3v3m1 -1v2m1 -2v2m1 -3v2m1 -3v3m1 -1v1m1 -1v1m1 -2v2m1 -5v4m1 -1v2m1 -1v1m1 -3v2m1 -1v2m1 -2v2m1 -2v4m1 -4v3m1 -4v2m1 -1v2m1 -2v3m1 -4v3m1 -2v2m1 -2v2m1 -3v3m1 -3v3m1 -2v2m1 -2v3m1 -3v2m1 -2v1m1 -3v5m1 -2v2m1 -3v4m1 -5v3m1 -4v5m1 -3v1m1 -1v2m1 -2v2m1 -2v2m1 -2v2m1 -3v5m1 -4v2m1 -2v3m1 -5v4m1 -3v2m1 -1v1m1 -2v3m1 -2v1m1 -1v2m1 -2v2m1 -3v3m1 -2v2m1 -2v2m1 -2v3m1 -4v3m1 -2v1m1 0v1m1 -2v2m1 -1v2m1 -4v3m1 -2v2m1 -2v2m1 -2v3m1 -4v4m1 -4v4m1 -4v3m1 -2v2m1 -2v1m0 1v2m1 -3v3m1 -5v4m1 -2v2m1 -3v2m1 -2v1m1 -2v4m1 -3v2m1 -2v1m1 -1v2m1 -3v4m1 -4v4m1 -3v2m1 -3v3m1 -4v4m1 -2v3m1 -3v1m1 0v1m1 -3v3m1 -3v3m1 -2v2m1 -1v3m1 -5v3m1 -2v2m1 -2v2m1 -3v2m0 1v1m1 -4v3m1 -2v2m1 -3v4m1 -4v5m1 -5v3m1 -3v3m1 -2v2m1 -2v2m1 -2v3m1 -6v6m1 -3v1m0 1v1m1 -2v2m1 -3v3m1 -4v3m1 -4v4m1 -2v2m1 -3v2m1 -3v4m1 -1v2m1 -2v2m1 -3v1m0 1v1m1 -3v1m1 0v1m1 -3v3m1 -2v1m1 -2v4m1 -3v1m0 1v1m1 -3v3m1 -3v2m1 -2v2m1 -3v4m1 -4v2m1 -1v1m1 -1v2m1 -4v5m1 -3v2m1 -2v1m1 -1v1m0 1v1m1 -4v3m1 -3v5m1 -5v2m1 -1v2m1 -2v2m1 -2v2m1 -3v3m1 -3v5m1 -3v2m1 -2v1m1 -2v2m1 -3v3m1 -3v3m1 -2v3m1 -2v1m1 -3v3m1 -1v2m1 -3v2m1 -3v4m1 -4v2m1 0v2m1 -4v4m1 -4v1m0 1v2m1 -4v3m1 -3v5m1 -4v3m1 -3v2m1 -1v2m1 -2v1m1 -2v1m0 1v1m1 -2v2m1 -3v2m1 -1v2m1 -3v1m1 -1v2m1 -3v4m1 -2v3m1 -3v1m1 -3v1m0 1v1m1 -2v3m1 -3v2m1 -2v2m1 -1v2m1 -2v1m1 -2v1m0 1v1m1 -2v2m1 -3v3m1 -3v3m1 -3v3m1 -3v2m1 -2v3m1 -3v3m1 -2v2m1 -2v2m1 -3v4m1 -3v2m1 -3v2m1 -1v1m1 -2v3m1 -3v2m1 -3v3m1 -2v3m1 -4v4m1 -3v2m1 -2v2m1 -2v3m1 -4v2m1 -2v2m1 -1v2m1 -3v3m1 -3v3m1 -3v4m1 -2v1m1 -2v1m0 1v1m1 -3v3m1 -3v2m1 -1v3m1 -3v2m1 -2v2m1 -3v3m1 -3v2m1 -2v1m1 -1v2m1 -3v4m1 -4v3m1 -3v2m0 1v1m1 -4v3m1 -1v2m1 -3v2m1 -2v3m1 -2v1m1 -2v2m1 -1v1m1 -2v2m1 -3v2m0 1v1m1 -3v3m1 -3v2m1 -2v2m1 -2v1m1 -3v4m1 -1v1m1 -2v3m1 -4v1m0 1v1m1 -2v2m1 -2v1m0 1v1m1 -4v3m1 -3v3m1 -3v1m0 1v1m1 -1v1m1 -2v2m1 -2v2m1 -1v2m1 -4v2m1 -1v3m1 -2v3m1 -4v3m1 -4v5m1 -4v2m1 -2v1m0 1v2m1 -4v2m1 -2v3m1 -3v3m1 -3v3m1 -3v2m1 -2v2m1 -2v1m0 1v1m1 -2v2m1 -3v3m1 -3v3m1 -3v2m1 -2v3m1 -3v3m1 -3v3m1 -3v3m1 -3v2m1 -2v4m1 -3v2m1 -4v4m1 -4v3m1 -1v1m1 -2v2m1 -2v1m1 0v2m1 -3v2m1 -3v3m1 -2v3m1 -4v2m1 -1v2m1 -2v2m1 -2v4m1 -4v2m1 -2v2m1 -1v1m1 -1v2m1 -3v2m1 -2v2m0 1v2m1 -5v3m1 -3v2m1 -2v3m1 -3v3m1 -3v4m1 -4v3m1 -5v5m1 -2v1m1 -1v2m1 -2v1m1 -1v2m1 -4v4m1 -3v1m0 1v1m1 -4v3m1 -3v1m0 1v1m1 -2v2m1 -3v3m1 -1v3m1 -4v3m1 -3v2m1 -2v2m1 -1v2m1 -3v3m1 -2v2m1 -2v2m1 -3v2m1 -2v2m1 -2v1m0 1v1m1 -3v2m1 -1v1m1 -3v3m1 -1v3m1 -3v2m1 -4v4m1 -4v2m1 0v3m1 -4v3m1 -3v2m1 -1v2m1 -3v2m1 -2v1m1 -1v4m1 -4v2m0 1v1m1 -5v3m1 -2v2m1 -1v1m1 -1v3m1 -3v2m1 -2v2m1 -4v1m0 1v1m1 -2v4m1 -5v3m1 -1v2m1 -3v3m1 -3v2m1 -2v3m1 -3v2m1 -2v2m1 -2v2m1 -2v3m1 -3v4m1 -4v2m1 -2v4m1 -4v1m0 1v1m1 -3v3m1 -3v2m1 -2v3m1 -3v2m1 -2v3m1 -3v4m1 -4v2m1 -2v4m1 -4v3m1 -3v3m1 -2v1m1 -1v2m1 -3v3m1 -2v2m1 -3v1m0 1v1m1 -3v3m1 -2v2m1 -2v2m1 -3v5m1 -4v2m1 -2v2m1 -3v2m1 -1v1m1 -2v4m1 -4v3m1 -3v3m1 -2v2m1 -2v2m1 -3v4m1 -4v3m1 -3v2m1 -3v4m1 -3v1m0 1v1m1 -3v2m1 -1v2m1 -3v4m1 -3v3m1 -4v3m1 -4v4m1 -2v2m1 -3v4m1 -5v4m1 -2v2m1 -2v2m1 -3v3m1 -2v2m1 -3v3m1 -5v5m1 -4v4m1 -2v3m1 -5v4m1 -2v2m1 -3v2m1 -2v3m1 -3v2m1 -1v3m1 -4v3m1 -3v1m0 1v1m1 -2v2m1 -3v3m1 -3v2m1 -1v2m1 -5v7m1 -4v2m1 -2v1m1 -2v3m1 -3v4m1 -4v2m1 -1v3m1 -3v2m1 -3v2m0 1v2m1 -4v3m1 -4v2m1 0v1m1 -3v1m0 1v1m1 -3v3m1 -2v3m1 -6v6m1 -4v2m1 -1v1m1 -2v3m1 -4v4m1 -3v1m0 1v2m1 -3v2m1 -3v3m1 -3v4m1 -2v2m1 -5v6m1 -5v3m1 -3v2m1 -1v2m1 -3v1m0 1v2m1 -3v3m1 -4v4m1 -4v3m1 -3v2m1 0v1m1 -3v3m1 -3v3m1 -2v4m1 -4v3m1 -4v1m1 0v1m1 -1v2m1 -3v3m1 -2v2m1 -3v4m1 -3v3m1 -4v3m1 -4v4m1 -3v1m0 1v1m1 -3v3m1 -3v1m0 1v1m1 -3v4m1 -4v3m1 -4v3m1 -1v3m1 -3v2m1 -2v2m1 -4v4m1 -3v3m1 -2v4m1 -4v2m1 -3v2m1 -1v2m1 -4v6m1 -5v2m1 -1v2m1 -2v2m1 -2v2m1 -3v1m0 1v1m1 -1v2m1 -3v2m1 -3v2m1 -1v3m1 -5v3m1 -1v1m1 -1v3m1 -3v2m1 -2v2m1 -4v5m1 -4v3m1 -2v2m1 -1v1m1 -3v3m1 -2v2m1 -3v4m1 -3v2m1 -1v2m1 -5v4m1 -2v2m1 -2v2m1 -2v3m1 -5v4m1 -3v3m1 -3v4m1 -3v2m1 -2v2m1 -3v3m1 -3v3m1 -2v2m1 -3v3m1 -3v1m0 1v1m1 -3v3m1 -2v2m1 -3v2m1 -1v3m1 -3v2m1 -3v5m1 -3v1m1 -3v4m1 -4v3m1 -2v2m1 -1v1m1 -2v2m1 -1v1m1 -2v3m1 -4v3m1 -3v2m1 -1v3m1 -3v2m1 -2v1m0 1v1m1 -3v2m1 -4v3m0 1v1m1 -3v2m1 -4v6m1 -4v2m1 -1v1m1 0v1m1 -3v2m1 -2v3m1 -3v3m1 -2v1m1 -2v2m1 -3v3m1 -2v2m1 -3v4m1 -3v2m1 -2v3m1 -3v2m1 -2v2m1 -2v2m1 -2v2m1 -3v1m0 1v2m1 -4v1m0 1v1m1 -1v3m1 -4v2m1 -2v2m1 -2v2m1 -3v4m1 -3v2m1 -2v2m1 -2v3m1 -2v1m1 -1v1m1 -2v3m1 -3v3m1 -2v2m1 -4v2m1 -1v2m1 -3v5m1 -4v2m1 -2v2m1 -3v1m0 1v2m1 -5v5m1 -4v3m1 -1v2m1 -4v3m1 -3v3m1 -2v3m1 -3v2m1 -2v2m1 -3v2m1 -1v2m1 -2v1m1 -1v2m1 -2v2" stroke="#8c564b" stroke-width="1" fill="none"/><path d="M1751.5 625v4m1 -5v4m1 -4v6m1 -6v6m1 -7v6m1 -3v6m1 -6v4m1 -5v6m1 -4v3m1 -5v6m1 -7v5m1 -4v4m1 -4v5m1 -4v4m1 -3v4m1 -5v3m1 -2v3m1 -3v3m1 -4v3m1 -5v5m1 -5v8m1 -6v3m1 -5v6m1 -4v4m1 -4v3m1 -4v4m1 -5v6m1 -4v5m1 -5v4m1 -6v2m0 1v2m1 -4v5m1 -4v3m1 -4v4m1 -4v4m1 -3v3m1 -3v5m1 -5v5m1 -6v3m1 -4v4m1 -3v3m1 -2v3m1 -2v4m1 -5v4m1 -6v3m0 1v3m1 -6v3m1 -1v2m1 -3v3m1 -3v5m1 -5v4m1 -3v5m1 -6v4m1 -4v3m1 -5v7m1 -6v7m1 -6v3m1 -3v4m1 -5v4m1 -2v4m1 -8v6m1 -4v4m1 -3v3m1 -3v4m1 -3v3m1 -5v7m1 -5v3m1 -4v3m1 -5v5m1 -2v3m1 -4v4m1 -3v3m1 -5v6m1 -7v7m1 -6v5m1 -5v4m1 -2v3m1 -4v4m1 -3v3m1 -4v4m1 -6v6m1 -4v5m1 -7v5m1 -4v5m1 -3v4m1 -4v2m1 -4v5m1 -5v6m1 -6v4m1 -2v3m1 -5v4m1 -5v5m1 -4v5m1 -5v5m1 -4v5m1 -5v4m1 -4v5m1 -7v6m1 -3v2m1 -3v5m1 -6v4m1 -4v3m1 -2v3m1 -3v3m1 -4v5m1 -4v4m1 -3v3m1 -4v5m1 -7v7m1 -4v3m1 -4v5m1 -6v6m1 -5v4m1 -5v4m1 -4v5m1 -4v4m1 -3v3m1 -4v3m1 -3v4m1 -4v4m1 -5v7m1 -5v4m1 -7v8m1 -5v4m1 -3v3m1 -4v5m1 -6v5m1 -5v3m1 -3v6m1 -8v5m1 -3v6m1 -6v5m1 -5v4m1 -4v4m1 -3v3m1 -4v5m1 -3v2m1 -5v5m1 -5v6m1 -3v3m1 -4v4m1 -5v5m1 -6v4m1 -2v4m1 -7v6m1 -4v3m1 -3v3m1 -2v2m1 -2v3m1 -3v3m1 -5v7m1 -5v3m1 -4v4m1 -13v13m1 -4v4m1 -4v5m1 -7v9m1 -7v7m1 -8v5m1 -4v4m1 -6v8m1 -6v5m1 -6v4m1 -3v4m1 -4v6m1 -6v6m1 -6v4m1 -5v5m1 -5v4m1 -4v5m1 -3v3m1 -4v7m1 -7v4m1 -5v5m1 -4v3m1 -2v4m1 -3v3m1 -4v3m1 -4v4m1 -4v6m1 -6v3m1 -3v4m1 -3v5m1 -6v5m1 -5v5m1 -6v5m1 -3v5m1 -4v3m1 -5v6m1 -5v3m1 -3v3m1 -3v5m1 -6v3m1 -3v7m1 -5v2m1 -3v3m1 -4v3m1 -2v4m1 -6v5m1 -5v4m1 -1v3m1 -4v4m1 -5v2m0 1v2m1 -3v4m1 -6v5m1 -6v5m1 -5v5m1 -5v6m1 -4v3m1 -4v5m1 -5v4m1 -3v5m1 -6v4m1 -4v4m1 -4v4m1 -4v5m1 -3v3m1 -4v4m1 -5v4m1 -3v5m1 -4v3m1 -4v5m1 -5v3m1 -3v3m1 -4v5m1 -6v4m1 -3v5m1 -5v4m1 -3v2m1 -3v5m1 -5v5m1 -3v5m1 -6v5m1 -6v5m1 -4v5m1 -6v5m1 -3v3m1 -5v5m1 -5v4m1 -2v3m1 -4v5m1 -5v4m1 -5v4m1 -4v4m1 -4v5m1 -6v5m1 -4v3m1 -4v5m1 -5v4m1 -1v2m1 -3v3m1 -4v3m1 -3v5m1 -4v4m1 -4v3m1 -5v7m1 -6v5m1 -4v3m1 -6v7m1 -5v5m1 -4v5m1 -5v5m1 -5v3m1 -5v3m0 1v2m1 -4v4m1 -5v2m0 1v2m1 -5v4m1 -3v5m1 -8v8m1 -6v3m1 -3v5m1 -4v3m1 -2v4m1 -14v14m1 -5v5m1 -5v5m1 -5v5m1 -6v3m1 -4v6m1 -3v4m1 -5v4m1 -3v4m1 -5v5m1 -3v2m1 -4v3m1 -5v7m1 -4v4m1 -4v3m1 -3v5m1 -6v3m1 -4v5m1 -4v4m1 -5v5m1 -5v5m1 -4v5m1 -8v7m1 -5v5m1 -3v4m1 -10v7m1 -2v4m1 -6v6m1 -5v3m1 -3v5m1 -3v2m1 -4v5m1 -4v4m1 -4v5m1 -6v5m1 -5v6m1 -6v2m0 1v3m1 -6v5m1 -4v3m1 -3v3m1 -1v3m1 -5v2m1 -2v4m1 -5v5m1 -4v3m1 -3v5m1 -5v5m1 -5v4m1 -3v3m1 -4v5m1 -7v5m1 -4v4m1 -2v2m1 -1v4m1 -6v3m1 -3v4m1 -5v7m1 -6v3m1 -4v4m1 -3v3m1 -3v3m1 -2v4m1 -4v4m1 -4v4m1 -5v4m1 -4v4m1 -6v9m1 -6v2m1 -2v2m1 -4v5m1 -6v6m1 -4v5m1 -4v3m1 -5v6m1 -5v3m1 -2v4m1 -6v5m1 -3v3m1 -2v4m1 -4v2m1 -2v3m1 -5v4m1 -3v3m1 -4v5m1 -6v6m1 -5v5m1 -7v7m1 -6v5m1 -3v3m1 -4v4m1 -3v5m1 -5v5m1 -8v7m1 -5v4m1 -3v4m1 -5v6m1 -6v2m0 1v3m1 -6v5m1 -4v3m1 -5v5m1 -5v6m1 -4v3m1 -4v5m1 -5v5m1 -6v5m1 -3v3m1 -5v5m1 -6v6m1 -5v8m1 -7v4m1 -3v4m1 -6v5m1 -4v5m1 -4v3m1 -3v3m1 -3v2m0 1v2m1 -6v4m1 -2v2m1 -5v6m1 -5v5m1 -6v7m1 -4v3m1 -3v3m1 -6v7m1 -5v4m1 -5v4m1 -6v7m1 -3v3m1 -6v6m1 -5v5m1 -6v6m1 -3v3m1 -6v6m1 -4v2m1 -3v4m1 -3v3m1 -5v6m1 -6v5m1 -3v4m1 -5v7m1 -7v4m1 -4v4m1 -3v5m1 -4v3m1 -5v5m1 -4v6m1 -8v7m1 -7v6m1 -5v5m1 -4v5m1 -5v4m1 -5v3m1 -2v4m1 -4v5m1 -6v5m1 -6v6m1 -4v4m1 -4v4m1 -4v5m1 -6v5m1 -5v5m1 -5v5m1 -5v3m1 -3v4m1 -5v5m1 -4v4m1 -3v4m1 -5v5m1 -5v5m1 -5v4m1 -2v3m1 -4v3m1 -2v4m1 -6v3m1 -1v3m1 -5v5m1 -3v3m1 -4v3m1 -2v3m1 -4v4m1 -4v3m1 -4v4m1 -3v3m1 -3v4m1 -4v4m1 -3v5m1 -7v4m1 -4v4m1 -1v2m1 -5v5m1 -3v3m1 -5v5m1 -4v3m1 -3v4m1 -5v4m1 -3v4m1 -5v6m1 -5v5m1 -5v4m1 -4v4m1 -6v6m1 -4v4m1 -9v11m1 -6v3m1 -3v4m1 -3v4m1 -5v4m1 -4v4m1 -5v6m1 -5v5m1 -5v4m1 -6v6m1 -5v4m1 -3v5m1 -4v2m1 -3v5m1 -5v3m1 -4v5m1 -4v4m1 -3v5m1 -6v4m1 -4v3m1 -3v4m1 -3v3m1 -4v4m1 -4v4m1 -5v4m1 -3v5m1 -6v4m1 -4v4m1 -2v3m1 -5v5m1 -4v4m1 -5v5m1 -5v5m1 -5v5m1 -4v3m1 -3v3m1 -4v4m1 -2v4m1 -5v3m1 -2v5m1 -5v2m1 -4v5m1 -3v2m1 -3v5m1 -5v4m1 -3v5m1 -6v6m1 -6v4m1 -3v3m1 -4v7m1 -9v7m1 -5v5m1 -7v6m1 -4v4m1 -3v3m1 -3v4m1 -5v4m1 -3v2m1 -3v4m1 -4v4m1 -2v3m1 -5v5m1 -6v7m1 -6v5m1 -6v5m1 -4v3m1 -2v4m1 -4v4m1 -4v3m1 -3v3m1 -4v4m1 -3v4m1 -4v4m1 -5v3m1 -2v4m1 -6v7m1 -5v4m1 -4v4m1 -6v5m1 -4v5m1 -6v8m1 -7v4m1 -5v5m1 -2v2m1 -12v12m1 -5v2m0 2v2m1 -5v3m1 -4v6m1 -13v12m1 -4v3m1 -4v6m1 -3v3m1 -5v4m1 -4v5m1 -6v7m1 -6v5m1 -5v3m1 -3v3m1 -3v4m1 -4v4m1 -3v4m1 -4v3m1 -4v5m1 -4v4m1 -6v7m1 -6v4m1 -5v5m1 -3v5m1 -6v5m1 -3v3m1 -4v3m1 -4v4m1 -4v5m1 -4v3m1 -3v2m1 -3v5m1 -4v5m1 -5v4m1 -5v3m1 -3v4m1 -4v6m1 -5v5m1 -4v4m1 -5v5m1 -6v4m1 -5v5m1 -4v6m1 -6v4m1 -3v4m1 -4v4m1 -5v6m1 -6v4m1 -4v4m1 -3v6m1 -5v5m1 -12v11m1 -4v4m1 -6v3m1 -3v3m1 -3v5m1 -14v14m1 -4v5m1 -7v6m1 -6v5m1 -3v4m1 -5v5m1 -4v4m1 -5v4m1 -4v7m1 -6v3m1 -4v5m1 -5v4m1 -2v4m1 -8v9m1 -6v4m1 -3v3m1 -3v3m1 -11v12m1 -11v9m1 -3v4m1 -4v4m1 -4v4m1 -7v8m1 -7v5m1 -3v3m1 -4v5m1 -6v5m1 -3v4m1 -4v5m1 -5v3m1 -5v8m1 -8v6m1 -3v2m1 -2v3m1 -3v4m1 -6v6m1 -6v4m1 -4v4m1 -4v5m1 -4v5m1 -6v5m1 -4v4m1 -5v5m1 -4v2m0 1v2m1 -5v4m1 -4v3m1 -3v3m1 -3v4m1 -5v5m1 -5v3m1 -3v6m1 -6v3m1 -2v3m1 -3v6m1 -8v4m1 -1v4m1 -6v4m1 -4v5m1 -6v5m1 -4v5m1 -4v3m1 -3v4m1 -5v4m1 -4v6m1 -8v9m1 -6v4m1 -5v5m1 -3v3m1 -3v3m1 -4v5m1 -4v4m1 -5v4m1 -4v4m1 -4v6m1 -7v4m1 -4v5m1 -4v4m1 -5v6m1 -4v3m1 -5v5m1 -3v3m1 -3v3m1 -5v6m1 -5v3m1 -2v4m1 -5v6m1 -8v5m1 -3v3m1 -3v3m1 -4v8m1 -6v4m1 -5v6m1 -6v4m1 -5v8m1 -7v2m1 -1v4m1 -5v3m1 -2v3m1 -3v4m1 -5v4m1 -3v4m1 -3v4m1 -7v4m1 -3v3m1 -3v5m1 -4v3m1 -3v3m1 -4v4m1 -3v3m1 -3v2m1 -2v3m1 -4v4m1 -4v6m1 -8v7m1 -3v2m1 -5v5m1 -5v6m1 -4v6m1 -8v4m1 -2v4m1 -4v3m1 -4v4m1 -3v4m1 -4v3m1 -4v4m1 -2v4m1 -6v4m1 -3v5m1 -15v13m1 -6v7m1 -7v7m1 -5v4m1 -5v6m1 -3v4m1 -5v5m1 -6v5m1 -5v4m1 -5v5m1 -6v7m1 -7v9m1 -8v4m1 -3v5m1 -5v4m1 -5v5m1 -3v3m1 -4v4m1 -4v4m1 -4v6m1 -5v5m1 -6v3m1 -3v6m1 -6v4m1 -5v4m1 -2v3m1 -3v5m1 -6v3m1 -3v4m1 -4v6m1 -6v5m1 -6v5m1 -6v8m1 -5v3m1 -4v5m1 -7v7m1 -5v5m1 -4v3m1 -2v4m1 -8v8m1 -7v5m1 -4v5m1 -5v3m1 -2v2m0 1v2m1 -5v4m1 -4v2m1 -1v3m1 -5v4" stroke="#9467bd" stroke-width="1" fill="none"/><path d="M1750.5 45V648 M1750 647.5H2540" stroke="#9a9a9a" stroke-width="1"/><rect x="1741" y="45" width="2" height="5" fill="#e8e8e8"/></svg><div class="lbl" style="left:1646px;width:100px;text-align:right;top:629.5px">0</div><div class="lbl" style="left:1646px;width:100px;text-align:right;top:511.5px">0.2</div><div class="lbl" style="left:1646px;width:100px;text-align:right;top:393.5px">0.4</div><div class="lbl" style="left:1646px;width:100px;text-align:right;top:275.5px">0.6</div><div class="lbl" style="left:1646px;width:100px;text-align:right;top:157.5px">0.8</div><div class="lbl" style="left:1664px;width:100px;top:340.0px;text-align:center;font-size:13.9px;transform:rotate(-90deg)">counts</div><div class="abs" style="left:1750px;top:648px;width:789px;height:24px;overflow:hidden"><div class="lbl" style="left:77.5px;width:60px;text-align:center;top:6px">-6d</div><div class="lbl" style="left:191.5px;width:60px;text-align:center;top:6px">-5d</div><div class="lbl" style="left:304.5px;width:60px;text-align:center;top:6px">-4d</div><div class="lbl" style="left:418.5px;width:60px;text-align:center;top:6px">-3d</div><div class="lbl" style="left:531.5px;width:60px;text-align:center;top:6px">-2d</div><div class="lbl" style="left:645.5px;width:60px;text-align:center;top:6px">-1d</div><div class="lbl" style="left:759.5px;width:60px;text-align:center;top:6px">0</div></div><div class="legend" style="left:1760px;top:55px;width:343px;height:63px"></div><div class="sw" style="left:1769px;top:64px;background:#9467bd"></div><div class="lt" style="left:1794px;top:67.8px">H0:VAC-MR_FAN3_170_1_ACC_INCHSEC [m-trend]</div><div class="sw" style="left:1769px;top:89px;background:#8c564b"></div><div class="lt" style="left:1794px;top:92.8px">H0:VAC-MR_FAN3_170_2_ACC_INCHSEC [m-trend]</div><svg class="abs" style="left:0;top:0;overflow:visible" width="2560" height="1413" shape-rendering="crispEdges"><path d="M67 1207.5H855M67 1148.5H855M67 1089.5H855M67 1030.5H855M67 971.5H855M67 911.5H855M67 852.5H855M67 793.5H855M67 734.5H855" stroke="#0e0e0e" stroke-width="1"/><path d="M67 1266.5H855 M66 675.5H855 M855.5 675V1278" stroke="#1e1e1e" stroke-width="1"/><path d="M173.5 675V1278M400.5 675V1278M627.5 675V1278" stroke="#1d1d1d" stroke-width="1"/><path d="M287.5 675V1278M514.5 675V1278M741.5 675V1278" stroke="#111111" stroke-width="1"/><path d="M67.5 1140v4m1 -3v3m1 -3v3m1 -3v4m1 -3v3m1 -4v4m1 -4v3m1 -3v4m1 -6v7m1 -6v4m1 -3v4m1 -4v5m1 -6v4m1 -3v3m1 -2v2m1 -3v5m1 -4v3m1 -4v2m1 -3v5m1 -5v5m1 -4v3m1 -5v5m1 -4v4m1 -3v4m1 -5v4m1 -5v6m1 -6v5m1 -3v3m1 -3v4m1 -4v4m1 -5v6m1 -6v6m1 -6v5m1 -5v3m1 -4v6m1 -5v4m1 -4v4m1 -4v3m1 -3v3m1 -2v3m1 -4v4m1 -4v3m1 -2v4m1 -3v3m1 -5v4m1 -3v3m1 -3v5m1 -5v1m1 -2v5m1 -4v3m1 -3v3m1 -4v4m1 -4v4m1 -3v2m1 -3v3m1 -3v3m1 -3v3m1 -4v6m1 -5v5m1 -4v3m1 -4v2m1 -2v5m1 -6v4m1 -2v3m1 -4v4m1 -3v4m1 -5v5m1 -5v3m1 -3v3m1 -2v3m1 -4v4m1 -4v5m1 -4v3m1 -3v3m1 -6v4m1 -1v3m1 -4v4m1 -3v3m1 -5v4m1 -2v2m1 -4v5m1 -6v5m1 -4v6m1 -5v2m1 -1v2m1 -4v4m1 -3v3m1 -3v4m1 -3v3m1 -2v2m1 -4v5m1 -5v3m1 -2v3m1 -5v5m1 -3v3m1 -4v3m1 -3v3m1 -3v5m1 -4v3m1 -4v4m1 -4v3m1 -2v3m1 -4v5m1 -5v3m1 -4v2m0 1v2m1 -4v4m1 -5v4m1 -3v3m1 -2v3m1 -4v2m1 -2v4m1 -5v3m1 -3v5m1 -3v3m1 -5v5m1 -4v3m1 -3v3m1 -3v4m1 -3v4m1 -6v5m1 -4v3m1 -2v3m1 -4v4m1 -5v6m1 -7v7m1 -5v3m1 -3v3m1 -2v4m1 -5v4m1 -5v5m1 -3v3m1 -4v3m1 -2v2m1 -4v4m1 -2v2m1 -3v3m1 -2v2m1 -5v5m1 -3v4m1 -5v5m1 -4v5m1 -5v5m1 -4v3m1 -5v6m1 -5v3m1 -2v2m1 -3v4m1 -4v4m1 -4v4m1 -4v4m1 -4v3m1 -3v4m1 -5v5m1 -4v4m1 -5v5m1 -4v3m1 -4v4m1 -4v5m1 -4v3m1 -2v3m1 -4v4m1 -4v3m1 -4v3m1 -1v2m1 -4v4m1 -3v4m1 -4v3m1 -3v4m1 -5v4m1 -2v3m1 -4v3m1 -5v7m1 -6v3m1 -4v2m0 1v2m1 -3v3m1 -2v2m1 -4v4m1 -3v3m1 -2v2m1 -2v3m1 -4v3m1 -3v3m1 -3v3m1 -4v3m1 -3v4m1 -3v4m1 -5v3m1 -3v3m1 -3v4m1 -3v4m1 -4v4m1 -4v4m1 -4v3m1 -3v3m1 -4v5m1 -4v4m1 -4v3m1 -4v4m1 -5v6m1 -4v4m1 -5v4m1 -3v4m1 -6v4m1 -1v2m1 -3v2m1 -3v4m1 -3v2m1 -1v3m1 -6v6m1 -5v3m1 -1v4m1 -5v5m1 -7v7m1 -5v3m1 -3v3m1 -3v3m1 -4v2m1 -2v4m1 -2v3m1 -4v3m1 -3v2m1 -2v3m1 -4v5m1 -4v3m1 -3v4m1 -5v5m1 -4v4m1 -5v3m1 -2v3m1 -3v4m1 -4v2m1 -2v3m1 -3v3m1 -3v3m1 -4v4m1 -5v6m1 -6v7m1 -6v3m1 -3v4m1 -3v2m1 -3v4m1 -4v5m1 -4v2m1 -4v7m1 -6v5m1 -5v4m1 -3v4m1 -4v4m1 -4v3m1 -4v5m1 -4v3m1 -4v4m1 -4v5m1 -4v4m1 -4v3m1 -4v4m1 -3v3m1 -4v6m1 -4v2m1 -4v6m1 -5v3m1 -5v4m1 -4v5m1 -3v3m1 -4v4m1 -4v4m1 -3v4m1 -5v3m1 -3v4m1 -4v5m1 -5v3m1 -3v4m1 -5v6m1 -5v4m1 -4v3m1 -2v3m1 -3v3m1 -3v3m1 -5v7m1 -6v4m1 -3v3m1 -4v6m1 -5v3m1 -5v5m1 -4v4m1 -5v4m1 -3v4m1 -4v3m1 -4v4m1 -2v3m1 -4v4m1 -4v4m1 -4v4m1 -4v5m1 -6v5m1 -4v4m1 -4v4m1 -4v3m1 -4v6m1 -5v4m1 -4v2m1 -2v3m1 -3v4m1 -3v4m1 -6v6m1 -4v3m1 -3v2m1 -3v3m1 -3v3m1 -2v4m1 -5v4m1 -4v4m1 -4v4m1 -4v4m1 -4v2m0 1v2m1 -6v5m1 -4v3m1 -4v4m1 -3v3m1 -3v4m1 -5v6m1 -5v4m1 -4v3m1 -3v3m1 -3v4m1 -5v2m0 1v1m1 -3v4m1 -4v4m1 -4v2m1 -3v3m1 -3v4m1 -3v3m1 -2v3m1 -4v5m1 -6v3m1 -2v3m1 -3v3m1 -4v6m1 -5v4m1 -5v3m1 -2v3m1 -3v4m1 -5v5m1 -4v4m1 -3v3m1 -5v5m1 -6v6m1 -5v5m1 -4v4m1 -4v3m1 -3v4m1 -4v3m1 -3v3m1 -2v2m1 -3v3m1 -3v3m1 -2v2m1 -3v4m1 -6v4m1 -3v4m1 -4v5m1 -5v4m1 -3v3m1 -3v3m1 -5v7m1 -5v2m1 -2v2m1 -3v3m1 -1v2m1 -4v6m1 -6v4m1 -2v4m1 -5v2m1 -2v3m1 -5v5m1 -2v2m1 -4v5m1 -6v7m1 -5v3m1 -4v5m1 -4v3m1 -4v6m1 -4v4m1 -6v5m1 -4v4m1 -5v4m1 -3v3m1 -3v4m1 -4v4m1 -5v4m1 -2v3m1 -4v3m1 -3v3m1 -4v5m1 -5v3m1 -3v4m1 -4v5m1 -5v5m1 -3v3m1 -4v5m1 -5v4m1 -4v3m1 -3v4m1 -4v3m1 -3v3m1 -4v3m1 -3v4m1 -3v5m1 -5v3m1 -3v3m1 -4v4m1 -2v3m1 -5v6m1 -5v3m1 -4v5m1 -4v3m1 -2v3m1 -4v3m1 -3v4m1 -4v3m1 -4v5m1 -4v4m1 -5v4m1 -3v4m1 -4v2m1 -3v5m1 -5v5m1 -3v4m1 -5v4m1 -5v5m1 -4v3m1 -4v5m1 -5v5m1 -4v4m1 -4v3m1 -4v3m1 -3v3m1 -4v6m1 -4v3m1 -5v5m1 -4v4m1 -3v5m1 -5v3m1 -3v4m1 -5v3m1 -2v3m1 -3v4m1 -4v2m1 -4v5m1 -4v5m1 -4v3m1 -4v5m1 -4v4m1 -5v4m1 -5v4m1 -2v3m1 -2v2m1 -5v4m1 -2v4m1 -5v5m1 -4v4m1 -4v3m1 -2v4m1 -5v5m1 -5v2m1 -2v4m1 -5v5m1 -5v4m1 -5v5m1 -4v3m1 -3v3m1 -3v4m1 -2v2m1 -4v4m1 -4v3m1 -4v6m1 -5v4m1 -4v5m1 -5v4m1 -4v4m1 -4v4m1 -3v2m1 -2v4m1 -5v5m1 -4v2m1 -3v4m1 -4v3m1 -4v4m1 -2v3m1 -4v5m1 -4v3m1 -5v5m1 -4v4m1 -4v3m1 -3v2m1 -2v4m1 -4v3m1 -3v4m1 -4v4m1 -5v4m1 -2v3m1 -3v3m1 -3v3m1 -4v4m1 -5v5m1 -4v3m1 -4v4m1 -4v4m1 -3v4m1 -4v4m1 -6v6m1 -3v2m1 -2v3m1 -3v3m1 -4v5m1 -5v3m1 -3v4m1 -4v3m1 -4v5m1 -4v3m1 -3v3m1 -4v4m1 -4v5m1 -4v3m1 -4v4m1 -3v3m1 -3v3m1 -2v2m1 -4v5m1 -4v4m1 -4v3m1 -5v6m1 -5v4m1 -5v5m1 -4v4m1 -4v4m1 -4v4m1 -3v2m1 -2v3m1 -2v2m1 -3v3m1 -4v3m1 -3v4m1 -2v2m1 -3v5m1 -6v4m1 -3v3m1 -4v4m1 -5v5m1 -4v4m1 -4v2m0 1v2m1 -4v2m1 -2v3m1 -4v4m1 -4v4m1 -4v4m1 -4v3m1 -4v5m1 -3v2m1 -2v3m1 -5v5m1 -5v5m1 -5v4m1 -3v4m1 -3v3m1 -3v2m1 -2v3m1 -4v3m1 -3v3m1 -4v5m1 -3v3m1 -4v4m1 -2v2m1 -5v6m1 -5v4m1 -4v4m1 -4v4m1 -5v6m1 -5v5m1 -5v4m1 -4v4m1 -3v2m1 -3v2m0 1v2m1 -4v4m1 -4v2m1 -4v3m1 -3v4m1 -3v5m1 -4v3m1 -4v4m1 -2v4m1 -6v3m1 -1v3m1 -4v3m1 -2v2m1 -3v3m1 -5v4m1 -2v3m1 -4v5m1 -4v3m1 -3v3m1 -3v3m1 -4v4m1 -3v3m1 -4v4m1 -3v3m1 -4v3m1 -3v3m1 -2v4m1 -4v3m1 -3v2m1 -2v4m1 -5v4m1 -2v2m1 -4v4m1 -2v3m1 -5v3m1 -1v2m1 -3v3m1 -5v5m1 -2v2m1 -3v3m1 -2v3m1 -5v4m1 -3v3m1 -4v4m1 -3v4m1 -4v3m1 -4v5m1 -5v4m1 -4v3m1 -1v3m1 -4v5m1 -4v3m1 -4v3m1 -4v5m1 -5v4m1 -3v3m1 -3v4m1 -4v3m1 -5v5m1 -4v4m1 -3v3m1 -3v3m1 -3v3m1 -5v5m1 -4v4m1 -3v3m1 -5v4m1 -3v4m1 -4v4m1 -5v5m1 -3v3m1 -2v3m1 -6v5m1 -3v3m1 -3v3m1 -3v3m1 -3v3m1 -3v4m1 -4v3m1 -4v4m1 -4v4m1 -3v4m1 -4v3m1 -4v4m1 -4v6m1 -6v6m1 -5v5m1 -5v3m1 -4v3m1 -2v3m1 -5v5m1 -4v6m1 -5v3m1 -2v3m1 -5v3m1 -3v4m1 -5v5m1 -3v4m1 -4v4m1 -5v5m1 -4v2m1 -3v6m1 -5v3m1 -4v5m1 -5v3m1 -3v3m1 -4v4m1 -3v4m1 -4v4m1 -3v3m1 -5v4m1 -1v2m1 -4v3m1 -1v3m1 -5v4m1 -3v2m1 -2v3m1 -5v6m1 -4v2m1 -4v5m1 -4v3m1 -4v6m1 -4v2m1 -2v4m1 -6v6m1 -5v4m1 -4v4m1 -5v5m1 -3v4m1 -6v5m1 -3v5m1 -7v4m1 -2v3m1 -4v3m1 -2v2m1 -2v4m1 -4v1m1 -2v4m1 -3v4m1 -5v5m1 -3v3m1 -5v3m1 -2v3m1 -5v7m1 -7v6m1 -5v5m1 -4v3m1 -4v4m1 -4v3m1 -2v3m1 -3v3m1 -3v3m1 -4v6m1 -7v5m1 -4v4m1 -5v4m1 -2v4m1 -5v4m1 -5v6m1 -6v5m1 -5v5m1 -4v3m1 -2v3m1 -3v3m1 -4v3m1 -3v2m0 1v2m1 -5v4m1 -3v4m1 -6v5m1 -5v5m1 -5v5m1 -3v3m1 -4v4m1 -5v6m1 -4v4m1 -5v3m1 -5v7m1 -5v4m1 -3v3m1 -3v3m1 -5v2m1 -1v4m1 -4v3m1 -4v5m1 -4v3m1 -5v5m1 -2v3m1 -4v3m1 -2v3m1 -3v3m1 -5v4m1 -2v3m1 -4v3m1 -2v4m1 -4v3m1 -4v3m1 -2v2m1 -3v2m1 -1v3m1 -4v3m1 -4v5m1 -6v7m1 -5v4m1 -4v3m1 -4v5m1 -4v3m1 -3v3" stroke="#e377c2" stroke-width="1" fill="none"/><path d="M67.5 1222v2m1 -2v3m1 -3v2m1 -2v1m0 1v1m1 -3v2m1 -2v3m1 -3v2m1 -2v2m1 -2v2m1 -3v3m1 -2v2m1 -2v2m1 -4v3m1 -1v2m1 -2v2m1 -1v1m1 -2v3m1 -3v2m1 -2v2m1 -2v2m1 -3v5m1 -4v3m1 -3v1m0 1v1m1 -4v3m1 -4v5m1 -4v2m1 -2v4m1 -3v1m1 -2v2m1 -2v3m1 -3v4m1 -3v2m1 -2v4m1 -3v2m1 -3v1m1 -2v3m1 -3v1m1 0v3m1 -4v3m1 -2v2m1 -2v2m1 -2v4m1 -4v2m1 -2v3m1 -3v3m1 -5v3m1 -1v2m1 -2v1m1 -2v1m0 1v1m1 -4v3m1 -3v4m1 -3v1m0 1v1m1 -4v3m1 -1v3m1 -4v2m1 -1v1m0 2v1m1 -5v3m1 -3v1m0 1v2m1 -3v4m1 -5v3m1 -3v1m0 1v1m1 -3v1m0 1v1m1 -2v2m1 -3v1m0 1v2m1 -3v1m0 1v1m1 -4v3m1 -2v1m0 1v1m1 -3v3m1 -4v3m1 -2v2m1 -3v1m0 1v1m1 -2v2m1 -3v2m1 -1v2m1 -1v1m1 -2v2m1 -2v1m0 1v1m1 -4v4m1 -5v3m1 -1v2m1 -3v1m0 1v1m1 -2v2m1 -3v3m1 -3v3m1 -3v2m0 1v1m1 -2v1m1 -3v3m1 -3v3m1 -3v5m1 -4v2m1 -3v4m1 -5v5m1 -3v3m1 -2v2m1 -4v2m1 0v2m1 -4v3m1 -2v2m1 -1v1m1 -4v3m1 -3v1m0 2v1m1 -1v1m1 -3v1m0 1v1m1 -3v1m0 1v1m1 -2v2m1 -4v2m0 2v1m1 -3v2m1 -3v2m1 -2v3m1 -2v2m1 -3v2m1 -1v1m1 -2v3m1 -2v2m1 -3v2m1 -2v4m1 -4v1m0 1v1m1 -4v4m1 -3v4m1 -3v2m1 -4v3m1 -1v2m1 -3v3m1 -3v3m1 -2v2m1 -1v1m1 -4v2m0 1v2m1 -3v1m1 -2v3m1 -3v1m0 1v1m1 -3v5m1 -6v3m1 -3v3m1 -2v3m1 -2v3m1 -4v1m0 1v1m1 -2v1m1 -2v1m0 1v1m1 -2v1m1 -2v5m1 -4v4m1 -5v3m1 -2v2m1 -4v5m1 -4v3m1 -3v3m1 -2v2m1 -3v3m1 -1v2m1 -3v4m1 -5v2m1 -1v1m1 -3v2m0 2v1m1 -3v2m1 -2v1m1 -1v3m1 -2v1m1 -3v3m1 -2v2m1 -3v2m0 1v1m1 -4v2m1 -1v3m1 -3v3m1 -4v2m1 -2v2m1 -1v2m1 -1v2m1 -5v2m0 1v1m1 -3v2m1 -2v3m1 -3v2m1 -1v2m1 -2v2m1 -4v4m1 -3v1m0 1v1m1 -2v1m1 -2v2m1 -2v1m1 -1v3m1 -3v3m1 -3v2m1 -1v2m1 -4v4m1 -3v2m1 -3v3m1 -2v2m1 -2v3m1 -3v3m1 -4v3m1 -2v2m1 -2v2m1 -2v1m1 -2v3m1 -2v2m1 -2v2m1 -1v2m1 -3v3m1 -4v2m0 1v1m1 -3v2m1 -2v3m1 -3v2m1 -2v3m1 -2v3m1 -3v1m1 -2v4m1 -4v2m1 -2v4m1 -4v1m1 -1v3m1 -2v2m1 -2v3m1 -4v2m1 -2v3m1 -2v3m1 -3v2m1 -3v1m0 1v1m1 -3v3m1 -2v1m1 -1v3m1 -2v1m1 -3v5m1 -4v1m1 -1v2m1 -4v3m1 -1v1m1 -2v2m1 -2v5m1 -4v2m1 -3v1m0 2v1m1 -3v2m1 -2v2m1 -3v1m0 1v1m1 -3v2m1 -2v3m1 -4v1m0 1v1m1 -2v2m1 -2v2m1 -1v2m1 -2v2m1 -4v2m1 -1v2m1 -2v2m1 -3v2m0 1v1m1 -4v4m1 -3v1m0 2v1m1 -4v2m1 -1v1m1 -2v3m1 -2v2m1 -2v1m1 -2v3m1 -2v2m1 -3v3m1 -3v2m1 -1v2m1 -4v2m1 0v1m1 -2v2m1 -1v2m1 -3v1m1 1v2m1 -5v1m0 2v1m1 -4v5m1 -5v2m1 0v2m1 -4v5m1 -3v1m1 -1v2m1 -2v1m1 -1v2m1 -3v3m1 -2v2m1 -3v2m1 -2v2m1 -2v3m1 -3v3m1 -5v3m1 0v2m1 -2v1m1 -3v5m1 -4v2m1 -2v4m1 -6v4m1 -4v4m1 -3v3m1 -3v5m1 -5v3m1 -2v2m1 0v2m1 -5v3m1 -2v2m1 -2v2m1 -3v2m1 -1v3m1 -4v3m1 -1v1m1 -1v2m1 -3v1m0 1v1m1 -3v1m0 1v1m1 -3v3m1 -3v3m1 -3v3m1 -4v3m1 -1v2m1 -3v2m1 -2v2m1 -4v6m1 -4v2m1 -2v4m1 -4v2m1 -1v2m1 -2v1m1 -2v2m1 -2v1m0 1v1m1 -2v2m1 -2v2m1 -4v1m0 2v1m1 -2v1m1 -2v3m1 -3v2m1 -2v4m1 -4v2m1 -3v4m1 -3v1m1 -1v4m1 -3v2m1 -4v4m1 -3v2m1 -2v2m1 -3v5m1 -3v2m1 -4v4m1 -2v2m1 -3v1m0 1v1m1 -2v2m1 -2v1m1 -3v3m0 1v1m1 -4v1m0 1v1m1 -3v2m1 -1v2m1 -4v4m1 -3v2m1 -2v2m1 -2v3m1 -4v3m1 -3v3m1 -2v2m1 -1v1m1 -2v3m1 -4v2m1 0v2m1 -3v3m1 -3v3m1 -3v4m1 -5v3m1 -1v2m1 -3v4m1 -4v3m1 -5v5m1 -3v4m1 -3v2m1 -3v2m1 -2v2m1 -2v2m1 -2v3m1 -3v3m1 -2v2m1 -2v2m1 -3v3m1 -3v4m1 -3v2m1 -2v1m1 -3v5m1 -4v2m1 -1v2m1 -4v4m1 -4v4m1 -3v2m1 -3v4m1 -4v3m1 -2v2m1 -2v2m1 -4v4m1 -1v2m1 -2v1m1 -2v3m1 -3v2m1 0v1m1 -4v3m1 -1v2m1 -3v2m1 -1v2m1 -4v5m1 -3v1m1 -1v2m1 -2v3m1 -4v4m1 -5v3m1 -1v1m1 -2v2m1 -2v3m1 -3v2m1 -2v1m0 2v1m1 -4v3m1 -4v5m1 -4v2m1 -4v4m1 -1v2m1 -4v3m1 -3v2m1 -1v1m1 -1v2m1 -1v2m1 -3v2m1 -1v3m1 -4v2m1 -3v3m1 -2v1m0 1v1m1 -2v3m1 -4v2m1 -2v3m1 -2v1m1 -2v3m1 -3v3m1 -2v2m1 -3v2m1 -1v2m1 -3v2m1 -1v2m1 -3v2m1 -2v1m0 1v1m1 -3v2m1 -1v3m1 -5v3m1 -2v1m1 -2v3m1 -1v2m1 -1v2m1 -5v3m1 -2v2m1 -3v3m1 -3v2m1 -1v2m1 -3v3m1 -2v2m1 -2v3m1 -4v4m1 -3v3m1 -3v1m0 1v1m1 -3v2m1 -1v2m1 -3v3m1 -2v2m1 -3v1m1 -1v1m1 -2v4m1 -3v2m1 -2v3m1 -4v1m0 1v1m1 -2v2m1 -3v3m1 -2v4m1 -4v2m1 -3v3m1 -2v3m1 -3v3m1 -3v3m1 -3v3m1 -3v2m1 -2v4m1 -4v1m0 1v2m1 -4v2m1 -3v1m0 1v1m1 -3v3m1 -3v2m1 0v1m1 -1v2m1 -4v1m0 1v1m1 -3v3m1 -1v2m1 -4v3m1 -1v2m1 -5v5m1 -2v2m1 -3v3m1 -3v1m0 1v1m1 -3v2m1 -2v1m1 -1v2m1 -3v3m1 -2v3m1 -3v2m1 -2v2m1 -3v3m1 -2v1m0 1v1m1 -3v3m1 -5v2m0 1v2m1 -3v3m1 -3v3m1 -4v4m1 -2v2m1 -2v2m1 -3v3m1 -2v2m1 -4v4m1 -2v1m1 -3v3m1 -2v3m1 -4v3m1 -4v3m1 -1v3m1 -4v3m1 -2v2m1 -4v4m1 -3v3m1 -1v1m1 -3v3m1 -2v4m1 -4v2m1 -2v4m1 -5v4m1 -3v3m1 -3v3m1 -2v2m1 -4v3m1 -4v2m0 1v1m1 -3v4m1 -2v1m1 -3v5m1 -4v2m1 -3v1m0 1v1m1 -3v1m0 1v1m1 -3v1m0 1v1m1 -2v2m1 -1v2m1 -3v2m1 -3v3m1 -2v2m1 -2v4m1 -4v3m1 -3v2m1 -2v2m1 -2v2m1 -2v2m1 -2v3m1 -4v1m0 1v1m1 -2v2m1 -3v5m1 -5v1m0 2v1m1 -4v3m1 -2v2m1 -3v4m1 -3v3m1 -3v3m1 -4v3m1 -2v2m1 -4v4m1 -2v3m1 -3v2m1 -2v3m1 -3v2m1 -3v5m1 -6v5m1 -4v3m1 -2v2m1 -2v2m1 -2v4m1 -4v2m1 -2v2m1 -2v3m1 -3v1m1 -2v4m1 -4v3m1 -2v3m1 -3v2m1 -3v1m0 1v1m1 -1v2m1 -3v2m1 -3v3m1 -2v2m1 -3v2m1 -1v4m1 -5v3m1 -2v3m1 -2v2m1 -3v1m1 0v2m1 -4v2m1 -2v4m1 -4v2m0 1v1m1 -3v2m1 -2v2m1 -2v2m1 -2v2m1 -3v4m1 -4v1m0 1v1m1 -1v2m1 -4v3m1 -3v1m0 1v1m1 -1v1m1 -2v1m1 -1v1m1 -1v4m1 -4v1m0 1v1m1 -4v2m1 -1v1m1 -2v2m1 -1v2m1 -3v3m1 -2v2m1 -3v3m1 -2v1m1 -2v4m1 -3v3m1 -4v3m1 -3v1m0 1v1m1 -2v2m1 -2v3m1 -4v2m1 -2v1m0 1v1m1 -2v3m1 -3v2m1 -2v2m1 -2v1m0 1v1m1 -3v3m1 -3v2m1 -3v1m0 1v2m1 -4v2m1 -1v1m1 -2v4m1 -3v2m1 -2v1m0 1v1m1 -3v1m1 -1v3m1 -3v1m1 -3v4m1 -2v3m1 -4v1m0 1v1m1 -3v1m0 1v1m1 -3v3m1 -1v1m0 1v1m1 -5v1m0 2v1m1 -3v2m1 -1v1m1 -2v2m1 -3v2m1 -1v2m1 -1v2m1 -4v3m1 -2v1m1 -3v3m1 0v1m1 -2v2m1 -2v4m1 -4v2m1 -3v2m1 -3v3m0 1v1m1 -3v1m1 -1v2m1 -2v2m1 -3v2m0 1v1m1 -5v3m1 -1v1m1 -1v3m1 -4v3m1 -3v3m1 -2v2m1 -2v2m1 -3v2m1 -2v3m1 -2v2m1 -3v3m1 -3v3m1 -3v2m1 -1v2m1 -4v2m0 1v1m1 -2v2m1 -3v2m1 -1v2m1 -2v2m1 -2v3m1 -3v1m1 -2v1m0 1v1m1 -2v2m1 -2v3m1 -3v3m1 -4v2m1 -2v3m1 -1v1m1 -3v2m1 -1v1m1 -3v3m1 -3v3m1 -3v4m1 -1v1m1 -1v2m1 -3v1m1 -2v3m1 -2v2m1 -2v2m1 -2v2m1 -2v2m1 -2v3m1 -4v3m1 -3v3m1 -2v3m1 -3v3m1 -5v4m1 -3v3m1 -3v3m1 -4v4m1 -2v2m1 -3v4m1 -5v5m1 -4v3m1 -3v3m1 -3v2m1 -1v2m1 -2v2m1 -2v4m1 -4v2m1 -2v1m1 0v1m1 -3v2m1 -2v2m0 1v1m1 -4v2m1 -2v1m0 1v1m1 -3v3m1 -3v2m1 -2v3m1 -3v1m0 1v2m1 -4v3m1 -2v1m1 -1v2m1 -2v2m1 -2v3m1 -5v4m1 -2v2m1 -2v3m1 -4v2m1 -3v2m1 0v1m1 -2v2m1 -3v4m1 -2v2m1 -2v2m1 -2v2m1 -3v1m0 1v1m1 -3v3m1 -3v2m1 -3v2m0 2v1m1 -4v1m0 1v2m1 -3v2m1 -3v1m0 2v1m1 -4v4m1 -4v3m1 -3v2m1 -3v3m1 -2v4m1 -5v2m1 0v2m1 -2v2m1 -3v3m1 -2v2m1 -1v1m1 -4v5m1 -3v2m1 -3v3m1 -2v1m1 -2v3m1 -3v3m1 -2v2m1 -2v2m1 -2v2m1 -2v1m1 -3v1m0 1v2m1 -2v2m1 -2v2m1 -3v1m0 1v1m1 -3v2m1 -1v1m1 -1v2m1 -3v3m1 -2v1m1 -3v3m0 1v1m1 -4v2m1 -1v2m1 -2v2m1 -1v2" stroke="#888888" stroke-width="1" fill="none"/><path d="M66.5 675V1279 M66 1278.5H856" stroke="#9a9a9a" stroke-width="1"/><rect x="57" y="675" width="2" height="5" fill="#e8e8e8"/></svg><div class="lbl" style="left:-38px;width:100px;text-align:right;top:1261.3px">0</div><div class="lbl" style="left:-38px;width:100px;text-align:right;top:1143.1px">0.2</div><div class="lbl" style="left:-38px;width:100px;text-align:right;top:1024.9px">0.4</div><div class="lbl" style="left:-38px;width:100px;text-align:right;top:906.7px">0.6</div><div class="lbl" style="left:-38px;width:100px;text-align:right;top:788.5px">0.8</div><div class="lbl" style="left:-20px;width:100px;top:970.5px;text-align:center;font-size:13.9px;transform:rotate(-90deg)">counts</div><div class="abs" style="left:66px;top:1278px;width:789px;height:24px;overflow:hidden"><div class="lbl" style="left:77.5px;width:60px;text-align:center;top:6px">-6d</div><div class="lbl" style="left:191.5px;width:60px;text-align:center;top:6px">-5d</div><div class="lbl" style="left:304.5px;width:60px;text-align:center;top:6px">-4d</div><div class="lbl" style="left:418.5px;width:60px;text-align:center;top:6px">-3d</div><div class="lbl" style="left:531.5px;width:60px;text-align:center;top:6px">-2d</div><div class="lbl" style="left:645.5px;width:60px;text-align:center;top:6px">-1d</div><div class="lbl" style="left:759.5px;width:60px;text-align:center;top:6px">0</div></div><div class="legend" style="left:76px;top:685px;width:343px;height:63px"></div><div class="sw" style="left:85px;top:694px;background:#e377c2"></div><div class="lt" style="left:110px;top:697.8px">H0:VAC-MR_FAN4_170_1_ACC_INCHSEC [m-trend]</div><div class="sw" style="left:85px;top:719px;background:#7f7f7f"></div><div class="lt" style="left:110px;top:722.8px">H0:VAC-MR_FAN4_170_2_ACC_INCHSEC [m-trend]</div><svg class="abs" style="left:0;top:0;overflow:visible" width="2560" height="1413" shape-rendering="crispEdges"><path d="M909 1207.5H1697M909 1148.5H1697M909 1089.5H1697M909 1030.5H1697M909 971.5H1697M909 911.5H1697M909 852.5H1697M909 793.5H1697M909 734.5H1697" stroke="#0e0e0e" stroke-width="1"/><path d="M909 1266.5H1697 M908 675.5H1697 M1697.5 675V1278" stroke="#1e1e1e" stroke-width="1"/><path d="M1015.5 675V1278M1242.5 675V1278M1469.5 675V1278" stroke="#1d1d1d" stroke-width="1"/><path d="M1129.5 675V1278M1356.5 675V1278M1583.5 675V1278" stroke="#111111" stroke-width="1"/><path d="M909.5 1032v12m1 -10v8m1 -8v12m1 -12v9m1 -10v10m1 -9v9m1 -8v6m1 -12v17m1 -11v8m1 -11v9m1 -9v9m1 -6v9m1 -9v6m1 -6v7m1 -7v9m1 -14v12m1 -7v10m1 -9v7m1 -9v10m1 -10v9m1 -9v8m1 -9v8m1 -9v12m1 -15v17m1 -11v6m1 -8v9m1 -10v9m1 -8v9m1 -8v9m1 -9v8m1 -8v8m1 -7v11m1 -13v9m1 -8v10m1 -12v11m1 -11v10m1 -7v9m1 -10v9m1 -9v7m1 -6v10m1 -12v10m1 -14v17m1 -12v8m1 -8v8m1 -12v12m1 -13v15m1 -12v11m1 -11v10m1 -6v7m1 -9v8m1 -9v9m1 -7v9m1 -10v12m1 -13v10m1 -13v17m1 -15v11m1 -8v8m1 -9v11m1 -10v7m1 -8v9m1 -11v10m1 -9v11m1 -11v9m1 -8v8m1 -8v8m1 -8v8m1 -7v8m1 -9v9m1 -9v11m1 -9v9m1 -10v10m1 -9v6m1 -7v7m1 -10v14m1 -11v7m1 -6v6m1 -8v10m1 -9v8m1 -9v9m1 -8v9m1 -13v15m1 -12v7m1 -11v13m1 -12v12m1 -8v7m1 -8v7m1 -6v8m1 -12v12m1 -8v11m1 -15v14m1 -10v8m1 -8v7m1 -9v8m1 -6v7m1 -8v8m1 -9v10m1 -10v10m1 -13v12m1 -7v11m1 -17v15m1 -11v8m1 -6v8m1 -10v12m1 -10v8m1 -10v9m1 -7v7m1 -10v9m1 -9v12m1 -9v10m1 -12v12m1 -11v8m1 -9v9m1 -7v7m1 -11v12m1 -11v11m1 -8v8m1 -8v8m1 -8v6m1 -9v13m1 -14v13m1 -14v14m1 -12v9m1 -6v8m1 -10v8m1 -7v7m1 -10v12m1 -11v11m1 -11v10m1 -7v7m1 -7v9m1 -9v8m1 -9v11m1 -10v8m1 -7v8m1 -10v9m1 -9v8m1 -12v16m1 -12v8m1 -6v6m1 -12v17m1 -12v7m1 -9v11m1 -10v11m1 -10v7m1 -8v8m1 -10v10m1 -9v9m1 -7v10m1 -13v10m1 -10v11m1 -9v10m1 -11v8m1 -9v12m1 -12v14m1 -16v14m1 -9v7m1 -7v8m1 -7v8m1 -9v10m1 -14v15m1 -16v12m1 -11v11m1 -8v13m1 -12v8m1 -8v9m1 -12v11m1 -11v9m1 -10v11m1 -7v7m1 -7v8m1 -8v7m1 -7v8m1 -11v10m1 -10v12m1 -10v9m1 -8v8m1 -9v8m1 -8v7m1 -7v10m1 -10v9m1 -10v11m1 -9v7m1 -7v9m1 -9v7m1 -7v8m1 -8v8m1 -14v17m1 -11v9m1 -9v9m1 -15v12m1 -10v15m1 -13v8m1 -6v6m1 -6v6m1 -8v11m1 -9v7m1 -9v8m1 -8v9m1 -8v10m1 -9v8m1 -9v7m1 -9v12m1 -10v10m1 -10v7m1 -8v8m1 -7v11m1 -10v9m1 -10v10m1 -9v10m1 -13v14m1 -12v7m1 -6v8m1 -9v7m1 -7v7m1 -8v9m1 -10v11m1 -9v8m1 -9v8m1 -9v9m1 -6v11m1 -13v10m1 -8v9m1 -9v6m1 -6v9m1 -9v8m1 -10v8m1 -8v8m1 -5v8m1 -9v7m1 -7v8m1 -8v8m1 -7v9m1 -12v9m1 -10v10m1 -6v6m1 -8v8m1 -11v13m1 -10v8m1 -12v12m1 -10v9m1 -8v12m1 -13v9m1 -7v11m1 -11v9m1 -10v10m1 -8v8m1 -8v9m1 -11v8m1 -6v6m1 -8v10m1 -12v12m1 -9v11m1 -12v10m1 -7v6m1 -8v9m1 -10v10m1 -8v12m1 -11v8m1 -13v12m1 -9v12m1 -15v15m1 -12v9m1 -7v9m1 -12v12m1 -9v8m1 -10v9m1 -9v12m1 -13v9m1 -7v9m1 -11v10m1 -8v10m1 -14v12m1 -8v8m1 -10v9m1 -7v7m1 -12v12m1 -10v10m1 -8v9m1 -10v9m1 -6v8m1 -9v12m1 -15v10m1 -7v12m1 -16v14m1 -11v9m1 -11v12m1 -13v11m1 -8v8m1 -11v12m1 -10v9m1 -7v9m1 -12v9m1 -7v7m1 -7v7m1 -6v7m1 -8v7m1 -6v7m1 -7v8m1 -12v10m1 -9v9m1 -7v9m1 -8v6m1 -7v7m1 -8v9m1 -10v14m1 -13v10m1 -9v9m1 -10v10m1 -10v9m1 -10v11m1 -8v10m1 -9v9m1 -11v9m1 -7v9m1 -9v6m1 -8v9m1 -10v11m1 -11v9m1 -9v9m1 -8v8m1 -9v9m1 -9v11m1 -9v7m1 -6v9m1 -12v10m1 -13v17m1 -13v9m1 -7v9m1 -12v10m1 -8v12m1 -13v9m1 -12v12m1 -10v8m1 -6v7m1 -8v10m1 -10v11m1 -15v11m1 -12v17m1 -11v6m1 -10v11m1 -10v10m1 -11v11m1 -12v14m1 -10v10m1 -9v8m1 -8v8m1 -8v9m1 -12v12m1 -11v9m1 -6v6m1 -9v11m1 -11v9m1 -9v9m1 -9v11m1 -8v7m1 -11v13m1 -12v11m1 -9v8m1 -9v9m1 -11v9m1 -9v10m1 -7v8m1 -9v8m1 -9v8m1 -8v9m1 -8v7m1 -6v6m1 -6v7m1 -8v7m1 -8v10m1 -10v8m1 -8v10m1 -11v9m1 -11v13m1 -11v13m1 -11v9m1 -10v8m1 -9v12m1 -9v8m1 -10v9m1 -7v10m1 -14v14m1 -10v9m1 -9v8m1 -11v9m1 -8v9m1 -7v6m1 -7v11m1 -12v10m1 -11v13m1 -10v8m1 -9v9m1 -11v11m1 -9v8m1 -10v11m1 -10v12m1 -14v11m1 -7v8m1 -8v9m1 -10v12m1 -11v6m0 1v4m1 -11v6m1 -7v11m1 -10v10m1 -15v12m1 -10v14m1 -13v11m1 -9v7m1 -10v10m1 -9v12m1 -16v15m1 -12v11m1 -10v11m1 -11v8m1 -6v8m1 -9v8m1 -11v15m1 -11v6m1 -8v8m1 -8v12m1 -10v8m1 -10v10m1 -12v10m1 -8v8m1 -6v6m1 -8v8m1 -7v8m1 -11v10m1 -8v11m1 -10v9m1 -9v8m1 -9v11m1 -9v10m1 -10v9m1 -8v8m1 -10v10m1 -11v9m1 -10v14m1 -11v10m1 -10v11m1 -11v7m1 -7v8m1 -11v10m1 -9v9m1 -8v11m1 -11v10m1 -10v7m1 -8v9m1 -8v7m1 -6v11m1 -15v11m1 -8v8m1 -7v8m1 -8v6m1 -8v9m1 -11v11m1 -8v7m1 -8v8m1 -9v9m1 -6v8m1 -8v10m1 -10v8m1 -9v8m1 -7v8m1 -7v6m0 1v3m1 -11v9m1 -11v9m1 -7v10m1 -10v7m1 -7v7m1 -9v13m1 -13v8m1 -7v9m1 -10v8m1 -8v12m1 -10v7m1 -10v13m1 -12v12m1 -13v14m1 -11v7m1 -6v9m1 -12v10m1 -9v11m1 -12v9m1 -8v8m1 -7v7m1 -9v10m1 -9v9m1 -8v8m1 -8v7m1 -8v7m1 -6v10m1 -10v8m1 -8v8m1 -8v8m1 -13v15m1 -12v12m1 -10v9m1 -10v10m1 -10v8m1 -8v7m1 -7v7m1 -7v7m1 -9v11m1 -8v9m1 -9v7m1 -8v10m1 -11v11m1 -11v12m1 -12v11m1 -11v12m1 -13v11m1 -10v11m1 -11v11m1 -9v9m1 -13v11m1 -10v11m1 -7v10m1 -14v10m1 -9v10m1 -11v10m1 -7v10m1 -11v10m1 -8v11m1 -13v11m1 -10v9m1 -10v11m1 -10v6m1 -7v8m1 -8v10m1 -11v11m1 -11v11m1 -11v8m1 -6v6m1 -6v8m1 -9v7m1 -10v14m1 -13v9m1 -9v12m1 -9v9m1 -10v11m1 -16v15m1 -9v8m1 -14v15m1 -9v7m1 -10v9m1 -7v12m1 -12v7m1 -6v6m1 -7v7m1 -6v7m1 -8v8m1 -11v13m1 -10v9m1 -9v8m1 -9v10m1 -11v11m1 -10v9m1 -8v12m1 -13v11m1 -10v8m1 -11v16m1 -17v13m1 -9v11m1 -10v7m1 -8v8m1 -8v9m1 -7v8m1 -10v8m1 -8v8m1 -10v10m1 -6v7m1 -12v14m1 -14v11m1 -11v14m1 -11v9m1 -10v11m1 -8v6m1 -6v6m1 -8v8m1 -9v11m1 -12v9m1 -6v7m1 -11v13m1 -11v10m1 -9v9m1 -14v15m1 -9v11m1 -14v11m1 -14v15m1 -11v8m1 -6v9m1 -9v8m1 -12v13m1 -11v8m1 -8v11m1 -11v9m1 -10v14m1 -14v13m1 -9v8m1 -9v9m1 -12v10m1 -7v7m1 -6v7m1 -7v8m1 -8v9m1 -12v11m1 -10v10m1 -11v9m1 -6v11m1 -12v7m1 -7v12m1 -16v12m1 -10v9m1 -11v12m1 -9v9m1 -10v11m1 -12v12m1 -9v6m1 -8v8m1 -9v9m1 -8v11m1 -12v10m1 -8v9m1 -8v10m1 -10v9m1 -11v9m1 -7v9m1 -9v6m1 -7v7m1 -6v7m1 -11v13m1 -9v9m1 -10v8m1 -7v10m1 -16v13m1 -9v11m1 -8v7m1 -10v14m1 -14v10m1 -9v9m1 -8v8m1 -8v12m1 -11v7m1 -8v6m1 -8v13m1 -11v6m1 -10v11m1 -11v10m1 -9v11m1 -11v11m1 -8v8m1 -8v8m1 -9v10m1 -11v10m1 -8v8m1 -11v9m1 -6v8m1 -9v10m1 -11v9m1 -8v8m1 -8v9m1 -10v9m1 -8v12m1 -10v10m1 -13v9m1 -9v11m1 -10v8m1 -10v15m1 -14v10m1 -10v9m1 -9v11m1 -9v11m1 -13v9m1 -7v11m1 -12v9m1 -10v9m1 -7v9m1 -9v10m1 -11v7m1 -6v7m1 -8v10m1 -14v11m1 -6v8m1 -9v10m1 -11v9m1 -6v6m1 -7v9m1 -8v8m1 -9v8m1 -8v7m1 -7v7m1 -10v10m1 -7v8m1 -8v9m1 -9v9m1 -9v10m1 -10v9m1 -9v8m1 -12v10m1 -7v7m1 -9v13m1 -11v8m1 -8v8m1 -8v8m1 -7v8m1 -12v14m1 -11v8m1 -10v10m1 -9v9m1 -9v8m1 -10v12m1 -10v9m1 -8v12m1 -14v9m1 -9v10m1 -8v10m1 -11v12m1 -11v8m1 -8v9m1 -8v8m1 -8v10m1 -12v8m1 -6v6m1 -12v12m1 -9v9m1 -10v12m1 -11v14m1 -11v6m1 -7v7m1 -7v11m1 -12v8m1 -9v9m1 -10v13m1 -11v8m1 -6v10m1 -11v9m1 -8v6m1 -11v14m1 -9v8m1 -10v8m1 -6v8m1 -10v10m1 -10v8m1 -6v11m1 -16v12m1 -7v11m1 -13v9m1 -12v12m1 -10v9m1 -6v10m1 -15v11m1 -10v11m1 -10v11m1 -8v7m1 -8v8m1 -8v10m1 -11v8m1 -10v12m1 -9v7m1 -7v12m1 -15v15m1 -12v7m1 -7v10m1 -10v8m1 -8v10m1 -11v10m1 -8v9m1 -10v9m1 -9v8m1 -7v7m1 -8v8m1 -10v11m1 -10v10m1 -10v11m1 -11v9m1 -10v11m1 -9v8m1 -8v8m1 -7v8m1 -9v10m1 -9v6m1 -6v8m1 -11v10m1 -7v8m1 -10v9m1 -13v12m1 -9v9m1 -7v7" stroke="#bcbd22" stroke-width="1" fill="none"/><path d="M909.5 1179v22m1 -17v15m1 -16v5m0 1v10m1 -19v2m0 1v20m1 -19v19m1 -25v26m1 -19v4m0 1v17m1 -21v2m0 1v17m1 -26v29m1 -29v29m1 -29v29m1 -27v26m1 -36v18m0 1v15m1 -25v26m1 -21v3m0 1v12m1 -22v23m1 -23v24m1 -22v29m1 -30v24m1 -20v7m0 1v12m1 -23v21m1 -21v28m1 -26v4m0 1v12m1 -15v1m0 1v19m1 -26v8m0 1v12m1 -21v29m1 -25v21m1 -25v8m0 1v19m1 -23v5m0 1v9m1 -14v2m0 1v15m1 -19v3m0 1v16m1 -23v20m1 -16v23m1 -24v21m1 -22v23m1 -26v26m1 -27v27m1 -23v5m0 1v11m1 -19v22m1 -24v5m0 1v16m1 -21v2m0 1v17m1 -15v2m0 1v21m1 -30v30m1 -28v19m1 -17v2m0 1v22m1 -25v18m1 -22v4m0 1v16m1 -16v15m1 -20v26m1 -22v18m1 -19v24m1 -20v1m0 1v19m1 -24v19m1 -22v23m1 -20v22m1 -23v6m0 1v15m1 -21v22m1 -22v20m1 -17v18m1 -24v8m0 1v17m1 -21v17m1 -19v20m1 -16v1m0 1v14m1 -21v25m1 -26v9m0 1v17m1 -23v21m1 -24v2m0 1v20m1 -25v29m1 -23v21m1 -26v8m0 1v13m1 -22v28m1 -24v22m1 -24v6m0 1v14m1 -27v29m1 -20v3m0 1v16m1 -28v3m0 1v24m1 -22v5m0 1v13m1 -22v4m0 1v13m1 -20v26m1 -26v9m0 1v14m1 -20v5m0 1v17m1 -27v7m0 1v17m1 -21v5m0 1v10m1 -21v19m1 -19v7m0 1v20m1 -25v4m0 1v12m1 -15v5m0 1v12m1 -20v23m1 -25v3m0 1v15m1 -18v20m1 -22v4m0 1v14m1 -29v13m0 1v1m0 1v22m1 -23v20m1 -23v20m1 -19v1m0 1v15m1 -21v2m0 1v26m1 -25v24m1 -27v20m1 -19v5m0 1v17m1 -23v21m1 -22v7m0 1v16m1 -20v21m1 -20v16m1 -18v24m1 -28v3m0 1v23m1 -26v27m1 -23v23m1 -29v26m1 -20v3m0 1v18m1 -26v4m0 1v15m1 -21v29m1 -26v17m1 -20v29m1 -28v4m0 1v23m1 -29v24m1 -17v2m0 1v13m1 -22v21m1 -23v11m0 1v16m1 -21v21m1 -20v3m0 1v20m1 -22v2m0 1v16m1 -19v21m1 -23v3m0 1v17m1 -20v1m0 1v14m1 -17v6m0 1v20m1 -29v1m0 1v22m1 -20v21m1 -19v20m1 -29v12m0 1v14m1 -19v5m0 1v18m1 -24v25m1 -28v2m0 1v17m1 -19v3m0 1v21m1 -27v22m1 -18v20m1 -22v3m0 1v22m1 -26v2m0 1v16m1 -21v27m1 -24v2m0 1v16m1 -20v24m1 -26v2m0 1v20m1 -20v22m1 -23v2m0 1v21m1 -22v16m1 -19v25m1 -27v3m0 1v21m1 -23v25m1 -29v9m0 1v11m1 -14v3m0 1v16m1 -24v22m1 -23v26m1 -21v2m0 1v16m1 -23v8m0 1v16m1 -27v21m1 -16v3m0 1v18m1 -27v9m0 1v12m1 -24v29m1 -22v20m1 -26v22m1 -19v4m0 1v19m1 -23v2m0 1v17m1 -24v23m1 -18v21m1 -29v8m0 1v14m1 -18v23m1 -22v2m0 1v16m1 -21v1m0 1v14m1 -15v2m0 1v16m1 -21v20m1 -23v24m1 -31v15m0 1v13m1 -19v25m1 -24v23m1 -23v19m1 -23v21m1 -20v8m0 1v15m1 -26v5m0 1v18m1 -19v3m0 1v19m1 -22v15m1 -17v23m1 -26v23m1 -17v15m1 -30v37m1 -27v27m1 -29v30m1 -24v18m1 -20v6m0 1v17m1 -28v22m1 -18v24m1 -27v3m0 1v19m1 -17v2m0 1v18m1 -22v2m0 1v17m1 -23v8m0 1v18m1 -29v22m1 -18v25m1 -32v32m1 -21v16m1 -21v4m0 1v16m1 -17v2m0 1v11m1 -19v7m0 1v18m1 -32v33m1 -27v5m0 1v15m1 -28v13m0 1v19m1 -27v28m1 -38v31m1 -20v24m1 -24v23m1 -23v3m0 1v21m1 -25v2m0 1v22m1 -22v21m1 -35v12m0 1v16m1 -21v28m1 -27v8m0 1v15m1 -20v18m1 -26v7m0 1v23m1 -24v1m0 1v16m1 -21v3m0 1v17m1 -17v21m1 -25v21m1 -16v18m1 -21v17m1 -14v1m0 1v16m1 -25v21m1 -19v9m0 1v10m1 -22v26m1 -23v21m1 -21v24m1 -26v28m1 -28v23m1 -19v6m0 1v15m1 -21v2m0 1v12m1 -20v5m0 1v15m1 -15v2m0 1v16m1 -19v23m1 -35v16m0 1v11m1 -16v5m0 1v16m1 -26v1m0 1v20m1 -18v1m0 1v20m1 -22v5m0 1v12m1 -21v21m1 -20v21m1 -23v24m1 -25v1m0 1v20m1 -21v21m1 -22v21m1 -17v17m1 -19v18m1 -23v7m0 1v3m0 1v19m1 -23v17m1 -17v22m1 -25v4m0 1v22m1 -24v2m0 1v12m1 -15v20m1 -24v27m1 -30v7m0 1v15m1 -23v3m0 1v17m1 -20v23m1 -24v7m0 1v14m1 -19v5m0 1v15m1 -23v26m1 -29v27m1 -24v4m0 1v20m1 -25v23m1 -24v6m0 1v21m1 -27v26m1 -22v2m0 1v18m1 -25v27m1 -28v22m1 -23v20m1 -28v12m0 1v2m0 1v14m1 -20v3m0 1v16m1 -20v3m0 1v21m1 -26v19m1 -18v2m0 1v25m1 -29v7m0 1v12m1 -16v22m1 -21v23m1 -26v21m1 -20v20m1 -23v4m0 1v17m1 -31v12m0 2v21m1 -21v19m1 -23v27m1 -26v17m1 -18v26m1 -25v17m1 -17v1m0 1v21m1 -20v15m1 -21v6m0 1v22m1 -26v27m1 -25v23m1 -25v6m0 1v14m1 -24v4m0 1v22m1 -24v21m1 -22v26m1 -23v18m1 -21v28m1 -29v29m1 -26v25m1 -25v25m1 -23v18m1 -22v1m0 1v24m1 -25v28m1 -27v23m1 -23v26m1 -24v1m0 1v21m1 -20v17m1 -19v21m1 -25v2m0 1v19m1 -17v2m0 1v16m1 -17v19m1 -27v3m0 1v17m1 -18v21m1 -20v4m0 1v20m1 -26v20m1 -21v9m0 1v14m1 -26v9m0 1v15m1 -20v2m0 1v21m1 -25v17m1 -16v21m1 -23v21m1 -21v4m0 1v16m1 -18v22m1 -31v6m0 1v21m1 -23v24m1 -21v15m1 -17v16m1 -20v9m0 1v19m1 -30v4m0 1v18m1 -19v18m1 -19v24m1 -20v21m1 -25v7m0 1v16m1 -20v17m1 -22v27m1 -22v19m1 -26v29m1 -29v2m0 1v24m1 -26v1m0 1v22m1 -25v6m0 1v23m1 -27v17m1 -17v1m0 1v21m1 -24v22m1 -20v3m0 1v12m1 -18v27m1 -26v22m1 -21v20m1 -23v24m1 -29v9m0 1v18m1 -29v14m0 1v19m1 -26v2m0 1v22m1 -29v10m0 1v11m1 -18v24m1 -24v22m1 -25v22m1 -22v20m1 -24v13m0 1v12m1 -16v2m0 1v20m1 -36v11m0 1v15m1 -14v4m0 1v18m1 -29v9m0 1v17m1 -20v20m1 -26v6m0 1v18m1 -24v22m1 -17v1m0 1v21m1 -25v1m0 1v21m1 -27v5m0 1v22m1 -27v25m1 -23v6m0 1v17m1 -25v25m1 -23v24m1 -27v26m1 -23v4m0 1v20m1 -22v4m0 1v18m1 -25v23m1 -25v3m0 1v22m1 -25v26m1 -28v20m1 -29v12m0 1v3m0 1v13m1 -18v1m0 1v18m1 -22v27m1 -29v3m0 1v22m1 -22v3m0 1v16m1 -29v9m0 1v23m1 -23v1m0 1v14m1 -15v19m1 -23v6m0 1v20m1 -28v5m0 1v18m1 -25v21m1 -19v20m1 -20v19m1 -20v5m0 1v13m1 -19v1m0 1v24m1 -25v7m0 1v16m1 -27v26m1 -22v2m0 1v16m1 -24v27m1 -26v5m0 1v23m1 -26v1m0 1v24m1 -24v4m0 1v11m1 -15v15m1 -16v17m1 -20v21m1 -21v20m1 -21v5m0 1v15m1 -22v9m0 1v12m1 -28v13m0 1v11m1 -21v21m1 -21v8m0 1v13m1 -21v19m1 -19v20m1 -22v30m1 -30v22m1 -17v1m0 1v17m1 -22v3m0 1v24m1 -32v23m1 -19v27m1 -26v27m1 -30v28m1 -28v26m1 -20v3m0 1v19m1 -26v26m1 -29v28m1 -27v20m1 -18v27m1 -25v24m1 -34v10m0 2v1m0 1v12m1 -28v30m1 -16v18m1 -23v9m0 1v10m1 -20v6m0 1v19m1 -27v8m0 1v16m1 -21v18m1 -17v2m0 1v20m1 -25v24m1 -27v29m1 -22v1m0 1v15m1 -19v5m0 1v18m1 -26v27m1 -26v5m0 1v20m1 -28v23m1 -22v27m1 -26v23m1 -22v25m1 -23v20m1 -25v19m1 -15v25m1 -28v19m1 -19v1m0 1v21m1 -22v6m0 1v14m1 -24v21m1 -26v13m0 1v17m1 -21v6m0 1v14m1 -26v24m1 -23v20m1 -16v18m1 -19v5m0 1v11m1 -21v8m0 1v14m1 -21v4m0 1v21m1 -22v20m1 -24v24m1 -19v22m1 -23v2m0 1v21m1 -26v7m0 1v13m1 -19v1m0 1v22m1 -26v2m0 1v14m1 -20v24m1 -20v19m1 -24v30m1 -25v16m1 -19v26m1 -28v24m1 -18v18m1 -20v17m1 -16v19m1 -31v11m0 1v19m1 -25v25m1 -24v8m0 1v17m1 -23v3m0 1v19m1 -22v1m0 1v18m1 -22v1m0 1v23m1 -24v3m0 1v16m1 -21v17m1 -15v22m1 -28v28m1 -25v7m0 1v18m1 -24v25m1 -28v4m0 1v18m1 -20v19m1 -20v25m1 -26v24m1 -26v9m0 1v15m1 -21v17m1 -19v24m1 -24v26m1 -22v15m1 -20v29m1 -29v22m1 -16v23m1 -25v26m1 -26v26m1 -23v21m1 -23v3m0 1v20m1 -25v21m1 -24v22m1 -15v20m1 -22v5m0 1v9m1 -15v17m1 -21v22m1 -23v7m0 1v18m1 -20v1m0 1v17m1 -19v4m0 1v16m1 -27v1m0 1v26m1 -27v5m0 1v20m1 -26v25m1 -25v3m0 1v15m1 -17v19m1 -29v30m1 -23v1m0 1v27m1 -27v24m1 -27v5m0 1v18m1 -22v25m1 -25v21m1 -24v26m1 -20v15m1 -19v6m0 1v16m1 -20v20m1 -21v5m0 1v13m1 -23v30m1 -23v21m1 -24v3m0 1v21m1 -22v21m1 -24v18m1 -20v5m0 1v12m1 -18v6m0 1v17m1 -24v24m1 -24v24m1 -26v23m1 -20v3m0 1v15m1 -17v3m0 1v17m1 -24v23m1 -20v7m0 1v14m1 -26v21m1 -20v22m1 -21v2m0 1v22m1 -27v3m0 1v26m1 -22v13m1 -19v19m1 -24v8m0 1v2m0 1v15m1 -24v9m0 1v15m1 -22v7m0 1v16m1 -24v19m1 -16v24m1 -34v9m0 1v23m1 -25v17m1 -18v18m1 -21v7m0 1v21m1 -26v4m0 1v12m1 -21v5m0 1v17m1 -20v7m0 1v10m1 -21v23m1 -20v19m1 -17v23m1 -21v23m1 -28v21m1 -23v9m0 1v14m1 -19v1m0 1v22m1 -24v16m1 -17v17m1 -22v10m0 1v10m1 -20v9m0 1v15m1 -23v6m0 1v18m1 -26v3m0 1v22m1 -21v1m0 1v19m1 -23v20m1 -22v26m1 -27v6m0 1v15m1 -24v23m1 -20v21m1 -24v24m1 -23v25m1 -25v25m1 -25v2m0 1v25m1 -25v6m0 1v10m1 -17v4m0 1v15m1 -21v22m1 -24v3m0 1v21m1 -22v19m1 -19v20m1 -23v24m1 -20v22m1 -21v2m0 1v17m1 -25v4m0 1v19m1 -25v27m1 -26v25m1 -25v9m0 1v17m1 -24v22m1 -23v6m0 1v13m1 -17v24m1 -26v3m0 1v14m1 -18v21m1 -23v5m0 1v22m1 -22v3m0 1v17m1 -28v23m1 -20v3m0 1v21m1 -25v22m1 -19v24m1 -26v20m1 -20v3m0 1v14m1 -21v28m1 -26v21m1 -20v6m0 1v15m1 -23v19m1 -20v4m0 1v21m1 -26v5m0 1v22m1 -21v2m0 1v14m1 -19v4m0 1v10m1 -14v18m1 -29v32m1 -27v28m1 -22v1m0 1v17m1 -18v17m1 -21v20m1 -20v2m0 1v13m1 -19v19m1 -18v26m1 -25v1m0 1v21m1 -23v20m1 -22v27m1 -25v20m1 -25v10m0 1v13m1 -18v18m1 -28v33m1 -24v4m0 1v15m1 -21v20m1 -19v22m1 -24v5m0 1v16m1 -21v24m1 -24v22m1 -26v20m1 -17v23m1 -24v21m1 -23v25m1 -22v17m1 -14v2m0 1v16m1 -28v30m1 -25v3m0 1v19m1 -20v25m1 -25v24m1 -27v27m1 -25v20m1 -23v21m1 -19v25m1 -24v7m0 1v15m1 -21v24m1 -27v7m0 1v20m1 -25v5m0 1v19m1 -24v1m0 1v14m1 -18v4m0 1v18m1 -25v22m1 -22v3m0 1v16m1 -19v19m1 -16v5m0 1v14m1 -19v21m1 -25v25m1 -27v9m0 1v16m1 -27v6m0 1v19m1 -26v4m0 1v22m1 -22v20m1 -23v27m1 -28v6m0 1v20m1 -37v33m1 -25v22m1 -16v3m0 1v16m1 -20v19m1 -24v6m0 1v19m1 -27v9m0 1v11m1 -16v18m1 -20v24m1 -23v18m1 -18v2m0 1v16m1 -21v1m0 1v18m1 -18v3m0 1v18m1 -27v2m0 1v22m1 -22v24m1 -21v15m1 -15v1m0 1v14m1 -20v24m1 -22v19m1 -18v23m1 -25v23m1 -23v1m0 1v23m1 -28v9m0 1v12m1 -18v19m1 -17v24m1 -27v7m0 1v12m1 -18v4m0 1v11m1 -21v10m0 1v18m1 -25v6m0 1v18m1 -26v5m0 1v15m1 -21v25m1 -27v4m0 1v23m1 -25v22m1 -22v25m1 -26v23m1 -20v5m0 1v13m1 -30v10m0 1v16m1 -16v24m1 -25v1m0 1v21m1 -26v4m0 1v22m1 -29v26m1 -24v22m1 -30v11m0 2v1m0 1v15m1 -21v3m0 1v16m1 -19v18m1 -20v6m0 1v18m1 -23v26m1 -27v25m1 -27v26m1 -21v19m1 -24v29m1 -25v21m1 -21v1m0 1v16m1 -20v5m0 1v19m1 -21v24m1 -30v8m0 1v14m1 -22v21m1 -16v15m1 -21v28m1 -22v18m1 -21v24m1 -20v16m1 -21v27m1 -22v3m0 1v11m1 -16v2m0 1v19m1 -26v21m1 -17v16m1 -16v19m1 -21v5m0 1v12m1 -19v21m1 -20v5m0 1v16m1 -24v19m1 -16v1m0 1v14m1 -17v23m1 -26v18m1 -17v5m0 1v13m1 -14v18m1 -30v31m1 -25v21m1 -17v24m1 -29v28m1 -26v21m1 -18v4m0 1v14m1 -19v1m0 1v13m1 -21v23m1 -21v3m0 1v14m1 -15v24m1 -24v16m1 -22v5m0 1v21m1 -27v7m0 1v19m1 -20v19m1 -23v20m1 -19v2m0 1v18m1 -23v19m1 -16v4m0 1v12m1 -18v4m0 1v15m1 -19v20m1 -23v19m1 -22v19m1 -18v2m0 1v16m1 -19v26m1 -28v8m0 1v17m1 -19v17m1 -23v7m0 1v20m1 -24v1m0 1v21m1 -30v11m0 1v15m1 -19v3m0 1v17m1 -27v9m0 1v12m1 -21v20m1 -20v8m0 1v19m1 -23v3m0 1v16m1 -18v4m0 1v18m1 -24v3m0 1v20m1 -26v21m1 -18v21m1 -26v26m1 -21v2m0 1v13m1 -22v5m0 1v22m1 -28v24" stroke="#17becf" stroke-width="1" fill="none"/><path d="M908.5 675V1279 M908 1278.5H1698" stroke="#9a9a9a" stroke-width="1"/><rect x="899" y="675" width="2" height="5" fill="#e8e8e8"/></svg><div class="lbl" style="left:804px;width:100px;text-align:right;top:1261.3px">0</div><div class="lbl" style="left:804px;width:100px;text-align:right;top:1143.1px">0.2</div><div class="lbl" style="left:804px;width:100px;text-align:right;top:1024.9px">0.4</div><div class="lbl" style="left:804px;width:100px;text-align:right;top:906.7px">0.6</div><div class="lbl" style="left:804px;width:100px;text-align:right;top:788.5px">0.8</div><div class="lbl" style="left:822px;width:100px;top:970.5px;text-align:center;font-size:13.9px;transform:rotate(-90deg)">counts</div><div class="abs" style="left:908px;top:1278px;width:789px;height:24px;overflow:hidden"><div class="lbl" style="left:77.5px;width:60px;text-align:center;top:6px">-6d</div><div class="lbl" style="left:191.5px;width:60px;text-align:center;top:6px">-5d</div><div class="lbl" style="left:304.5px;width:60px;text-align:center;top:6px">-4d</div><div class="lbl" style="left:418.5px;width:60px;text-align:center;top:6px">-3d</div><div class="lbl" style="left:531.5px;width:60px;text-align:center;top:6px">-2d</div><div class="lbl" style="left:645.5px;width:60px;text-align:center;top:6px">-1d</div><div class="lbl" style="left:759.5px;width:60px;text-align:center;top:6px">0</div></div><div class="legend" style="left:918px;top:685px;width:343px;height:63px"></div><div class="sw" style="left:927px;top:694px;background:#bcbd22"></div><div class="lt" style="left:952px;top:697.8px">H0:VAC-MR_FAN5_170_1_ACC_INCHSEC [m-trend]</div><div class="sw" style="left:927px;top:719px;background:#17becf"></div><div class="lt" style="left:952px;top:722.8px">H0:VAC-MR_FAN5_170_2_ACC_INCHSEC [m-trend]</div><svg class="abs" style="left:0;top:0;overflow:visible" width="2560" height="1413" shape-rendering="crispEdges"><path d="M1751 1207.5H2539M1751 1148.5H2539M1751 1089.5H2539M1751 1030.5H2539M1751 971.5H2539M1751 911.5H2539M1751 852.5H2539M1751 793.5H2539M1751 734.5H2539" stroke="#0e0e0e" stroke-width="1"/><path d="M1751 1266.5H2539 M1750 675.5H2539 M2539.5 675V1278" stroke="#1e1e1e" stroke-width="1"/><path d="M1857.5 675V1278M2084.5 675V1278M2311.5 675V1278" stroke="#1d1d1d" stroke-width="1"/><path d="M1971.5 675V1278M2198.5 675V1278M2425.5 675V1278" stroke="#111111" stroke-width="1"/><path d="M1751.5 1158v14m0 1v2m1 -19v17m1 -15v15m1 -16v12m0 1v4m1 -13v1m0 1v9m1 -17v6m0 1v12m1 -18v15m0 1v2m1 -19v7m0 1v10m1 -18v19m1 -12v8m0 1v3m1 -14v12m0 1v3m1 -15v13m1 -13v2m0 1v12m1 -16v5m0 1v7m1 -17v3m0 1v11m1 -12v14m1 -15v17m1 -17v11m0 1v3m1 -20v19m1 -14v15m0 1v1m1 -17v7m0 1v10m1 -16v10m0 1v4m1 -15v15m1 -14v13m1 -13v12m0 1v1m1 -18v16m1 -12v12m1 -14v11m0 1v3m1 -24v24m1 -15v4m0 1v8m1 -13v16m1 -19v13m0 1v6m1 -20v6m0 1v13m1 -18v9m0 1v8m1 -16v4m0 1v9m1 -17v19m1 -20v11m0 1v6m1 -12v7m0 1v6m1 -18v18m1 -14v7m0 1v4m1 -18v3m0 1v14m1 -12v1m0 1v9m1 -15v17m1 -19v4m0 1v11m1 -16v18m1 -13v14m1 -13v5m0 1v7m1 -17v19m1 -19v13m0 1v5m1 -21v18m1 -15v4m0 1v11m1 -14v15m1 -18v18m1 -17v7m0 1v7m1 -15v11m0 1v3m1 -15v8m0 1v6m1 -15v16m1 -13v2m0 1v8m1 -15v6m0 1v8m1 -16v17m1 -12v8m0 1v1m1 -10v10m1 -15v19m1 -17v5m0 1v8m1 -13v12m0 1v1m1 -17v19m1 -16v7m0 1v5m1 -15v15m1 -16v7m0 1v11m1 -23v22m1 -18v12m0 1v3m1 -16v4m0 1v14m1 -16v16m1 -14v13m1 -15v1m0 1v13m1 -16v15m1 -22v25m1 -20v7m0 1v7m1 -12v12m0 1v4m1 -15v13m1 -12v3m0 1v10m1 -20v19m1 -17v14m1 -16v18m1 -19v21m1 -24v23m1 -17v16m1 -15v11m0 1v4m1 -19v9m0 1v8m1 -12v12m1 -12v5m0 1v8m1 -17v2m0 1v13m1 -20v5m0 1v12m1 -14v16m1 -17v16m1 -12v11m1 -17v9m0 1v10m1 -19v16m1 -13v12m0 1v1m1 -19v19m1 -14v15m1 -15v12m1 -15v11m0 1v4m1 -19v10m0 1v10m1 -22v5m0 1v13m1 -11v10m0 1v4m1 -16v14m1 -18v19m1 -20v19m1 -19v2m0 1v16m1 -19v20m1 -19v11m0 1v7m1 -18v17m1 -18v11m0 1v5m1 -16v13m0 1v2m1 -17v18m0 1v1m1 -20v9m0 1v8m1 -13v12m1 -17v5m0 1v11m1 -18v13m0 1v5m1 -13v13m1 -12v12m1 -15v15m1 -17v19m1 -21v21m1 -25v21m0 1v2m1 -24v11m0 1v9m1 -14v17m1 -13v6m0 1v5m1 -12v10m1 -24v28m1 -16v14m1 -18v16m1 -15v14m0 1v3m1 -23v3m0 1v17m1 -17v8m0 1v8m1 -24v26m1 -25v20m0 1v3m1 -25v25m1 -15v12m1 -28v14m0 1v14m1 -17v19m1 -31v30m1 -32v1m0 1v31m1 -30v19m0 1v8m1 -31v21m0 1v11m1 -28v14m0 1v9m1 -15v17m1 -27v29m1 -31v22m0 1v8m1 -31v30m1 -15v12m1 -26v3m0 1v26m1 -25v22m1 -22v17m0 1v4m1 -26v16m0 1v11m1 -18v15m1 -30v23m0 1v6m1 -10v6m0 1v4m1 -22v3m0 1v19m1 -21v4m0 1v18m1 -18v1m0 1v13m1 -25v21m0 1v4m1 -17v19m1 -14v13m1 -16v6m0 1v10m1 -19v11m0 1v6m1 -20v15m0 1v4m1 -16v16m1 -16v2m0 1v11m1 -13v11m0 1v3m1 -18v7m0 1v7m1 -16v1m0 1v17m1 -21v9m0 1v8m1 -20v21m1 -14v13m1 -19v4m0 1v13m1 -11v9m0 1v1m1 -17v10m0 1v7m1 -20v19m1 -13v7m0 1v5m1 -12v14m1 -19v11m0 1v10m1 -25v24m1 -22v22m1 -20v16m1 -12v8m0 1v3m1 -15v12m0 1v3m1 -20v9m0 1v10m1 -23v13m0 1v10m1 -21v20m0 1v1m1 -31v2m0 1v26m1 -17v17m0 1v2m1 -24v5m0 1v18m1 -27v25m0 1v1m1 -29v18m0 1v9m1 -21v18m0 1v2m1 -22v22m1 -22v21m1 -20v19m1 -21v16m0 1v6m1 -30v31m1 -29v19m0 1v9m1 -24v23m1 -19v17m1 -11v11m1 -18v11m0 1v8m1 -18v14m0 1v3m1 -21v4m0 1v15m1 -20v21m0 1v1m1 -18v17m1 -22v23m1 -14v15m1 -19v10m0 1v7m1 -17v19m1 -19v2m0 1v13m1 -14v17m1 -21v9m0 1v10m1 -18v14m1 -17v19m1 -20v19m1 -16v2m0 1v12m1 -15v19m1 -16v12m1 -23v22m0 1v4m1 -20v11m0 1v6m1 -14v3m0 1v9m1 -20v19m1 -18v3m0 1v17m1 -21v5m0 1v15m1 -19v3m0 1v12m1 -17v19m1 -24v21m1 -16v18m1 -10v12m1 -18v18m1 -18v18m1 -22v1m0 1v21m1 -21v19m1 -19v1m0 1v19m1 -18v14m1 -15v5m0 1v10m1 -21v22m1 -20v15m0 1v4m1 -17v12m0 1v3m1 -13v15m1 -23v8m0 1v13m1 -11v3m0 1v8m1 -13v8m0 1v4m1 -15v1m0 1v14m1 -21v20m1 -19v13m0 1v4m1 -12v1m0 1v11m1 -11v9m1 -18v2m0 1v15m1 -18v14m0 1v6m1 -14v10m0 1v1m1 -22v17m0 1v5m1 -17v14m0 1v4m1 -24v21m1 -17v17m1 -24v28m1 -22v6m0 1v14m1 -22v22m1 -28v8m0 1v17m1 -27v9m0 1v19m1 -34v10m0 1v24m1 -21v5m0 1v15m1 -20v17m0 1v2m1 -29v19m0 1v6m1 -30v31m1 -31v4m0 1v24m1 -18v5m0 1v15m1 -31v32m1 -28v13m0 1v12m1 -18v16m1 -17v11m0 1v8m1 -26v22m1 -19v9m0 1v10m1 -19v20m1 -23v21m1 -15v16m1 -18v20m1 -16v2m0 1v9m1 -19v22m1 -16v9m0 1v6m1 -20v20m1 -18v7m0 1v10m1 -23v23m1 -17v5m0 1v9m1 -12v14m1 -16v11m0 1v3m1 -17v8m0 1v9m1 -14v3m0 1v7m1 -11v8m0 1v4m1 -18v14m0 1v2m1 -12v1m0 1v11m1 -17v9m0 1v9m1 -16v10m0 1v2m1 -10v13m1 -19v12m0 1v4m1 -15v18m1 -19v8m0 1v10m1 -19v8m0 1v8m1 -2v6m1 -7v9m1 -8v7m1 -6v5m1 -6v8m1 -9v7m1 -10v9m1 -4v6m1 -7v6m1 -7v7m1 -5v5m1 -6v8m1 -8v8m1 -9v7m1 -7v9m1 -7v5m1 -5v6m1 -8v7m1 -6v8m1 -9v7m1 -7v8m1 -8v7m1 -6v7m1 -6v6m1 -7v7m1 -11v11m1 -8v8m1 -8v7m1 -8v8m1 -5v7m1 -8v6m1 -5v5m1 -8v8m1 -6v7m1 -8v8m1 -8v8m1 -8v8m1 -9v8m1 -7v8m1 -7v7m1 -9v10m1 -9v7m1 -8v10m1 -7v6m1 -8v9m1 -9v8m1 -7v8m1 -8v7m1 -9v8m1 -6v8m1 -10v8m1 -8v8m1 -6v5m1 -6v8m1 -7v7m1 -8v6m1 -7v9m1 -9v7m1 -5v7m1 -8v6m1 -7v9m1 -7v7m1 -9v9m1 -9v9m1 -8v6m1 -6v8m1 -9v9m1 -7v5m1 -6v8m1 -6v4m1 -5v5m1 -5v8m1 -7v6m1 -6v6m1 -8v6m1 -4v7m1 -7v4m1 -6v7m1 -7v8m1 -6v7m1 -9v8m1 -8v9m1 -7v6m1 -7v7m1 -6v6m1 -9v9m1 -9v8m1 -5v7m1 -8v7m1 -8v8m1 -6v4m1 -6v7m1 -7v7m1 -6v8m1 -9v8m1 -6v6m1 -8v8m1 -7v8m1 -9v8m1 -7v6m1 -6v6m1 -7v6m1 -5v7m1 -7v5m1 -7v7m1 -5v7m1 -8v8m1 -8v7m1 -8v7m1 -6v8m1 -9v8m1 -7v7m1 -8v9m1 -8v8m1 -7v6m1 -6v5m1 -6v7m1 -6v7m1 -7v7m1 -12v10m1 -7v7m1 -6v8m1 -9v8m1 -7v7m1 -8v9m1 -7v7m1 -9v9m1 -7v7m1 -9v9m1 -9v8m1 -6v7m1 -9v7m1 -7v8m1 -8v8m1 -7v8m1 -9v8m1 -6v5m1 -6v9m1 -8v5m1 -6v8m1 -7v6m1 -7v8m1 -8v9m1 -10v9m1 -7v6m1 -7v7m1 -8v7m1 -6v8m1 -8v8m1 -9v8m1 -7v8m1 -9v8m1 -7v8m1 -9v7m1 -5v7m1 -8v7m1 -7v7m1 -6v7m1 -8v7m1 -7v7m1 -7v6m1 -5v6m1 -7v7m1 -7v6m1 -6v7m1 -7v9m1 -13v11m1 -7v8m1 -8v7m1 -6v7m1 -9v9m1 -8v7m1 -6v7m1 -8v8m1 -8v7m1 -6v6m1 -6v8m1 -7v4m1 -5v6m1 -7v7m1 -5v6m1 -7v7m1 -6v6m1 -7v7m1 -7v7m1 -7v6m1 -5v7m1 -8v6m1 -7v7m1 -7v7m1 -5v7m1 -9v6m1 -6v8m1 -9v7m1 -6v7m1 -8v9m1 -8v8m1 -8v7m1 -5v5m1 -6v8m1 -9v8m1 -6v7m1 -8v8m1 -9v9m1 -8v6m1 -6v6m1 -6v8m1 -8v7m1 -7v8m1 -8v7m1 -7v6m1 -6v9m1 -10v7m1 -6v8m1 -9v8m1 -7v6m1 -6v8m1 -8v7m1 -5v5m1 -7v7m1 -11v10m1 -7v7m1 -4v6m1 -9v9m1 -6v6m1 -9v8m1 -11v13m1 -9v7m1 -6v7m1 -8v7m1 -6v7m1 -7v6m1 -8v7m1 -6v7m1 -6v6m1 -5v6m1 -8v8m1 -7v6m1 -7v7m1 -6v7m1 -8v7m1 -5v6m1 -7v6m1 -5v6m1 -7v6m1 -8v10m1 -10v7m1 -5v7m1 -6v4m1 -5v8m1 -7v6m1 -6v4m1 -4v7m1 -9v7m1 -6v8m1 -8v7m1 -7v8m1 -9v8m1 -6v4m1 -5v6m1 -6v8m1 -7v6m1 -6v6m1 -8v8m1 -8v9m1 -10v8m1 -8v10m1 -10v7m1 -6v8m1 -9v9m1 -8v6m1 -6v7m1 -8v7m1 -5v7m1 -9v8m1 -8v9m1 -7v7m1 -7v6m1 -7v7m1 -6v7m1 -9v7m1 -7v7m1 -5v5m1 -7v8m1 -8v9m1 -10v9m1 -11v10m1 -6v8m1 -9v9m1 -8v6m1 -8v7m1 -5v8m1 -7v7m1 -9v7m1 -7v9m1 -8v7m1 -7v8m1 -8v7m1 -6v6m1 -7v8m1 -7v5m1 -6v8m1 -7v6m1 -6v7m1 -8v9m1 -9v9m1 -7v5m1 -8v10m1 -9v7m1 -7v9m1 -7v7m1 -9v9m1 -8v7m1 -7v8m1 -10v10m1 -9v8m1 -7v7m1 -7v7m1 -7v6m1 -5v4m1 -6v8m1 -8v9m1 -9v7m1 -5v6m1 -8v7m1 -7v8m1 -7v6m1 -6v8m1 -9v8m1 -9v9m1 -6v5m1 -8v8m1 -6v6m1 -5v5m1 -5v5m1 -6v6m1 -6v7m1 -8v7m1 -7v8m1 -6v5m1 -8v10m1 -10v10m1 -8v8m1 -10v9m1 -8v8m1 -7v8m1 -8v5m1 -5v7m1 -6v5m1 -6v7m1 -7v6m1 -7v9m1 -7v5m1 -8v8m1 -5v7m1 -8v5m1 -5v6m1 -11v11m1 -7v9m1 -9v8m1 -8v8m1 -6v4m1 -5v6m1 -7v6m1 -5v7m1 -9v8m1 -7v9m1 -8v5m1 -5v7m1 -8v8m1 -6v6m1 -7v7m1 -7v5m1 -6v8m1 -9v9m1 -9v8m1 -8v9m1 -8v9m1 -9v6m1 -7v8m1 -7v8m1 -7v6m1 -8v9m1 -9v9m1 -7v6m1 -7v8m1 -8v7m1 -7v8m1 -8v8m1 -7v5m1 -7v9m1 -9v9m1 -9v7m1 -6v7m1 -7v8m1 -7v7m1 -9v9m1 -8v8m1 -9v7m1 -7v8m1 -8v8m1 -7v8m1 -7v7m1 -7v6m1 -6v6m1 -6v5m1 -5v5m1 -6v7m1 -8v8m1 -8v7m1 -6v6m1 -7v9m1 -7v7m1 -8v7m1 -8v7m1 -7v7m1 -10v11m1 -6v5m1 -5v7m1 -8v7m1 -7v7m1 -6v6m1 -8v9m1 -7v8m1 -9v8m1 -7v8m1 -9v7m1 -6v7m1 -7v5m1 -5v6m1 -7v7m1 -6v6m1 -7v6m1 -5v6m1 -7v9m1 -8v6m1 -6v7m1 -7v6m1 -8v7m1 -5v7m1 -8v8m1 -7v6m1 -6v7m1 -12v10m1 -5v5m1 -6v7m1 -6v6m1 -6v6m1 -7v6m1 -6v8m1 -9v7m1 -6v8m1 -8v5m1 -5v7m1 -7v6m1 -6v5m1 -6v8m1 -7v8m1 -9v8m1 -8v8m1 -6v7m1 -9v8m1 -6v7m1 -9v8m1 -7v7m1 -7v6m1 -4v5m1 -6v8m1 -10v7m1 -9v12m1 -8v7m1 -7v6m1 -6v5m1 -4v6m1 -8v9m1 -8v6m1 -7v6m1 -6v7m1 -7v7m1 -7v9m1 -8v7m1 -8v8m1 -11v12m1 -7v5m1 -8v9" stroke="#e8227a" stroke-width="1" fill="none"/><path d="M1751.5 1266v1m1 -1v1m1 -1v1m1 -1v1m1 -1v1m1 -1v1m1 -1v1m1 -1v1m1 -1v1m1 -1v1m1 -1v1m1 -1v1m1 -1v1m1 -1v1m1 -1v1m1 -1v1m1 -1v1m1 -1v1m1 -1v1m1 -1v1m1 -1v1m1 -1v1m1 -1v1m1 -1v1m1 -1v1m1 -1v1m1 -1v1m1 -1v1m1 -1v1m1 -1v1m1 -1v1m1 -1v1m1 -1v1m1 -1v1m1 -1v1m1 -1v1m1 -1v1m1 -1v1m1 -1v1m1 -1v1m1 -1v1m1 -1v1m1 -1v1m1 -1v1m1 -1v1m1 -1v1m1 -1v1m1 -1v1m1 -1v1m1 -1v1m1 -1v1m1 -1v1m1 -1v1m1 -1v1m1 -1v1m1 -1v1m1 -1v1m1 -1v1m1 -1v1m1 -1v1m1 -1v1m1 -1v1m1 -1v1m1 -1v1m1 -1v1m1 -1v1m1 -1v1m1 -1v1m1 -1v1m1 -1v1m1 -1v1m1 -1v1m1 -1v1m1 -1v1m1 -1v1m1 -1v1m1 -1v1m1 -1v1m1 -1v1m1 -1v1m1 -1v1m1 -1v1m1 -1v1m1 -1v1m1 -1v1m1 -1v1m1 -1v1m1 -1v1m1 -1v1m1 -1v1m1 -1v1m1 -1v1m1 -1v1m1 -1v1m1 -1v1m1 -1v1m1 -1v1m1 -1v1m1 -1v1m1 -1v1m1 -1v1m1 -1v1m1 -1v1m1 -1v1m1 -1v1m1 -1v1m1 -1v1m1 -1v1m1 -1v1m1 -1v1m1 -1v1m1 -1v1m1 -1v1m1 -1v1m1 -1v1m1 -1v1m1 -1v1m1 -1v1m1 -1v1m1 -1v1m1 -1v1m1 -1v1m1 -1v1m1 -1v1m1 -1v1m1 -1v1m1 -1v1m1 -1v1m1 -1v1m1 -1v1m1 -1v1m1 -1v1m1 -1v1m1 -1v1m1 -1v1m1 -1v1m1 -1v1m1 -1v1m1 -1v1m1 -1v1m1 -1v1m1 -1v1m1 -1v1m1 -1v1m1 -1v1m1 -1v1m1 -1v1m1 -1v1m1 -1v1m1 -1v1m1 -1v1m1 -1v1m1 -1v1m1 -1v1m1 -1v1m1 -1v1m1 -1v1m1 -1v1m1 -1v1m1 -1v1m1 -1v1m1 -1v1m1 -1v1m1 -1v1m1 -1v1m1 -1v1m1 -1v1m1 -1v1m1 -1v1m1 -1v1m1 -1v1m1 -1v1m1 -1v1m1 -1v1m1 -1v1m1 -1v1m1 -1v1m1 -1v1m1 -1v1m1 -1v1m1 -1v1m1 -1v1m1 -1v1m1 -1v1m1 -1v1m1 -1v1m1 -1v1m1 -1v1m1 -1v1m1 -1v1m1 -1v1m1 -1v1m1 -1v1m1 -1v1m1 -1v1m1 -1v1m1 -1v1m1 -1v1m1 -1v1m1 -1v1m1 -1v1m1 -1v1m1 -1v1m1 -1v1m1 -1v1m1 -1v1m1 -1v1m1 -1v1m1 -1v1m1 -1v1m1 -1v1m1 -1v1m1 -1v1m1 -1v1m1 -1v1m1 -1v1m1 -1v1m1 -1v1m1 -1v1m1 -1v1m1 -1v1m1 -1v1m1 -1v1m1 -1v1m1 -1v1m1 -1v1m1 -1v1m1 -1v1m1 -1v1m1 -1v1m1 -1v1m1 -1v1m1 -1v1m1 -1v1m1 -1v1m1 -1v1m1 -1v1m1 -1v1m1 -1v1m1 -1v1m1 -1v1m1 -1v1m1 -1v1m1 -1v1m1 -1v1m1 -1v1m1 -1v1m1 -1v1m1 -1v1m1 -1v1m1 -1v1m1 -1v1m1 -1v1m1 -1v1m1 -1v1m1 -1v1m1 -1v1m1 -1v1m1 -1v1m1 -1v1m1 -1v1m1 -1v1m1 -1v1m1 -1v1m1 -1v1m1 -1v1m1 -1v1m1 -1v1m1 -1v1m1 -1v1m1 -1v1m1 -1v1m1 -1v1m1 -1v1m1 -1v1m1 -1v1m1 -1v1m1 -1v1m1 -1v1m1 -1v1m1 -1v1m1 -1v1m1 -1v1m1 -1v1m1 -1v1m1 -1v1m1 -1v1m1 -1v1m1 -1v1m1 -1v1m1 -1v1m1 -1v1m1 -1v1m1 -1v1m1 -1v1m1 -1v1m1 -1v1m1 -1v1m1 -1v1m1 -1v1m1 -1v1m1 -1v1m1 -1v1m1 -1v1m1 -1v1m1 -1v1m1 -1v1m1 -1v1m1 -1v1m1 -1v1m1 -1v1m1 -1v1m1 -1v1m1 -1v1m1 -1v1m1 -1v1m1 -1v1m1 -1v1m1 -1v1m1 -1v1m1 -1v1m1 -1v1m1 -1v1m1 -1v1m1 -1v1m1 -1v1m1 -1v1m1 -1v1m1 -1v1m1 -1v1m1 -1v1m1 -1v1m1 -1v1m1 -1v1m1 -1v1m1 -1v1m1 -1v1m1 -1v1m1 -1v1m1 -1v1m1 -1v1m1 -1v1m1 -1v1m1 -1v1m1 -1v1m1 -1v1m1 -1v1m1 -1v1m1 -1v1m1 -1v1m1 -1v1m1 -1v1m1 -1v1m1 -1v1m1 -1v1m1 -1v1m1 -1v1m1 -1v1m1 -1v1m1 -1v1m1 -1v1m1 -1v1m1 -1v1m1 -1v1m1 -1v1m1 -1v1m1 -1v1m1 -1v1m1 -1v1m1 -1v1m1 -1v1m1 -1v1m1 -1v1m1 -1v1m1 -1v1m1 -1v1m1 -1v1m1 -1v1m1 -1v1m1 -1v1m1 -1v1m1 -1v1m1 -1v1m1 -1v1m1 -1v1m1 -1v1m1 -1v1m1 -1v1m1 -1v1m1 -1v1m1 -1v1m1 -1v1m1 -1v1m1 -1v1m1 -1v1m1 -1v1m1 -1v1m1 -1v1m1 -1v1m1 -1v1m1 -1v1m1 -1v1m1 -1v1m1 -1v1m1 -1v1m1 -1v1m1 -1v1m1 -1v1m1 -1v1m1 -1v1m1 -1v1m1 -1v1m1 -1v1m1 -1v1m1 -1v1m1 -1v1m1 -1v1m1 -1v1m1 -1v1m1 -1v1m1 -1v1m1 -1v1m1 -1v1m1 -1v1m1 -1v1m1 -1v1m1 -1v1m1 -1v1m1 -1v1m1 -1v1m1 -1v1m1 -1v1m1 -1v1m1 -1v1m1 -1v1m1 -1v1m1 -1v1m1 -1v1m1 -1v1m1 -1v1m1 -1v1m1 -1v1m1 -1v1m1 -1v1m1 -1v1m1 -1v1m1 -1v1m1 -1v1m1 -1v1m1 -1v1m1 -1v1m1 -1v1m1 -1v1m1 -1v1m1 -1v1m1 -1v1m1 -1v1m1 -1v1m1 -1v1m1 -1v1m1 -1v1m1 -1v1m1 -1v1m1 -1v1m1 -1v1m1 -1v1m1 -1v1m1 -1v1m1 -1v1m1 -1v1m1 -1v1m1 -1v1m1 -1v1m1 -1v1m1 -1v1m1 -1v1m1 -1v1m1 -1v1m1 -1v1m1 -1v1m1 -1v1m1 -1v1m1 -1v1m1 -1v1m1 -1v1m1 -1v1m1 -1v1m1 -1v1m1 -1v1m1 -1v1m1 -1v1m1 -1v1m1 -1v1m1 -1v1m1 -1v1m1 -1v1m1 -1v1m1 -1v1m1 -1v1m1 -1v1m1 -1v1m1 -1v1m1 -1v1m1 -1v1m1 -1v1m1 -1v1m1 -1v1m1 -1v1m1 -1v1m1 -1v1m1 -1v1m1 -1v1m1 -1v1m1 -1v1m1 -1v1m1 -1v1m1 -1v1m1 -1v1m1 -1v1m1 -1v1m1 -1v1m1 -1v1m1 -1v1m1 -1v1m1 -1v1m1 -1v1m1 -1v1m1 -1v1m1 -1v1m1 -1v1m1 -1v1m1 -1v1m1 -1v1m1 -1v1m1 -1v1m1 -1v1m1 -1v1m1 -1v1m1 -1v1m1 -1v1m1 -1v1m1 -1v1m1 -1v1m1 -1v1m1 -1v1m1 -1v1m1 -1v1m1 -1v1m1 -1v1m1 -1v1m1 -1v1m1 -1v1m1 -1v1m1 -1v1m1 -1v1m1 -1v1m1 -1v1m1 -1v1m1 -1v1m1 -1v1m1 -1v1m1 -1v1m1 -1v1m1 -1v1m1 -1v1m1 -1v1m1 -1v1m1 -1v1m1 -1v1m1 -1v1m1 -1v1m1 -1v1m1 -1v1m1 -1v1m1 -1v1m1 -1v1m1 -1v1m1 -1v1m1 -1v1m1 -1v1m1 -1v1m1 -1v1m1 -1v1m1 -1v1m1 -1v1m1 -1v1m1 -1v1m1 -1v1m1 -1v1m1 -1v1m1 -1v1m1 -1v1m1 -1v1m1 -1v1m1 -1v1m1 -1v1m1 -1v1m1 -1v1m1 -1v1m1 -1v1m1 -1v1m1 -1v1m1 -1v1m1 -1v1m1 -1v1m1 -1v1m1 -1v1m1 -1v1m1 -1v1m1 -1v1m1 -1v1m1 -1v1m1 -1v1m1 -1v1m1 -1v1m1 -1v1m1 -1v1m1 -1v1m1 -1v1m1 -1v1m1 -1v1m1 -1v1m1 -1v1m1 -1v1m1 -1v1m1 -1v1m1 -1v1m1 -1v1m1 -1v1m1 -1v1m1 -1v1m1 -1v1m1 -1v1m1 -1v1m1 -1v1m1 -1v1m1 -1v1m1 -1v1m1 -1v1m1 -1v1m1 -1v1m1 -1v1m1 -1v1m1 -1v1m1 -1v1m1 -1v1m1 -1v1m1 -1v1m1 -1v1m1 -1v1m1 -1v1m1 -1v1m1 -1v1m1 -1v1m1 -1v1m1 -1v1m1 -1v1m1 -1v1m1 -1v1m1 -1v1m1 -1v1m1 -1v1m1 -1v1m1 -1v1m1 -1v1m1 -1v1m1 -1v1m1 -1v1m1 -1v1m1 -1v1m1 -1v1m1 -1v1m1 -1v1m1 -1v1m1 -1v1m1 -1v1m1 -1v1m1 -1v1m1 -1v1m1 -1v1m1 -1v1m1 -1v1m1 -1v1m1 -1v1m1 -1v1m1 -1v1m1 -1v1m1 -1v1m1 -1v1m1 -1v1m1 -1v1m1 -1v1m1 -1v1m1 -1v1m1 -1v1m1 -1v1m1 -1v1m1 -1v1m1 -1v1m1 -1v1m1 -1v1m1 -1v1m1 -1v1m1 -1v1m1 -1v1m1 -1v1m1 -1v1m1 -1v1m1 -1v1m1 -1v1m1 -1v1m1 -1v1m1 -1v1m1 -1v1m1 -1v1m1 -1v1m1 -1v1m1 -1v1m1 -1v1m1 -1v1m1 -1v1m1 -1v1m1 -1v1m1 -1v1m1 -1v1m1 -1v1m1 -1v1m1 -1v1m1 -1v1m1 -1v1m1 -1v1m1 -1v1m1 -1v1m1 -1v1m1 -1v1m1 -1v1m1 -1v1m1 -1v1m1 -1v1m1 -1v1m1 -1v1m1 -1v1m1 -1v1m1 -1v1m1 -1v1m1 -1v1m1 -1v1m1 -1v1m1 -1v1m1 -1v1m1 -1v1m1 -1v1m1 -1v1m1 -1v1m1 -1v1m1 -1v1m1 -1v1m1 -1v1m1 -1v1m1 -1v1m1 -1v1m1 -1v1m1 -1v1m1 -1v1m1 -1v1m1 -1v1m1 -1v1m1 -1v1m1 -1v1m1 -1v1m1 -1v1m1 -1v1m1 -1v1m1 -1v1m1 -1v1m1 -1v1m1 -1v1m1 -1v1m1 -1v1m1 -1v1m1 -1v1m1 -1v1m1 -1v1m1 -1v1m1 -1v1m1 -1v1m1 -1v1m1 -1v1m1 -1v1" stroke="#a50010" stroke-width="1" fill="none"/><path d="M1750.5 675V1279 M1750 1278.5H2540" stroke="#9a9a9a" stroke-width="1"/><rect x="1741" y="675" width="2" height="5" fill="#e8e8e8"/></svg><div class="lbl" style="left:1646px;width:100px;text-align:right;top:1261.3px">0</div><div class="lbl" style="left:1646px;width:100px;text-align:right;top:1143.1px">0.2</div><div class="lbl" style="left:1646px;width:100px;text-align:right;top:1024.9px">0.4</div><div class="lbl" style="left:1646px;width:100px;text-align:right;top:906.7px">0.6</div><div class="lbl" style="left:1646px;width:100px;text-align:right;top:788.5px">0.8</div><div class="lbl" style="left:1664px;width:100px;top:970.5px;text-align:center;font-size:13.9px;transform:rotate(-90deg)">counts</div><div class="abs" style="left:1750px;top:1278px;width:789px;height:24px;overflow:hidden"><div class="lbl" style="left:77.5px;width:60px;text-align:center;top:6px">-6d</div><div class="lbl" style="left:191.5px;width:60px;text-align:center;top:6px">-5d</div><div class="lbl" style="left:304.5px;width:60px;text-align:center;top:6px">-4d</div><div class="lbl" style="left:418.5px;width:60px;text-align:center;top:6px">-3d</div><div class="lbl" style="left:531.5px;width:60px;text-align:center;top:6px">-2d</div><div class="lbl" style="left:645.5px;width:60px;text-align:center;top:6px">-1d</div><div class="lbl" style="left:759.5px;width:60px;text-align:center;top:6px">0</div></div><div class="legend" style="left:1760px;top:685px;width:343px;height:63px"></div><div class="sw" style="left:1769px;top:694px;background:#e8227a"></div><div class="lt" style="left:1794px;top:697.8px">H0:VAC-MR_FAN6_170_1_ACC_INCHSEC [m-trend]</div><div class="sw" style="left:1769px;top:719px;background:#a50010"></div><div class="lt" style="left:1794px;top:722.8px">H0:VAC-MR_FAN6_170_2_ACC_INCHSEC [m-trend]</div><div class="lbl" style="left:0;width:2560px;text-align:center;top:1322px;font-size:16.2px;line-height:18px;color:#f0f0f0">t0 = Thu Dec 18 2025 22:29:19 UTC [1450132177.3128]</div><svg class="abs" style="left:1485px;top:830px" width="14" height="20" viewBox="0 0 14 20" shape-rendering="crispEdges">
<path d="M1.5 1.5V13.5L4.5 10.5L7.5 16.5H9.5L8.5 13.5L7.5 10.5H10.5Z" fill="#000" stroke="#fff" stroke-width="1"/></svg><div class="btn" style="left:2px;top:1356px;width:100px"><svg style="position:absolute;left:9px;top:6px" width="12" height="12"><path d="M1.5 1.5 L9.5 6 L1.5 10.5 Z" fill="#e6e6e6" stroke="#c2c2c2" stroke-width="1"/></svg><span style="padding-left:14px">start online</span></div><div class="btn" style="left:104px;top:1356px;width:100px;color:#bdbdbd"><span style="position:absolute;left:11px;top:7px;width:8px;height:8px;border:1px solid #cacaca;background:linear-gradient(135deg,#e0e0e0,#fafafa)"></span><span style="padding-left:14px">stop online</span></div><div class="btn" style="left:206px;top:1356px;width:100px">reset</div><div class="btn" style="left:308px;top:1356px;width:100px">add channels</div><div class="lbl" style="left:15px;top:1392px;color:#222;font-size:12.46px">h1daqnds1:8088&nbsp; [427999 channels]</div><div class="btn" style="left:2448px;top:1356px;width:80px">snapshot</div><svg class="abs" style="left:2536px;top:1363px" width="16" height="12"><path d="M2 10 L8 2.5 L14 10 Z" fill="#333"/></svg><div class="lbl" style="left:2403px;top:1392px;color:#0000ff;font-size:12.54px"><u>ndscope</u> <u>0.19.3</u> <span style="color:#222">(</span><u>report bug</u><span style="color:#222">)</span></div><div class="abs" style="left:1127px;top:1364px;width:306px;height:60px;background:#f6f5f3;border:1px solid #a9a39d;box-shadow:0 -3px 10px rgba(0,0,0,0.10)"></div><svg class="abs" style="left:1127px;top:1364px" width="306" height="49">
<defs>
<linearGradient id="lens" x1="0" y1="0" x2="0" y2="1"><stop offset="0" stop-color="#26b4e6"/><stop offset="1" stop-color="#c4ecf8"/></linearGradient>
<linearGradient id="fback" x1="0" y1="0" x2="0" y2="1"><stop offset="0" stop-color="#8a8a8a"/><stop offset="1" stop-color="#6a6a6a"/></linearGradient>
<linearGradient id="ffront" x1="0" y1="0" x2="0" y2="1"><stop offset="0" stop-color="#86b0e0"/><stop offset="1" stop-color="#6596d3"/></linearGradient>
</defs>
<rect x="4.5" y="4" width="41" height="41" rx="4" fill="#4a5c69"/>
<path d="M4.5 30.5 V8 a4 4 0 0 1 4 -4 h33 a4 4 0 0 1 4 4 V30.5 z" fill="#00a9df"/>
<rect x="4.5" y="30.5" width="41" height="1.2" fill="#2a3a45"/>
<rect x="52" y="8" width="2" height="34.6" fill="#7d7d7d"/>
<rect x="62" y="8" width="38" height="35" rx="3" fill="#a9b1b7"/>
<rect x="62" y="7" width="38" height="34.5" rx="3" fill="#d3d9dd"/>
<rect x="64.6" y="9.9" width="32.7" height="28.8" rx="1" fill="#263340"/>
<path d="M67.3 13.3 L71.8 16.4 L67.3 19.5" stroke="#f4f4f4" stroke-width="1.4" fill="none"/>
<rect x="74" y="21.4" width="5.2" height="1.4" fill="#f4f4f4"/>
<rect x="114.5" y="8.5" width="29" height="35" rx="2" fill="#c5ccd1"/>
<rect x="115" y="7" width="28" height="34.4" rx="2" fill="#00aadf"/>
<rect x="115" y="23.3" width="28" height="1.3" fill="#0b8cbd"/>
<rect x="125" y="14" width="7.7" height="1.8" rx="0.9" fill="#9aa3a9"/>
<rect x="125" y="30.6" width="7.7" height="1.8" rx="0.9" fill="#9aa3a9"/>
<circle cx="177" cy="24.9" r="21.1" fill="#00a9df"/>
<g fill="#6bcfee">
<path d="M169 4.2 Q174 3.6 179.2 4.4 L174.3 14.6 Z"/>
<path d="M156 22.5 Q157 15 162 10 Q165 7.5 168 6.5 L171.8 13 Q172.5 18 171 20.6 L161.6 27.5 Q158 27 156.3 25 Z"/>
<path d="M180.6 19.6 L184.6 12 Q187 9.5 189.6 8.5 Q194 9.5 196.5 14 L197.9 21 L193 22 L189.6 21 L184.6 21.6 Z"/>
<path d="M179.3 24.6 L183 23 L191.3 23.6 L195.6 28 Q196.5 31 195 34 L190.3 40.3 L186.3 38 L185 32 L180.3 30.6 Z"/>
<path d="M171.6 30.3 L174.6 31.3 L174.3 35.3 L172 38.6 Z"/>
</g>
<path d="M171.6 20.6 V43 L166.3 38 L163 44.6 L159.3 44 L160.6 36 L155.3 35.3 Z" fill="#eef1f4"/>
<rect x="207" y="8" width="35.7" height="35" rx="3" fill="#b2b9be"/>
<rect x="207" y="7" width="35.7" height="34.6" rx="3" fill="#d5dadd"/>
<g fill="#62cdef">
<rect x="210" y="10" width="6" height="6"/><rect x="217.8" y="10" width="6" height="6"/><rect x="225.6" y="10" width="6" height="6"/><rect x="234" y="10" width="6" height="6"/>
<rect x="210" y="17.4" width="6" height="6"/><rect x="234" y="17.4" width="6" height="6"/>
<rect x="210" y="25" width="6" height="6"/>
<rect x="210" y="32.6" width="6" height="6"/><rect x="217.8" y="32.6" width="6" height="6"/>
</g>
<circle cx="222.4" cy="21.3" r="9.8" fill="url(#lens)" stroke="#1e2a33" stroke-width="2"/>
<path d="M230.5 29.5 L238 37" stroke="#1e2a33" stroke-width="3.6" stroke-linecap="round"/>
<circle cx="229.8" cy="28.8" r="1.3" fill="#e0c040"/>
<rect x="252" y="8" width="2" height="34.6" fill="#7d7d7d"/>
<path d="M262 10 a2 2 0 0 1 2 -2 h14 l2 3 h12 a2 2 0 0 1 2 2 V38 H262 Z" fill="url(#fback)"/>
<path d="M263.5 17.3 H299.8 L298.3 38.4 a1.5 1.5 0 0 1 -1.5 1.4 H263.5 a1.2 1.2 0 0 1 -1.2 -1.2 Z" fill="url(#ffront)" stroke="#4a7cc4" stroke-width="0.8"/>
</svg></body></html>
